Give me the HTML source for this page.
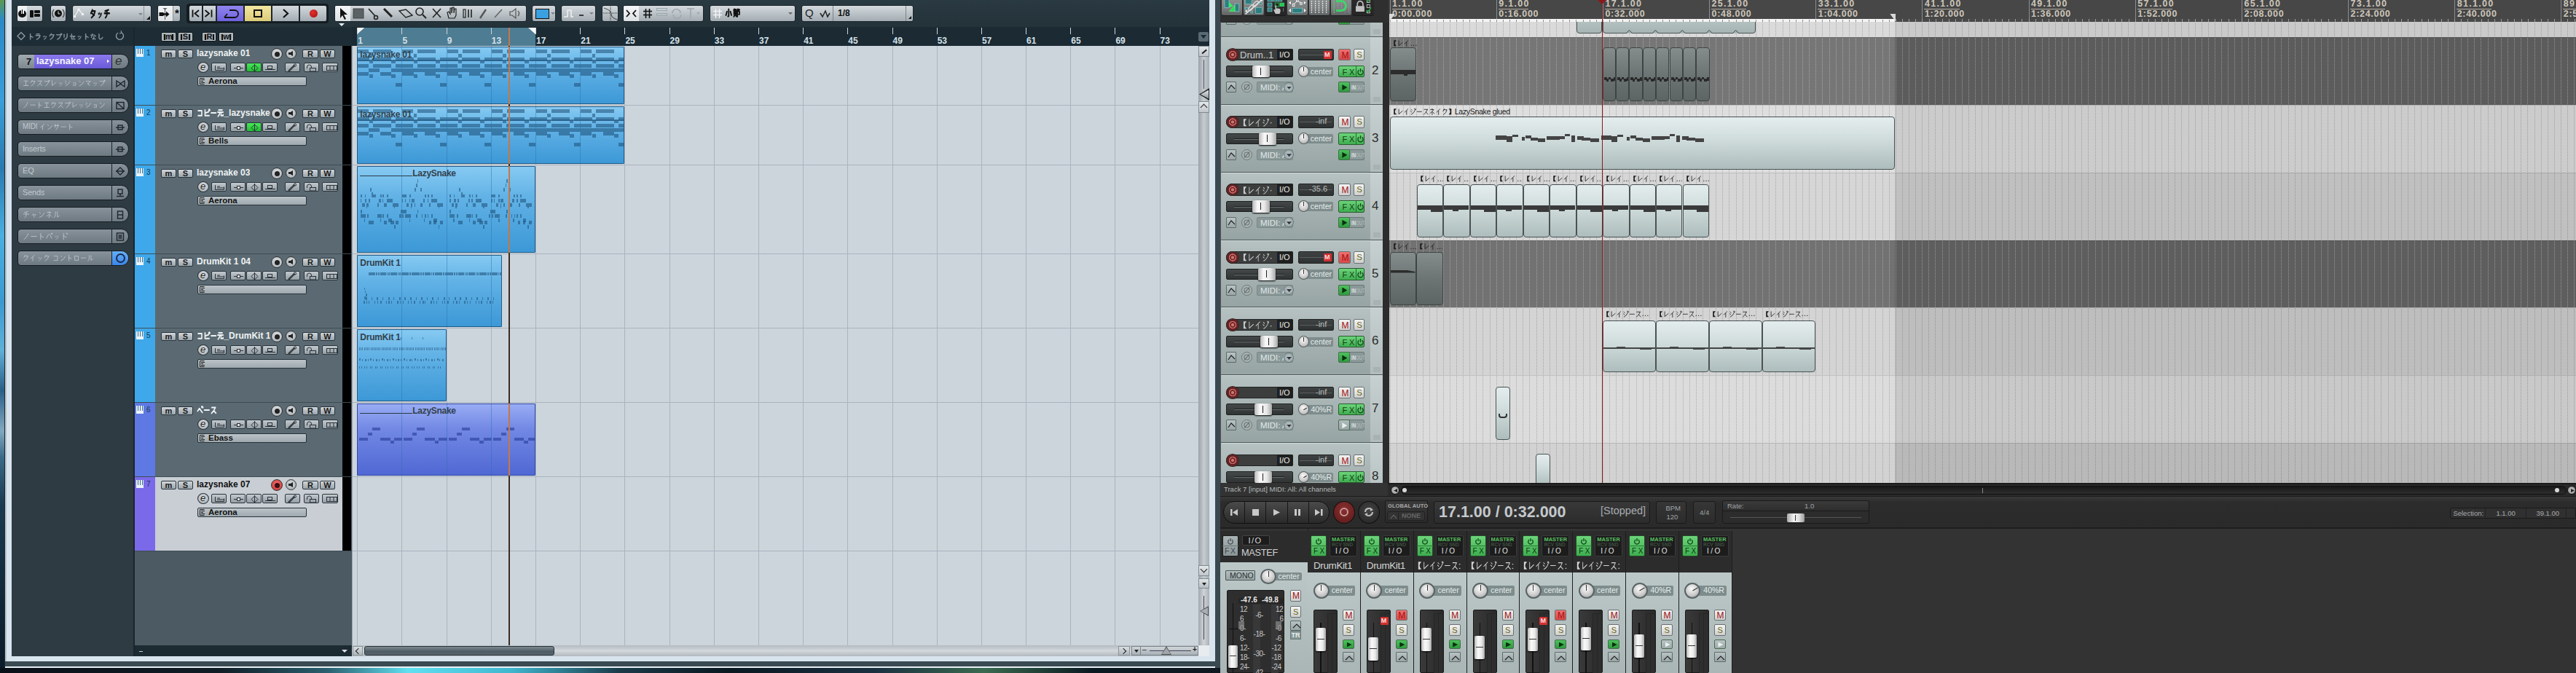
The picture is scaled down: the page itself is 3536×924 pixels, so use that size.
<!DOCTYPE html><html><head><meta charset="utf-8"><style>
html,body{margin:0;padding:0;}
body{width:3536px;height:924px;overflow:hidden;position:relative;background:#333;font-family:"Liberation Sans",sans-serif;}
div{position:absolute;box-sizing:border-box;}
.cb{background:linear-gradient(180deg,#d2d8dc 0%,#b4bcc2 50%,#9ca6ac 100%);border:1px solid #27323a;border-radius:2px;color:#1a1a1a;font-weight:bold;text-align:center;overflow:hidden}
.cbs{background:linear-gradient(180deg,#c8ced2 0%,#aab2b8 60%,#959fa5 100%);border:1px solid #2a353c;border-radius:3px;color:#222;text-align:center;overflow:hidden;font-size:10px;line-height:11px}
.cbg{background:linear-gradient(180deg,#6ef07a 0%,#2ed042 60%,#20b030 100%);border:1px solid #204020;border-radius:3px;color:#104010;text-align:center;font-size:10px;line-height:11px}
.circ{border-radius:50%;background:radial-gradient(circle at 50% 40%,#e0e4e6,#9aa2a8);border:1px solid #2a3238}
.ib{background:linear-gradient(180deg,#c4cbd0 0%,#a9b2b8 100%);border:1px solid #27323a;border-radius:3px}
.insp{background:linear-gradient(180deg,#8e999f 0%,#77838a 100%);border:1px solid #1a242a;border-radius:4px 11px 11px 4px;color:#b8c2c8;font-size:12px;line-height:20px;padding-left:8px;white-space:nowrap;overflow:hidden}
.part{border:1px solid #1e5c8c;border-radius:1px;overflow:hidden;background:linear-gradient(180deg,#86caf2 0%,#62b2e6 35%,#3c98d6 100%)}
.partv{border:1px solid #3048a8;border-radius:1px;overflow:hidden;background:linear-gradient(180deg,#98acf4 0%,#7288e4 35%,#5068d4 100%)}
.n{background:rgba(28,78,118,0.55)}
.nv{background:rgba(40,60,150,0.6)}

.rbtn{background:linear-gradient(180deg,#f0f0f0,#c4c4c4);border:1px solid #5a6060;border-radius:2px;text-align:center;font-size:11px;line-height:14px}
.rdk{background:#3a3d3d;border:1px solid #262828;border-radius:3px}
.item{border:1px solid #4a5252;border-radius:4px;background:linear-gradient(180deg,#e4eded 0%,#cfdbdb 45%,#adbcbc 100%);overflow:hidden}
.itemd{border:1px solid #3e4444;border-radius:4px;background:linear-gradient(180deg,#848c8c 0%,#6c7474 50%,#5c6464 100%);overflow:hidden}
.lbl{font-size:11px;color:#1a1a1a;white-space:nowrap;line-height:12px}
.fxg{background:linear-gradient(180deg,#5ccc6c,#3aa84a);border:1px solid #2a4a2e;border-radius:2px}
</style></head><body>
<div style="left:0px;top:0px;width:6px;height:924px;background:linear-gradient(180deg,#5a9a50 0%,#2a8ac8 3%,#3a9ed8 15%,#2a7ab0 25%,#4aaee0 35%,#3a9ad0 45%,#60b0d8 52%,#2a6088 58%,#80a8c0 64%,#3a6a88 68%,#1a3a50 75%,#0a1a28 100%)"></div>
<div style="left:6px;top:0px;width:1px;height:924px;background:#202830"></div>
<div style="left:7px;top:0px;width:2px;height:917px;background:#b8c4cc"></div>
<div style="left:9px;top:0px;width:7px;height:902px;background:#d8e4ee"></div>
<div style="left:1660px;top:0px;width:8px;height:902px;background:#d8e4ee"></div>
<div style="left:9px;top:901px;width:1659px;height:7px;background:#d8e4ee"></div>
<div style="left:7px;top:908px;width:1668px;height:7px;background:#3a4a52"></div>
<div style="left:7px;top:915px;width:1668px;height:2px;background:#e8f0f4"></div>
<div style="left:0px;top:917px;width:1675px;height:7px;background:linear-gradient(90deg,#0a1018 0px,#101c24 300px,#2a6070 450px,#60e0f0 560px,#40b8d0 700px,#1a3a48 850px,#0a1820 1000px,#1a3040 1200px,#3a6a50 1350px,#0a1820 1500px,#101820 1675px)"></div>
<div style="left:1668px;top:0px;width:7px;height:917px;background:#3a4850"></div>
<div style="left:16px;top:0px;width:1644px;height:37px;background:linear-gradient(180deg,#2a3a42,#243239)"></div>
<div style="left:23px;top:7px;width:36px;height:23px;background:linear-gradient(180deg,#d4d9dd 0%,#b9c1c6 55%,#a3acb2 100%);border-radius:3px;border:1px solid #1b252b;"></div>
<div style="left:24px;top:8px;width:13px;height:21px;background:linear-gradient(180deg,#f2f4f5,#d8dde0);border-radius:2px 0 0 2px"></div>
<div style="left:25px;top:13.5px;width:10.5px;height:10.5px;border-radius:50%;background:#111"></div>
<div style="left:28.5px;top:12px;width:4.0px;height:6.5px;background:#eef0f2"></div>
<div style="left:29.8px;top:12.5px;width:1.4px;height:6.0px;background:#111"></div>
<div style="left:41px;top:14px;width:4.6px;height:9.5px;background:#111;border-radius:1px"></div>
<div style="left:46.8px;top:14px;width:8.2px;height:4.3px;background:#111;border-radius:1px"></div>
<div style="left:46.8px;top:19.3px;width:8.2px;height:4.2px;background:#111;border-radius:1px"></div>
<div style="left:69px;top:7px;width:22px;height:23px;background:linear-gradient(180deg,#d4d9dd 0%,#b9c1c6 55%,#a3acb2 100%);border-radius:3px;border:1px solid #1b252b;"></div>
<svg style="position:absolute;left:69px;top:7px" width="22" height="23"><path d="M5,6 A8,8 0 0 0 5,17" fill="none" stroke="#555" stroke-width="1.6"/><path d="M17,6 A8,8 0 0 1 17,17" fill="none" stroke="#555" stroke-width="1.6"/><circle cx="11" cy="11.5" r="5" fill="#111"/><polyline points="11,8.5 11,12 13.5,12" fill="none" stroke="#ddd" stroke-width="1"/></svg>
<div style="left:99px;top:7px;width:109px;height:23px;background:linear-gradient(180deg,#d4d9dd 0%,#b9c1c6 55%,#a3acb2 100%);border-radius:3px;border:1px solid #1b252b;"></div>
<div style="left:123px;top:11px;white-space:nowrap;--jpx:0.72;font-size:14px;font-weight:bold;color:#111;line-height:14px"><svg width="28.7" height="11.5" style="display:inline-block;vertical-align:-1.1px;overflow:visible;position:static"><path transform="translate(0.50,0) scale(0.827,1.148)" d="M4,0.5 L1.5,4.5 M3,2 L8.5,2 Q7.5,7 2.5,9.8 M3.5,4.8 L7,6.8" fill="none" stroke="#111" stroke-width="2.16" stroke-linecap="round" stroke-linejoin="round"/><path transform="translate(11.32,3.21) scale(0.595,0.827)" d="M1.5,2.5 L2.5,4.5 M4.2,1.8 L5.2,3.8 M8.5,2.5 Q7.5,7.5 3,9.8" fill="none" stroke="#111" stroke-width="2.16" stroke-linecap="round" stroke-linejoin="round"/><path transform="translate(19.66,0) scale(0.827,1.148)" d="M7.5,0.5 L2,2 M1,4.5 L9,4.5 M5,2 L5,6 Q4.5,8.5 2.5,9.8" fill="none" stroke="#111" stroke-width="2.16" stroke-linecap="round" stroke-linejoin="round"/></svg></div>
<svg style="position:absolute;left:100px;top:11px" width="18" height="14"><polyline points="2.5,11.5 8,2 13.5,8.5" fill="none" stroke="#f0f2f4" stroke-width="1.2"/><rect x="1" y="10" width="3" height="3" fill="#f0f2f4"/><rect x="6.5" y="0.5" width="3" height="3" fill="#f0f2f4"/><rect x="12" y="7" width="3" height="3" fill="#f0f2f4"/></svg>
<div style="left:190px;top:18px;width:6px;height:3px;background:#7a848a;clip-path:polygon(0 0,100% 0,50% 100%)"></div>
<div style="left:197px;top:8px;width:1px;height:21px;background:#8a949a"></div>
<div style="left:201px;top:22px;width:5px;height:5px;background:#111;clip-path:polygon(100% 0,100% 100%,0 100%)"></div>
<div style="left:216px;top:7px;width:32px;height:23px;background:linear-gradient(180deg,#d4d9dd 0%,#b9c1c6 55%,#a3acb2 100%);border-radius:3px;border:1px solid #1b252b;"></div>
<div style="left:237px;top:8px;width:1px;height:21px;background:#8a949a"></div>
<div style="left:217px;top:8px;width:20px;height:21px;background:linear-gradient(180deg,#f4f6f7,#dde1e4);border-radius:2px 0 0 2px"></div>
<div style="left:240px;top:9px;white-space:nowrap;font-size:15px;font-weight:bold;color:#111">*</div>
<svg style="position:absolute;left:217px;top:9px" width="20" height="19"><rect x="1.5" y="8" width="6" height="5" fill="#111"/><rect x="7" y="9" width="4" height="3" fill="#111"/><polygon points="11,6.5 15.5,10.5 11,14.5" fill="#111"/><line x1="9.5" y1="3" x2="9.5" y2="18" stroke="#555" stroke-width="1"/><polygon points="6.5,2 12.5,2 9.5,5" fill="#666"/></svg>
<div style="left:256px;top:5px;width:195px;height:27px;background:#141c20;border-radius:4px"></div>
<div style="left:259px;top:7px;width:19px;height:23px;background:linear-gradient(180deg,#d4d9dd 0%,#b9c1c6 55%,#a3acb2 100%);border-radius:3px;border:1px solid #1b252b;border-radius:3px 0 0 3px"><svg width="17" height="21"><polyline points="13,6 7.5,10.5 13,15" fill="none" stroke="#111" stroke-width="1.8"/><line x1="4.5" y1="5.5" x2="4.5" y2="15.5" stroke="#111" stroke-width="1.8"/></svg></div>
<div style="left:278px;top:7px;width:19px;height:23px;background:linear-gradient(180deg,#d4d9dd 0%,#b9c1c6 55%,#a3acb2 100%);border-radius:3px;border:1px solid #1b252b;border-radius:0"><svg width="17" height="21"><polyline points="2.5,6 8,10.5 2.5,15" fill="none" stroke="#111" stroke-width="1.8"/><line x1="11.5" y1="5.5" x2="11.5" y2="15.5" stroke="#111" stroke-width="1.8"/></svg></div>
<div style="left:297px;top:7px;width:38px;height:23px;background:linear-gradient(180deg,#8f84ee,#6f62dc);border:1px solid #1b252b"><svg width="36" height="21"><path d="M10,16 H24 A5,5 0 0 0 24,6 H17" fill="none" stroke="#111" stroke-width="1.8"/><line x1="10" y1="16" x2="14" y2="11" stroke="#111" stroke-width="1.8"/></svg></div>
<div style="left:335px;top:7px;width:38px;height:23px;background:linear-gradient(180deg,#f2e6a0,#dccb78);border:1px solid #1b252b"><div style="left:12px;top:5px;width:12px;height:11px;border:2px solid #111"></div></div>
<div style="left:373px;top:7px;width:38px;height:23px;background:linear-gradient(180deg,#d4d9dd 0%,#b9c1c6 55%,#a3acb2 100%);border-radius:3px;border:1px solid #1b252b;border-radius:0"><svg width="36" height="21"><polyline points="15,5 21,10.5 15,16" fill="none" stroke="#111" stroke-width="2.2"/></svg></div>
<div style="left:411px;top:7px;width:38px;height:23px;background:linear-gradient(180deg,#d4d9dd 0%,#b9c1c6 55%,#a3acb2 100%);border-radius:3px;border:1px solid #1b252b;border-radius:0 3px 3px 0"><div style="left:13px;top:5px;width:11px;height:11px;border-radius:50%;background:radial-gradient(circle at 40% 35%,#e03030,#a81010)"></div></div>
<div style="left:459px;top:7px;width:264px;height:23px;background:linear-gradient(180deg,#d4d9dd 0%,#b9c1c6 55%,#a3acb2 100%);border-radius:3px;border:1px solid #1b252b;"></div>
<div style="left:460px;top:8px;width:21px;height:21px;background:linear-gradient(180deg,#f4f6f7,#dde1e4);border-radius:2px 0 0 2px"></div>
<svg style="position:absolute;left:459px;top:7px" width="264" height="23" stroke="#222" fill="none" stroke-width="1.6">
<polygon points="8,4 8,18 11,14 14,20 16,19 13,13 18,13" fill="#111" stroke="none"/>
<rect x="26" y="5" width="14" height="13" fill="#5a6266" stroke="#444" stroke-width="1"/>
<line x1="47" y1="5" x2="56" y2="15"/><circle cx="57" cy="17" r="2.5"/>
<line x1="68" y1="5" x2="79" y2="16" stroke-width="3"/>
<polygon points="89,8 98,6 107,14 98,17" stroke-width="1.4"/>
<circle cx="117" cy="9" r="5"/><line x1="121" y1="13" x2="126" y2="18" stroke-width="2"/>
<line x1="135" y1="5" x2="146" y2="17"/><line x1="146" y1="5" x2="135" y2="17"/>
<path d="M157,18 L155,10 L157,9 L159,12 L159,4 L161,4 L161,11 L162,3 L164,3 L164,11 L165,5 L167,5 L167,14 L165,18 Z" stroke-width="1.2"/>
<rect x="177" y="6" width="3" height="11" stroke-width="1.2"/><line x1="184" y1="6" x2="184" y2="17"/><line x1="188" y1="6" x2="188" y2="17"/>
<line x1="200" y1="18" x2="208" y2="6" stroke="#555" stroke-width="2.4"/>
<line x1="220" y1="17" x2="230" y2="6" stroke="#666"/>
<polygon points="241,9 244,9 249,5 249,18 244,14 241,14" stroke="#555" stroke-width="1.2"/><path d="M252,8 Q255,11.5 252,15" stroke="#666"/>
</svg>
<div style="left:465px;top:32px;width:8px;height:4px;background:#e8f0f4;clip-path:polygon(0 0,100% 0,50% 100%)"></div>
<div style="left:730px;top:7px;width:33px;height:23px;background:linear-gradient(180deg,#d4d9dd 0%,#b9c1c6 55%,#a3acb2 100%);border-radius:3px;border:1px solid #1b252b;"><div style="left:4px;top:4px;width:19px;height:14px;background:#3aa0e0;border:1.5px solid #111"></div><div style="left:25px;top:9px;width:6px;height:3px;background:#7a848a;clip-path:polygon(0 0,100% 0,50% 100%)"></div></div>
<div style="left:770px;top:7px;width:48px;height:23px;background:linear-gradient(180deg,#d4d9dd 0%,#b9c1c6 55%,#a3acb2 100%);border-radius:3px;border:1px solid #1b252b;"><svg width="48" height="21"><polyline points="3,15 8,15 8,6 13,6 13,15 16,15" fill="none" stroke="#eee" stroke-width="1.6"/><line x1="24" y1="13" x2="30" y2="13" stroke="#111" stroke-width="1.5"/><polygon points="38,9 44,9 41,12" fill="#7a848a"/></svg></div>
<div style="left:826px;top:7px;width:23px;height:23px;background:linear-gradient(180deg,#d4d9dd 0%,#b9c1c6 55%,#a3acb2 100%);border-radius:3px;border:1px solid #1b252b;"><svg width="23" height="21"><path d="M2,3 Q12,6 12,11 Q12,17 21,19" fill="none" stroke="#555" stroke-width="1.2"/><line x1="11" y1="1" x2="11" y2="20" stroke="#222" stroke-dasharray="1,1"/><line x1="1" y1="10" x2="22" y2="10" stroke="#222" stroke-dasharray="1,1"/></svg></div>
<div style="left:855px;top:7px;width:111px;height:23px;background:linear-gradient(180deg,#d4d9dd 0%,#b9c1c6 55%,#a3acb2 100%);border-radius:3px;border:1px solid #1b252b;"></div>
<div style="left:856px;top:8px;width:21px;height:21px;background:linear-gradient(180deg,#f4f6f7,#dde1e4);border-radius:2px 0 0 2px"><svg width="21" height="21"><polyline points="4,6 8,10.5 4,15" fill="none" stroke="#111" stroke-width="1.8"/><polyline points="17,6 13,10.5 17,15" fill="none" stroke="#111" stroke-width="1.8"/></svg></div>
<svg style="position:absolute;left:882px;top:11px" width="14" height="15" stroke="#111" stroke-width="1.6"><line x1="4.5" y1="1" x2="4.5" y2="14"/><line x1="9.5" y1="1" x2="9.5" y2="14"/><line x1="1" y1="4.5" x2="13" y2="4.5"/><line x1="1" y1="9.5" x2="13" y2="9.5"/></svg>
<div style="left:901px;top:11px;width:15px;height:4px;border:1px solid #9aa"></div>
<div style="left:901px;top:18px;width:15px;height:4px;border:1px solid #9aa"></div>
<svg style="position:absolute;left:921px;top:11px" width="16" height="16"><path d="M2,7 A5.5,5.5 0 0 1 13,7" fill="none" stroke="#a0a8ad" stroke-width="1.6"/><path d="M14,9 A5.5,5.5 0 0 1 3,9" fill="none" stroke="#a0a8ad" stroke-width="1.6"/></svg>
<svg style="position:absolute;left:942px;top:11px" width="20" height="16"><line x1="1" y1="1" x2="11" y2="1" stroke="#a0a8ad" stroke-width="1.6"/><line x1="6" y1="1" x2="6" y2="14" stroke="#a0a8ad" stroke-width="1.6"/><polygon points="14,6 19,6 16.5,9" fill="#a0a8ad"/></svg>
<div style="left:974px;top:7px;width:118px;height:23px;background:linear-gradient(180deg,#d4d9dd 0%,#b9c1c6 55%,#a3acb2 100%);border-radius:3px;border:1px solid #1b252b;"><svg style="position:absolute;left:3px;top:3px" width="14" height="15" stroke="#f4f6f8" stroke-width="1.4"><line x1="4.5" y1="1" x2="4.5" y2="14"/><line x1="9.5" y1="1" x2="9.5" y2="14"/><line x1="1" y1="4.5" x2="13" y2="4.5"/><line x1="1" y1="9.5" x2="13" y2="9.5"/></svg></div>
<div style="left:995px;top:11px;white-space:nowrap;--jpx:0.85;font-size:13.5px;font-weight:bold;color:#111;line-height:14px"><svg width="21.8" height="11.1" style="display:inline-block;vertical-align:-1.1px;overflow:visible;position:static"><path transform="translate(0.57,0) scale(0.941,1.107)" d="M5,0.5 L5,9 L4,9.5 M2.5,3.5 L1,8 M7.5,3.5 L9,8" fill="none" stroke="#111" stroke-width="1.98" stroke-linecap="round" stroke-linejoin="round"/><path transform="translate(11.47,0) scale(0.941,1.107)" d="M1.5,0.5 L0.8,2 M1.5,1 L4,1 M6.5,0.5 L5.8,2 M6.5,1 L9,1 M1.2,3 L4.5,3 L4.5,6.5 L1.2,6.5 L1.2,3 M1.2,4.8 L4.5,4.8 M2.5,6.5 L1,9.8 M3,7.5 L4.8,9.5 M6,3 L9,3 L9,7 L8,7 M6,3 L6,9.8" fill="none" stroke="#111" stroke-width="1.98" stroke-linecap="round" stroke-linejoin="round"/></svg></div>
<div style="left:1082px;top:17px;width:6px;height:3px;background:#667;clip-path:polygon(0 0,100% 0,50% 100%)"></div>
<div style="left:1100px;top:7px;width:154px;height:23px;background:linear-gradient(180deg,#d4d9dd 0%,#b9c1c6 55%,#a3acb2 100%);border-radius:3px;border:1px solid #1b252b;"><span style="position:absolute;left:4px;top:1px;font-size:15px;color:#222">Q</span><svg style="position:absolute;left:24px;top:5px" width="16" height="12"><polyline points="1,5 4,10 8,2 11,10 14,5" fill="none" stroke="#222" stroke-width="1.5"/></svg><span style="position:absolute;left:49px;top:3px;font-size:12px;font-weight:bold;color:#111">1/8</span></div>
<div style="left:1143px;top:8px;width:1px;height:21px;background:#7a848a"></div>
<div style="left:1243px;top:8px;width:1px;height:21px;background:#7a848a"></div>
<div style="left:1247px;top:22px;width:4px;height:4px;background:#111;clip-path:polygon(100% 0,100% 100%,0 100%)"></div>
<div style="left:16px;top:37px;width:167px;height:26px;background:#1e2d35"></div>
<svg style="position:absolute;left:22px;top:43px" width="14" height="14"><polygon points="7,1.5 12,6.5 7,11.5 2,6.5" fill="none" stroke="#8d9aa1" stroke-width="1.4"/></svg>
<div style="left:38px;top:44px;white-space:nowrap;font-size:10px;font-weight:bold;color:#7f8d95;letter-spacing:-0.3px"><svg width="104.5" height="8.2" style="display:inline-block;vertical-align:-0.8px;overflow:visible;position:static"><path transform="translate(0.50,0) scale(0.820,0.820)" d="M3.8,0.5 L3.8,9.8 M3.8,4.3 L8,6.3" fill="none" stroke="#7f8d95" stroke-width="1.83" stroke-linecap="round" stroke-linejoin="round"/><path transform="translate(10.00,0) scale(0.820,0.820)" d="M2.5,0.8 L7.5,0.8 M1.5,3.5 L8.5,3.5 M8.5,3.5 Q7.5,8 3,9.8" fill="none" stroke="#7f8d95" stroke-width="1.83" stroke-linecap="round" stroke-linejoin="round"/><path transform="translate(20.73,2.30) scale(0.590,0.590)" d="M1.5,2.5 L2.5,4.5 M4.2,1.8 L5.2,3.8 M8.5,2.5 Q7.5,7.5 3,9.8" fill="none" stroke="#7f8d95" stroke-width="1.83" stroke-linecap="round" stroke-linejoin="round"/><path transform="translate(29.00,0) scale(0.820,0.820)" d="M4,0.5 L1.5,4.2 M3,2 L8.5,2 Q7.5,7 2.5,9.8" fill="none" stroke="#7f8d95" stroke-width="1.83" stroke-linecap="round" stroke-linejoin="round"/><path transform="translate(38.50,0) scale(0.820,0.820)" d="M1.5,2 L8.5,2 M8.5,2 Q7.5,7.5 3,9.8 M9.2,0.2 a0.9,0.9 0 1 0 0.01,0" fill="none" stroke="#7f8d95" stroke-width="1.83" stroke-linecap="round" stroke-linejoin="round"/><path transform="translate(48.00,0) scale(0.820,0.820)" d="M2.5,1.5 L2.5,6 M7.5,0.5 L7.5,5 Q7,8.5 3.5,9.8" fill="none" stroke="#7f8d95" stroke-width="1.83" stroke-linecap="round" stroke-linejoin="round"/><path transform="translate(57.50,0) scale(0.820,0.820)" d="M1,4.5 L9,4.5 L6.5,6.5 M3.5,1 L3.5,9 L9,9" fill="none" stroke="#7f8d95" stroke-width="1.83" stroke-linecap="round" stroke-linejoin="round"/><path transform="translate(68.23,2.30) scale(0.590,0.590)" d="M1.5,2.5 L2.5,4.5 M4.2,1.8 L5.2,3.8 M8.5,2.5 Q7.5,7.5 3,9.8" fill="none" stroke="#7f8d95" stroke-width="1.83" stroke-linecap="round" stroke-linejoin="round"/><path transform="translate(76.50,0) scale(0.820,0.820)" d="M3.8,0.5 L3.8,9.8 M3.8,4.3 L8,6.3" fill="none" stroke="#7f8d95" stroke-width="1.83" stroke-linecap="round" stroke-linejoin="round"/><path transform="translate(86.00,0) scale(0.820,0.820)" d="M1,2.8 L5,2.5 M3.5,0.8 L1.8,6.5 M7,2.8 L8.8,4.5 M5.8,5 L5.8,9 Q4,9.8 3.8,8.8 Q4.5,7.8 8.5,9.5" fill="none" stroke="#7f8d95" stroke-width="1.83" stroke-linecap="round" stroke-linejoin="round"/><path transform="translate(95.50,0) scale(0.820,0.820)" d="M3,1 L3,7.5 Q3.5,9.8 5.5,9.5 Q8,9 9,6.5" fill="none" stroke="#7f8d95" stroke-width="1.83" stroke-linecap="round" stroke-linejoin="round"/></svg></div>
<svg style="position:absolute;left:157px;top:41px" width="16" height="16"><path d="M5,4 A5,5 0 1 0 10,4" fill="none" stroke="#8d9aa1" stroke-width="1.4"/><polyline points="9,1 10,4 7,5" fill="none" stroke="#8d9aa1" stroke-width="1.2"/></svg>
<div style="left:16px;top:63px;width:167px;height:838px;background:#2e3b42"></div>
<div style="left:183px;top:37px;width:2px;height:864px;background:#1b262c"></div>
<div style="left:24px;top:74px;width:153px;height:21px;background:linear-gradient(180deg,#87929a 0%,#6e7a82 100%);border:1px solid #141c21;border-radius:5px 11px 11px 5px"></div>
<div style="left:153px;top:74px;width:1px;height:21px;background:#1a2227"></div>
<div style="left:25px;top:75px;width:22px;height:19px;background:linear-gradient(180deg,#a0aab0,#7c878e);border-radius:4px 0 0 4px"></div>
<div style="left:36px;top:77px;white-space:nowrap;font-size:13px;font-weight:bold;color:#111">7</div>
<div style="left:47px;top:75px;width:106px;height:19px;background:linear-gradient(180deg,#8a78ec,#6a5ad8)"></div>
<div style="left:50px;top:76px;white-space:nowrap;font-size:13px;font-weight:bold;color:#f4f4ff">lazysnake 07</div>
<div style="left:147px;top:81.5px;width:3px;height:5.0px;background:#fff;clip-path:polygon(0 0,100% 50%,0 100%)"></div>
<div style="left:158px;top:74px;white-space:nowrap;font-size:17px;color:#333;font-style:italic">e</div>
<div style="left:24px;top:104px;width:153px;height:21px;background:linear-gradient(180deg,#87929a 0%,#6e7a82 100%);border:1px solid #141c21;border-radius:5px 11px 11px 5px"></div>
<div style="left:153px;top:104px;width:1px;height:21px;background:#1a2227"></div>
<div style="left:31px;top:108px;white-space:nowrap;font-size:10px;color:#c0c8ce;letter-spacing:-0.2px;max-width:121px;overflow:hidden"><svg width="114.0" height="8.2" style="display:inline-block;vertical-align:-0.8px;overflow:visible;position:static"><path transform="translate(0.50,0) scale(0.820,0.820)" d="M2,1.5 L8,1.5 M5,1.5 L5,9 M1,9 L9,9" fill="none" stroke="#c0c8ce" stroke-width="0.98" stroke-linecap="round" stroke-linejoin="round"/><path transform="translate(10.00,0) scale(0.820,0.820)" d="M4,0.5 L1.5,4.2 M3,2 L8.5,2 Q7.5,7 2.5,9.8" fill="none" stroke="#c0c8ce" stroke-width="0.98" stroke-linecap="round" stroke-linejoin="round"/><path transform="translate(19.50,0) scale(0.820,0.820)" d="M2,1.5 L8,1.5 M8,1.5 Q6,6.5 1.5,9.5 M5.2,5.8 L9,9.3" fill="none" stroke="#c0c8ce" stroke-width="0.98" stroke-linecap="round" stroke-linejoin="round"/><path transform="translate(29.00,0) scale(0.820,0.820)" d="M1.5,2 L8.5,2 M8.5,2 Q7.5,7.5 3,9.8 M9.2,0.2 a0.9,0.9 0 1 0 0.01,0" fill="none" stroke="#c0c8ce" stroke-width="0.98" stroke-linecap="round" stroke-linejoin="round"/><path transform="translate(38.50,0) scale(0.820,0.820)" d="M2.5,1 L2.5,9 L9,4" fill="none" stroke="#c0c8ce" stroke-width="0.98" stroke-linecap="round" stroke-linejoin="round"/><path transform="translate(49.23,2.30) scale(0.590,0.590)" d="M1.5,2.5 L2.5,4.5 M4.2,1.8 L5.2,3.8 M8.5,2.5 Q7.5,7.5 3,9.8" fill="none" stroke="#c0c8ce" stroke-width="0.98" stroke-linecap="round" stroke-linejoin="round"/><path transform="translate(57.50,0) scale(0.820,0.820)" d="M1.5,1.5 L3.2,2.8 M1,4.5 L2.7,5.8 M2,9.5 Q7,7.5 9,2" fill="none" stroke="#c0c8ce" stroke-width="0.98" stroke-linecap="round" stroke-linejoin="round"/><path transform="translate(68.23,2.30) scale(0.590,0.590)" d="M2,2 L8,2 L8,9 L2,9 M2,5.5 L8,5.5" fill="none" stroke="#c0c8ce" stroke-width="0.98" stroke-linecap="round" stroke-linejoin="round"/><path transform="translate(76.50,0) scale(0.820,0.820)" d="M1.8,1.8 L3.5,3.3 M2,9.5 Q7,8 9,3" fill="none" stroke="#c0c8ce" stroke-width="0.98" stroke-linecap="round" stroke-linejoin="round"/><path transform="translate(86.00,0) scale(0.820,0.820)" d="M1.5,2 L8.5,2 M8.5,2 Q6.5,5 4,6.5 M4.5,5.2 L7.2,9.3" fill="none" stroke="#c0c8ce" stroke-width="0.98" stroke-linecap="round" stroke-linejoin="round"/><path transform="translate(96.73,2.30) scale(0.590,0.590)" d="M1.5,2.5 L2.5,4.5 M4.2,1.8 L5.2,3.8 M8.5,2.5 Q7.5,7.5 3,9.8" fill="none" stroke="#c0c8ce" stroke-width="0.98" stroke-linecap="round" stroke-linejoin="round"/><path transform="translate(105.00,0) scale(0.820,0.820)" d="M1.5,2 L8.5,2 M8.5,2 Q7.5,7.5 3,9.8 M9.2,0.2 a0.9,0.9 0 1 0 0.01,0" fill="none" stroke="#c0c8ce" stroke-width="0.98" stroke-linecap="round" stroke-linejoin="round"/></svg></div>
<svg style="position:absolute;left:158px;top:107.5px" width="14" height="14" stroke="#1e262b" stroke-width="1.4"><polygon points="2,3 8,7 2,11" fill="none"/><polygon points="13,3 7,7 13,11" fill="none"/></svg>
<div style="left:24px;top:134px;width:153px;height:21px;background:linear-gradient(180deg,#87929a 0%,#6e7a82 100%);border:1px solid #141c21;border-radius:5px 11px 11px 5px"></div>
<div style="left:153px;top:134px;width:1px;height:21px;background:#1a2227"></div>
<div style="left:31px;top:138px;white-space:nowrap;font-size:10px;color:#c0c8ce;letter-spacing:-0.2px;max-width:121px;overflow:hidden"><svg width="114.0" height="8.2" style="display:inline-block;vertical-align:-0.8px;overflow:visible;position:static"><path transform="translate(0.50,0) scale(0.820,0.820)" d="M8,1 Q6,7 1.5,9.8" fill="none" stroke="#c0c8ce" stroke-width="0.98" stroke-linecap="round" stroke-linejoin="round"/><path transform="translate(10.00,0) scale(0.820,0.820)" d="M1,5 L9,5" fill="none" stroke="#c0c8ce" stroke-width="0.98" stroke-linecap="round" stroke-linejoin="round"/><path transform="translate(19.50,0) scale(0.820,0.820)" d="M3.8,0.5 L3.8,9.8 M3.8,4.3 L8,6.3" fill="none" stroke="#c0c8ce" stroke-width="0.98" stroke-linecap="round" stroke-linejoin="round"/><path transform="translate(29.00,0) scale(0.820,0.820)" d="M2,1.5 L8,1.5 M5,1.5 L5,9 M1,9 L9,9" fill="none" stroke="#c0c8ce" stroke-width="0.98" stroke-linecap="round" stroke-linejoin="round"/><path transform="translate(38.50,0) scale(0.820,0.820)" d="M4,0.5 L1.5,4.2 M3,2 L8.5,2 Q7.5,7 2.5,9.8" fill="none" stroke="#c0c8ce" stroke-width="0.98" stroke-linecap="round" stroke-linejoin="round"/><path transform="translate(48.00,0) scale(0.820,0.820)" d="M2,1.5 L8,1.5 M8,1.5 Q6,6.5 1.5,9.5 M5.2,5.8 L9,9.3" fill="none" stroke="#c0c8ce" stroke-width="0.98" stroke-linecap="round" stroke-linejoin="round"/><path transform="translate(57.50,0) scale(0.820,0.820)" d="M1.5,2 L8.5,2 M8.5,2 Q7.5,7.5 3,9.8 M9.2,0.2 a0.9,0.9 0 1 0 0.01,0" fill="none" stroke="#c0c8ce" stroke-width="0.98" stroke-linecap="round" stroke-linejoin="round"/><path transform="translate(67.00,0) scale(0.820,0.820)" d="M2.5,1 L2.5,9 L9,4" fill="none" stroke="#c0c8ce" stroke-width="0.98" stroke-linecap="round" stroke-linejoin="round"/><path transform="translate(77.73,2.30) scale(0.590,0.590)" d="M1.5,2.5 L2.5,4.5 M4.2,1.8 L5.2,3.8 M8.5,2.5 Q7.5,7.5 3,9.8" fill="none" stroke="#c0c8ce" stroke-width="0.98" stroke-linecap="round" stroke-linejoin="round"/><path transform="translate(86.00,0) scale(0.820,0.820)" d="M1.5,1.5 L3.2,2.8 M1,4.5 L2.7,5.8 M2,9.5 Q7,7.5 9,2" fill="none" stroke="#c0c8ce" stroke-width="0.98" stroke-linecap="round" stroke-linejoin="round"/><path transform="translate(96.73,2.30) scale(0.590,0.590)" d="M2,2 L8,2 L8,9 L2,9 M2,5.5 L8,5.5" fill="none" stroke="#c0c8ce" stroke-width="0.98" stroke-linecap="round" stroke-linejoin="round"/><path transform="translate(105.00,0) scale(0.820,0.820)" d="M1.8,1.8 L3.5,3.3 M2,9.5 Q7,8 9,3" fill="none" stroke="#c0c8ce" stroke-width="0.98" stroke-linecap="round" stroke-linejoin="round"/></svg></div>
<svg style="position:absolute;left:158px;top:137.5px" width="14" height="14" stroke="#1e262b" stroke-width="1.4"><rect x="2" y="2.5" width="10" height="9" fill="none"/><line x1="2" y1="2.5" x2="12" y2="11.5"/></svg>
<div style="left:24px;top:164px;width:153px;height:21px;background:linear-gradient(180deg,#87929a 0%,#6e7a82 100%);border:1px solid #141c21;border-radius:5px 11px 11px 5px"></div>
<div style="left:153px;top:164px;width:1px;height:21px;background:#1a2227"></div>
<div style="left:31px;top:168px;white-space:nowrap;font-size:10px;color:#c0c8ce;letter-spacing:-0.2px;max-width:121px;overflow:hidden">MIDI <svg width="47.5" height="8.2" style="display:inline-block;vertical-align:-0.8px;overflow:visible;position:static"><path transform="translate(0.50,0) scale(0.820,0.820)" d="M7.5,0.8 L1.5,6 M5,3.8 L5,9.8" fill="none" stroke="#c0c8ce" stroke-width="0.98" stroke-linecap="round" stroke-linejoin="round"/><path transform="translate(10.00,0) scale(0.820,0.820)" d="M1.8,1.8 L3.5,3.3 M2,9.5 Q7,8 9,3" fill="none" stroke="#c0c8ce" stroke-width="0.98" stroke-linecap="round" stroke-linejoin="round"/><path transform="translate(19.50,0) scale(0.820,0.820)" d="M1,3 L9,3 M3,0.5 L3,6 M7,0.5 L7,5 Q6.5,8.5 4,9.8" fill="none" stroke="#c0c8ce" stroke-width="0.98" stroke-linecap="round" stroke-linejoin="round"/><path transform="translate(29.00,0) scale(0.820,0.820)" d="M1,5 L9,5" fill="none" stroke="#c0c8ce" stroke-width="0.98" stroke-linecap="round" stroke-linejoin="round"/><path transform="translate(38.50,0) scale(0.820,0.820)" d="M3.8,0.5 L3.8,9.8 M3.8,4.3 L8,6.3" fill="none" stroke="#c0c8ce" stroke-width="0.98" stroke-linecap="round" stroke-linejoin="round"/></svg></div>
<svg style="position:absolute;left:158px;top:167.5px" width="14" height="14" stroke="#1e262b" stroke-width="1.4"><line x1="1" y1="7" x2="13" y2="7"/><rect x="4" y="4" width="6" height="6" fill="none"/></svg>
<div style="left:24px;top:194px;width:153px;height:21px;background:linear-gradient(180deg,#87929a 0%,#6e7a82 100%);border:1px solid #141c21;border-radius:5px 11px 11px 5px"></div>
<div style="left:153px;top:194px;width:1px;height:21px;background:#1a2227"></div>
<div style="left:31px;top:198px;white-space:nowrap;font-size:11px;color:#c0c8ce;letter-spacing:-0.2px;max-width:121px;overflow:hidden">Inserts</div>
<svg style="position:absolute;left:158px;top:197.5px" width="14" height="14" stroke="#1e262b" stroke-width="1.4"><line x1="1" y1="7" x2="13" y2="7"/><rect x="4" y="4" width="6" height="6" fill="none"/></svg>
<div style="left:24px;top:224px;width:153px;height:21px;background:linear-gradient(180deg,#87929a 0%,#6e7a82 100%);border:1px solid #141c21;border-radius:5px 11px 11px 5px"></div>
<div style="left:153px;top:224px;width:1px;height:21px;background:#1a2227"></div>
<div style="left:31px;top:228px;white-space:nowrap;font-size:11px;color:#c0c8ce;letter-spacing:-0.2px;max-width:121px;overflow:hidden">EQ</div>
<svg style="position:absolute;left:158px;top:227.5px" width="14" height="14" stroke="#1e262b" stroke-width="1.4"><polygon points="7,2 12,7 7,12 2,7" fill="none"/><line x1="1" y1="7" x2="13" y2="7"/></svg>
<div style="left:24px;top:254px;width:153px;height:21px;background:linear-gradient(180deg,#87929a 0%,#6e7a82 100%);border:1px solid #141c21;border-radius:5px 11px 11px 5px"></div>
<div style="left:153px;top:254px;width:1px;height:21px;background:#1a2227"></div>
<div style="left:31px;top:258px;white-space:nowrap;font-size:11px;color:#c0c8ce;letter-spacing:-0.2px;max-width:121px;overflow:hidden">Sends</div>
<svg style="position:absolute;left:158px;top:257.5px" width="14" height="14" stroke="#1e262b" stroke-width="1.4"><rect x="4" y="2" width="6" height="6" fill="none"/><line x1="7" y1="8" x2="7" y2="11"/><line x1="2" y1="11.5" x2="12" y2="11.5"/></svg>
<div style="left:24px;top:284px;width:153px;height:21px;background:linear-gradient(180deg,#87929a 0%,#6e7a82 100%);border:1px solid #141c21;border-radius:5px 11px 11px 5px"></div>
<div style="left:153px;top:284px;width:1px;height:21px;background:#1a2227"></div>
<div style="left:31px;top:288px;white-space:nowrap;font-size:11px;color:#c0c8ce;letter-spacing:-0.2px;max-width:121px;overflow:hidden"><svg width="52.2" height="9.0" style="display:inline-block;vertical-align:-0.9px;overflow:visible;position:static"><path transform="translate(0.55,0) scale(0.902,0.902)" d="M7.5,0.5 L2,2 M1,4.5 L9,4.5 M5,2 L5,6 Q4.5,8.5 2.5,9.8" fill="none" stroke="#c0c8ce" stroke-width="0.91" stroke-linecap="round" stroke-linejoin="round"/><path transform="translate(12.35,2.53) scale(0.649,0.649)" d="M1,4 L9,3 L7.5,6 M3.5,1 L6,9.8" fill="none" stroke="#c0c8ce" stroke-width="0.91" stroke-linecap="round" stroke-linejoin="round"/><path transform="translate(21.45,0) scale(0.902,0.902)" d="M1.8,1.8 L3.5,3.3 M2,9.5 Q7,8 9,3" fill="none" stroke="#c0c8ce" stroke-width="0.91" stroke-linecap="round" stroke-linejoin="round"/><path transform="translate(31.90,0) scale(0.902,0.902)" d="M5,0.3 L5,1.8 M2,1.8 L8,1.8 L1.5,7.5 M5,5.2 L5,9.8 M6.2,5.8 L9,8" fill="none" stroke="#c0c8ce" stroke-width="0.91" stroke-linecap="round" stroke-linejoin="round"/><path transform="translate(42.35,0) scale(0.902,0.902)" d="M3,1 L3,5 Q2.8,8 1,9.8 M6,1 L6,9 L9,6.8" fill="none" stroke="#c0c8ce" stroke-width="0.91" stroke-linecap="round" stroke-linejoin="round"/></svg></div>
<svg style="position:absolute;left:158px;top:287.5px" width="14" height="14" stroke="#1e262b" stroke-width="1.4"><rect x="3.5" y="2" width="7" height="10" fill="none"/><line x1="3.5" y1="7" x2="10.5" y2="7"/></svg>
<div style="left:24px;top:314px;width:153px;height:21px;background:linear-gradient(180deg,#87929a 0%,#6e7a82 100%);border:1px solid #141c21;border-radius:5px 11px 11px 5px"></div>
<div style="left:153px;top:314px;width:1px;height:21px;background:#1a2227"></div>
<div style="left:31px;top:318px;white-space:nowrap;font-size:11px;color:#c0c8ce;letter-spacing:-0.2px;max-width:121px;overflow:hidden"><svg width="62.7" height="9.0" style="display:inline-block;vertical-align:-0.9px;overflow:visible;position:static"><path transform="translate(0.55,0) scale(0.902,0.902)" d="M8,1 Q6,7 1.5,9.8" fill="none" stroke="#c0c8ce" stroke-width="0.91" stroke-linecap="round" stroke-linejoin="round"/><path transform="translate(11.00,0) scale(0.902,0.902)" d="M1,5 L9,5" fill="none" stroke="#c0c8ce" stroke-width="0.91" stroke-linecap="round" stroke-linejoin="round"/><path transform="translate(21.45,0) scale(0.902,0.902)" d="M3.8,0.5 L3.8,9.8 M3.8,4.3 L8,6.3" fill="none" stroke="#c0c8ce" stroke-width="0.91" stroke-linecap="round" stroke-linejoin="round"/><path transform="translate(31.90,0) scale(0.902,0.902)" d="M4,2 L1,8 M6,2 L9,8 M9.2,0.2 a0.9,0.9 0 1 0 0.01,0" fill="none" stroke="#c0c8ce" stroke-width="0.91" stroke-linecap="round" stroke-linejoin="round"/><path transform="translate(43.70,2.53) scale(0.649,0.649)" d="M1.5,2.5 L2.5,4.5 M4.2,1.8 L5.2,3.8 M8.5,2.5 Q7.5,7.5 3,9.8" fill="none" stroke="#c0c8ce" stroke-width="0.91" stroke-linecap="round" stroke-linejoin="round"/><path transform="translate(52.80,0) scale(0.902,0.902)" d="M3.8,0.5 L3.8,9.8 M3.8,4.3 L8,6.3 M7.8,0.2 L8.5,1.6 M9.3,0.2 L10,1.6" fill="none" stroke="#c0c8ce" stroke-width="0.91" stroke-linecap="round" stroke-linejoin="round"/></svg></div>
<svg style="position:absolute;left:158px;top:317.5px" width="14" height="14" stroke="#1e262b" stroke-width="1.4"><rect x="2.5" y="2" width="9" height="10" fill="none"/><line x1="4.5" y1="5" x2="9.5" y2="5"/><line x1="4.5" y1="7" x2="9.5" y2="7"/><line x1="4.5" y1="9" x2="9.5" y2="9"/></svg>
<div style="left:24px;top:344px;width:153px;height:21px;background:linear-gradient(180deg,#87929a 0%,#6e7a82 100%);border:1px solid #141c21;border-radius:5px 11px 11px 5px"></div>
<div style="left:153px;top:344px;width:1px;height:21px;background:#1a2227"></div>
<div style="left:31px;top:348px;white-space:nowrap;font-size:10px;color:#c0c8ce;letter-spacing:-0.2px;max-width:121px;overflow:hidden"><svg width="38.0" height="8.2" style="display:inline-block;vertical-align:-0.8px;overflow:visible;position:static"><path transform="translate(0.50,0) scale(0.820,0.820)" d="M4,0.5 L1.5,4.2 M3,2 L8.5,2 Q7.5,7 2.5,9.8" fill="none" stroke="#c0c8ce" stroke-width="0.98" stroke-linecap="round" stroke-linejoin="round"/><path transform="translate(10.00,0) scale(0.820,0.820)" d="M7.5,0.8 L1.5,6 M5,3.8 L5,9.8" fill="none" stroke="#c0c8ce" stroke-width="0.98" stroke-linecap="round" stroke-linejoin="round"/><path transform="translate(20.73,2.30) scale(0.590,0.590)" d="M1.5,2.5 L2.5,4.5 M4.2,1.8 L5.2,3.8 M8.5,2.5 Q7.5,7.5 3,9.8" fill="none" stroke="#c0c8ce" stroke-width="0.98" stroke-linecap="round" stroke-linejoin="round"/><path transform="translate(29.00,0) scale(0.820,0.820)" d="M4,0.5 L1.5,4.2 M3,2 L8.5,2 Q7.5,7 2.5,9.8" fill="none" stroke="#c0c8ce" stroke-width="0.98" stroke-linecap="round" stroke-linejoin="round"/></svg> <svg width="57.0" height="8.2" style="display:inline-block;vertical-align:-0.8px;overflow:visible;position:static"><path transform="translate(0.50,0) scale(0.820,0.820)" d="M2,2 L8,2 L8,9 L2,9" fill="none" stroke="#c0c8ce" stroke-width="0.98" stroke-linecap="round" stroke-linejoin="round"/><path transform="translate(10.00,0) scale(0.820,0.820)" d="M1.8,1.8 L3.5,3.3 M2,9.5 Q7,8 9,3" fill="none" stroke="#c0c8ce" stroke-width="0.98" stroke-linecap="round" stroke-linejoin="round"/><path transform="translate(19.50,0) scale(0.820,0.820)" d="M3.8,0.5 L3.8,9.8 M3.8,4.3 L8,6.3" fill="none" stroke="#c0c8ce" stroke-width="0.98" stroke-linecap="round" stroke-linejoin="round"/><path transform="translate(29.00,0) scale(0.820,0.820)" d="M2,2 L8,2 L8,9 L2,9 L2,2" fill="none" stroke="#c0c8ce" stroke-width="0.98" stroke-linecap="round" stroke-linejoin="round"/><path transform="translate(38.50,0) scale(0.820,0.820)" d="M1,5 L9,5" fill="none" stroke="#c0c8ce" stroke-width="0.98" stroke-linecap="round" stroke-linejoin="round"/><path transform="translate(48.00,0) scale(0.820,0.820)" d="M3,1 L3,5 Q2.8,8 1,9.8 M6,1 L6,9 L9,6.8" fill="none" stroke="#c0c8ce" stroke-width="0.98" stroke-linecap="round" stroke-linejoin="round"/></svg></div>
<div style="left:154px;top:345px;width:22px;height:19px;background:linear-gradient(180deg,#66aef8,#3a86e8);border-radius:0 10px 10px 0"></div>
<div style="left:159px;top:348px;width:13px;height:13px;border-radius:50%;border:2px solid #1a2a50"></div>
<div style="left:185px;top:37px;width:298px;height:26px;background:#1e2d35"></div>
<div style="left:221px;top:44px;width:21px;height:13px;background:#98a2a8;border:1px solid #0e1418;border-radius:2px;box-shadow:inset 0 0 0 1px #c4ccd0"><div style="left:3px;top:2px;width:2px;height:8px;background:#111"></div><div style="left:14px;top:2px;width:2px;height:8px;background:#111"></div><span style="position:absolute;left:5px;top:-1px;width:9px;text-align:center;font-size:11px;font-weight:bold;color:#111;line-height:13px">m</span></div>
<div style="left:244px;top:44px;width:21px;height:13px;background:#98a2a8;border:1px solid #0e1418;border-radius:2px;box-shadow:inset 0 0 0 1px #c4ccd0"><div style="left:3px;top:2px;width:2px;height:8px;background:#111"></div><div style="left:14px;top:2px;width:2px;height:8px;background:#111"></div><span style="position:absolute;left:5px;top:-1px;width:9px;text-align:center;font-size:11px;font-weight:bold;color:#111;line-height:13px">S</span></div>
<div style="left:277px;top:44px;width:20px;height:13px;background:#98a2a8;border:1px solid #0e1418;border-radius:2px;box-shadow:inset 0 0 0 1px #c4ccd0"><div style="left:3px;top:2px;width:2px;height:8px;background:#111"></div><div style="left:14px;top:2px;width:2px;height:8px;background:#111"></div><span style="position:absolute;left:5px;top:-1px;width:9px;text-align:center;font-size:11px;font-weight:bold;color:#111;line-height:13px">R</span></div>
<div style="left:300px;top:44px;width:21px;height:13px;background:#98a2a8;border:1px solid #0e1418;border-radius:2px;box-shadow:inset 0 0 0 1px #c4ccd0"><div style="left:3px;top:2px;width:2px;height:8px;background:#111"></div><div style="left:14px;top:2px;width:2px;height:8px;background:#111"></div><span style="position:absolute;left:5px;top:-1px;width:9px;text-align:center;font-size:11px;font-weight:bold;color:#111;line-height:13px">w</span></div>
<div style="left:185px;top:63px;width:298px;height:823px;background:#4c5b63"></div>
<div style="left:185px;top:63px;width:28px;height:82px;background:#3ea8ea"></div>
<div style="left:187px;top:67px;width:10px;height:11px;background:#eaf4fa"></div>
<div style="left:189.0px;top:67px;width:1.2px;height:7px;background:#3a6a8a"></div>
<div style="left:191.8px;top:67px;width:1.2px;height:7px;background:#3a6a8a"></div>
<div style="left:194.6px;top:67px;width:1.2px;height:7px;background:#3a6a8a"></div>
<div style="left:201px;top:67px;white-space:nowrap;font-size:10px;color:#1b3a50">1</div>
<div style="left:213px;top:63px;width:257px;height:82px;background:#5b6a72"></div>
<div style="left:185px;top:144px;width:298px;height:1px;background:#3e4c54"></div>
<div style="left:470px;top:63px;width:12px;height:81px;background:#000"></div>
<div style="left:221px;top:67.5px;width:21px;height:12.5px;"><div class="cb" style="left:0;top:0;width:21px;height:12.5px;font-size:11px;line-height:11px">m</div></div>
<div style="left:244px;top:67.5px;width:21px;height:12.5px;"><div class="cb" style="left:0;top:0;width:21px;height:12.5px;font-size:11px;line-height:11px">S</div></div>
<div style="left:270px;top:66px;white-space:nowrap;--jpx:0.82;font-size:12px;font-weight:bold;color:#eef2f4;max-width:104px;overflow:hidden">lazysnake 01</div>
<div style="left:372px;top:66px;width:16px;height:16px;border-radius:50%;background:radial-gradient(circle at 50% 40%,#e4e8ea,#9ca4aa);border:1px solid #333"></div>
<div style="left:376.5px;top:70.5px;width:7.0px;height:7.0px;border-radius:50%;background:#222"></div>
<div style="left:392px;top:66px;width:15px;height:15px;border-radius:50%;background:radial-gradient(circle at 50% 40%,#dde2e5,#9aa3a9);border:1px solid #333"></div>
<div style="left:396px;top:70px;width:6px;height:7px;background:#222;clip-path:polygon(0 30%,40% 30%,100% 0,100% 100%,40% 70%,0 70%)"></div>
<div style="left:415px;top:67.5px;width:22px;height:12.5px;"><div class="cb" style="left:0;top:0;width:22px;height:12.5px;font-size:11px;line-height:11px">R</div></div>
<div style="left:439px;top:67.5px;width:21px;height:12.5px;"><div class="cb" style="left:0;top:0;width:21px;height:12.5px;font-size:11px;line-height:11px">W</div></div>
<div style="left:271px;top:85px;width:16px;height:15px;border-radius:50%;background:radial-gradient(circle at 50% 40%,#e0e4e6,#9ea6ac);border:1px solid #2a3238"><span style="position:absolute;left:3px;top:-2px;font-size:13px;font-style:italic;color:#222">e</span></div>
<div style="left:290px;top:86px;width:21px;height:13px;background:linear-gradient(180deg,#c2c9ce,#959fa5);border:1px solid #2a353b;border-radius:2px;"></div>
<div style="left:316px;top:86px;width:21px;height:13px;background:linear-gradient(180deg,#c2c9ce,#959fa5);border:1px solid #2a353b;border-radius:2px;"></div>
<div style="left:338px;top:86px;width:21px;height:13px;background:linear-gradient(180deg,#c2c9ce,#959fa5);border:1px solid #2a353b;border-radius:2px;background:linear-gradient(180deg,#48e858,#22c032);"></div>
<div style="left:360px;top:86px;width:21px;height:13px;background:linear-gradient(180deg,#c2c9ce,#959fa5);border:1px solid #2a353b;border-radius:2px;"></div>
<div style="left:391px;top:86px;width:21px;height:13px;background:linear-gradient(180deg,#c2c9ce,#959fa5);border:1px solid #2a353b;border-radius:2px;"></div>
<div style="left:417px;top:86px;width:21px;height:13px;background:linear-gradient(180deg,#c2c9ce,#959fa5);border:1px solid #2a353b;border-radius:2px;"></div>
<div style="left:442px;top:86px;width:22px;height:13px;background:linear-gradient(180deg,#c2c9ce,#959fa5);border:1px solid #2a353b;border-radius:2px;"></div>
<svg style="position:absolute;left:290.5px;top:86.5px" width="175" height="13" fill="none" stroke="#2a3238" stroke-width="1">
<polyline points="4.5,3 4.5,9.5 16.5,9.5 16.5,5.5"/><line x1="7" y1="5" x2="11" y2="5"/><line x1="7" y1="7" x2="16" y2="7"/>
<line x1="30" y1="6.5" x2="43" y2="6.5"/><rect x="34.5" y="4.5" width="4" height="4" fill="#ddd"/>
<polygon points="58.5,2 63,6.5 58.5,11 54,6.5"/><line x1="58.5" y1="1" x2="58.5" y2="12"/>
<rect x="76.5" y="3.5" width="6" height="4"/><line x1="73" y1="8.5" x2="87" y2="8.5"/>
<polygon points="106,11 105,10 112.5,2.5 113.5,3.5" fill="none" stroke-width="1.1"/><circle cx="114" cy="2.5" r="1.6" fill="none" stroke-width="1"/>
<path d="M130.5,7 V5 A3,3 0 0 1 136.5,5 V6"/><rect x="134.5" y="6.5" width="8" height="4.5"/>
<rect x="157.5" y="3.5" width="14" height="6"/><line x1="162" y1="3.5" x2="162" y2="9.5"/><line x1="167" y1="3.5" x2="167" y2="9.5"/>
</svg>
<div style="left:271px;top:105px;width:150px;height:13px;background:linear-gradient(180deg,#bcc4c9,#9ea8ae);border:1px solid #27323a;border-radius:2px"></div>
<svg style="position:absolute;left:273px;top:107px" width="10" height="10" stroke="#222" stroke-width="1" fill="none"><polyline points="7.5,0.5 1.5,0.5 1.5,8.5 7.5,8.5"/><line x1="3" y1="2.5" x2="8" y2="2.5"/><line x1="3" y1="4.5" x2="6" y2="4.5"/><line x1="3" y1="6.5" x2="8" y2="6.5"/></svg>
<div style="left:286px;top:105px;white-space:nowrap;font-size:11.5px;font-weight:bold;color:#111;line-height:13px">Aerona</div>
<div style="left:185px;top:145px;width:28px;height:82px;background:#3ea8ea"></div>
<div style="left:187px;top:149px;width:10px;height:11px;background:#eaf4fa"></div>
<div style="left:189.0px;top:149px;width:1.2px;height:7px;background:#3a6a8a"></div>
<div style="left:191.8px;top:149px;width:1.2px;height:7px;background:#3a6a8a"></div>
<div style="left:194.6px;top:149px;width:1.2px;height:7px;background:#3a6a8a"></div>
<div style="left:201px;top:149px;white-space:nowrap;font-size:10px;color:#1b3a50">2</div>
<div style="left:213px;top:145px;width:257px;height:82px;background:#5b6a72"></div>
<div style="left:185px;top:226px;width:298px;height:1px;background:#3e4c54"></div>
<div style="left:470px;top:145px;width:12px;height:81px;background:#000"></div>
<div style="left:221px;top:149.5px;width:21px;height:12.5px;"><div class="cb" style="left:0;top:0;width:21px;height:12.5px;font-size:11px;line-height:11px">m</div></div>
<div style="left:244px;top:149.5px;width:21px;height:12.5px;"><div class="cb" style="left:0;top:0;width:21px;height:12.5px;font-size:11px;line-height:11px">S</div></div>
<div style="left:270px;top:148px;white-space:nowrap;--jpx:0.82;font-size:12px;font-weight:bold;color:#eef2f4;max-width:104px;overflow:hidden"><svg width="37.4" height="9.8" style="display:inline-block;vertical-align:-1.0px;overflow:visible;position:static"><path transform="translate(0.49,0) scale(0.807,0.984)" d="M2,2 L8,2 L8,9 L2,9" fill="none" stroke="#eef2f4" stroke-width="2.02" stroke-linecap="round" stroke-linejoin="round"/><path transform="translate(9.84,0) scale(0.807,0.984)" d="M2,1 L2,9 L9,9 M2,5.5 L8,3.5 M9.2,0.2 a0.9,0.9 0 1 0 0.01,0" fill="none" stroke="#eef2f4" stroke-width="2.02" stroke-linecap="round" stroke-linejoin="round"/><path transform="translate(19.19,0) scale(0.807,0.984)" d="M1,5 L9,5" fill="none" stroke="#eef2f4" stroke-width="2.02" stroke-linecap="round" stroke-linejoin="round"/><path transform="translate(28.54,0) scale(0.807,0.984)" d="M2,1 L8,1 M0.5,4 L9.5,4 M4,4 Q3.8,7.5 1,9.8 M6,4 L6,9 L9.5,9 L9.5,7.5" fill="none" stroke="#eef2f4" stroke-width="2.02" stroke-linecap="round" stroke-linejoin="round"/></svg>_lazysnake</div>
<div style="left:372px;top:148px;width:16px;height:16px;border-radius:50%;background:radial-gradient(circle at 50% 40%,#e4e8ea,#9ca4aa);border:1px solid #333"></div>
<div style="left:376.5px;top:152.5px;width:7.0px;height:7.0px;border-radius:50%;background:#222"></div>
<div style="left:392px;top:148px;width:15px;height:15px;border-radius:50%;background:radial-gradient(circle at 50% 40%,#dde2e5,#9aa3a9);border:1px solid #333"></div>
<div style="left:396px;top:152px;width:6px;height:7px;background:#222;clip-path:polygon(0 30%,40% 30%,100% 0,100% 100%,40% 70%,0 70%)"></div>
<div style="left:415px;top:149.5px;width:22px;height:12.5px;"><div class="cb" style="left:0;top:0;width:22px;height:12.5px;font-size:11px;line-height:11px">R</div></div>
<div style="left:439px;top:149.5px;width:21px;height:12.5px;"><div class="cb" style="left:0;top:0;width:21px;height:12.5px;font-size:11px;line-height:11px">W</div></div>
<div style="left:271px;top:167px;width:16px;height:15px;border-radius:50%;background:radial-gradient(circle at 50% 40%,#e0e4e6,#9ea6ac);border:1px solid #2a3238"><span style="position:absolute;left:3px;top:-2px;font-size:13px;font-style:italic;color:#222">e</span></div>
<div style="left:290px;top:168px;width:21px;height:13px;background:linear-gradient(180deg,#c2c9ce,#959fa5);border:1px solid #2a353b;border-radius:2px;"></div>
<div style="left:316px;top:168px;width:21px;height:13px;background:linear-gradient(180deg,#c2c9ce,#959fa5);border:1px solid #2a353b;border-radius:2px;"></div>
<div style="left:338px;top:168px;width:21px;height:13px;background:linear-gradient(180deg,#c2c9ce,#959fa5);border:1px solid #2a353b;border-radius:2px;background:linear-gradient(180deg,#48e858,#22c032);"></div>
<div style="left:360px;top:168px;width:21px;height:13px;background:linear-gradient(180deg,#c2c9ce,#959fa5);border:1px solid #2a353b;border-radius:2px;"></div>
<div style="left:391px;top:168px;width:21px;height:13px;background:linear-gradient(180deg,#c2c9ce,#959fa5);border:1px solid #2a353b;border-radius:2px;"></div>
<div style="left:417px;top:168px;width:21px;height:13px;background:linear-gradient(180deg,#c2c9ce,#959fa5);border:1px solid #2a353b;border-radius:2px;"></div>
<div style="left:442px;top:168px;width:22px;height:13px;background:linear-gradient(180deg,#c2c9ce,#959fa5);border:1px solid #2a353b;border-radius:2px;"></div>
<svg style="position:absolute;left:290.5px;top:168.5px" width="175" height="13" fill="none" stroke="#2a3238" stroke-width="1">
<polyline points="4.5,3 4.5,9.5 16.5,9.5 16.5,5.5"/><line x1="7" y1="5" x2="11" y2="5"/><line x1="7" y1="7" x2="16" y2="7"/>
<line x1="30" y1="6.5" x2="43" y2="6.5"/><rect x="34.5" y="4.5" width="4" height="4" fill="#ddd"/>
<polygon points="58.5,2 63,6.5 58.5,11 54,6.5"/><line x1="58.5" y1="1" x2="58.5" y2="12"/>
<rect x="76.5" y="3.5" width="6" height="4"/><line x1="73" y1="8.5" x2="87" y2="8.5"/>
<polygon points="106,11 105,10 112.5,2.5 113.5,3.5" fill="none" stroke-width="1.1"/><circle cx="114" cy="2.5" r="1.6" fill="none" stroke-width="1"/>
<path d="M130.5,7 V5 A3,3 0 0 1 136.5,5 V6"/><rect x="134.5" y="6.5" width="8" height="4.5"/>
<rect x="157.5" y="3.5" width="14" height="6"/><line x1="162" y1="3.5" x2="162" y2="9.5"/><line x1="167" y1="3.5" x2="167" y2="9.5"/>
</svg>
<div style="left:271px;top:187px;width:150px;height:13px;background:linear-gradient(180deg,#bcc4c9,#9ea8ae);border:1px solid #27323a;border-radius:2px"></div>
<svg style="position:absolute;left:273px;top:189px" width="10" height="10" stroke="#222" stroke-width="1" fill="none"><polyline points="7.5,0.5 1.5,0.5 1.5,8.5 7.5,8.5"/><line x1="3" y1="2.5" x2="8" y2="2.5"/><line x1="3" y1="4.5" x2="6" y2="4.5"/><line x1="3" y1="6.5" x2="8" y2="6.5"/></svg>
<div style="left:286px;top:187px;white-space:nowrap;font-size:11.5px;font-weight:bold;color:#111;line-height:13px">Bells</div>
<div style="left:185px;top:227px;width:28px;height:122px;background:#3ea8ea"></div>
<div style="left:187px;top:231px;width:10px;height:11px;background:#eaf4fa"></div>
<div style="left:189.0px;top:231px;width:1.2px;height:7px;background:#3a6a8a"></div>
<div style="left:191.8px;top:231px;width:1.2px;height:7px;background:#3a6a8a"></div>
<div style="left:194.6px;top:231px;width:1.2px;height:7px;background:#3a6a8a"></div>
<div style="left:201px;top:231px;white-space:nowrap;font-size:10px;color:#1b3a50">3</div>
<div style="left:213px;top:227px;width:257px;height:122px;background:#5b6a72"></div>
<div style="left:185px;top:348px;width:298px;height:1px;background:#3e4c54"></div>
<div style="left:470px;top:227px;width:12px;height:121px;background:#000"></div>
<div style="left:221px;top:231.5px;width:21px;height:12.5px;"><div class="cb" style="left:0;top:0;width:21px;height:12.5px;font-size:11px;line-height:11px">m</div></div>
<div style="left:244px;top:231.5px;width:21px;height:12.5px;"><div class="cb" style="left:0;top:0;width:21px;height:12.5px;font-size:11px;line-height:11px">S</div></div>
<div style="left:270px;top:230px;white-space:nowrap;--jpx:0.82;font-size:12px;font-weight:bold;color:#eef2f4;max-width:104px;overflow:hidden">lazysnake 03</div>
<div style="left:372px;top:230px;width:16px;height:16px;border-radius:50%;background:radial-gradient(circle at 50% 40%,#e4e8ea,#9ca4aa);border:1px solid #333"></div>
<div style="left:376.5px;top:234.5px;width:7.0px;height:7.0px;border-radius:50%;background:#222"></div>
<div style="left:392px;top:230px;width:15px;height:15px;border-radius:50%;background:radial-gradient(circle at 50% 40%,#dde2e5,#9aa3a9);border:1px solid #333"></div>
<div style="left:396px;top:234px;width:6px;height:7px;background:#222;clip-path:polygon(0 30%,40% 30%,100% 0,100% 100%,40% 70%,0 70%)"></div>
<div style="left:415px;top:231.5px;width:22px;height:12.5px;"><div class="cb" style="left:0;top:0;width:22px;height:12.5px;font-size:11px;line-height:11px">R</div></div>
<div style="left:439px;top:231.5px;width:21px;height:12.5px;"><div class="cb" style="left:0;top:0;width:21px;height:12.5px;font-size:11px;line-height:11px">W</div></div>
<div style="left:271px;top:249px;width:16px;height:15px;border-radius:50%;background:radial-gradient(circle at 50% 40%,#e0e4e6,#9ea6ac);border:1px solid #2a3238"><span style="position:absolute;left:3px;top:-2px;font-size:13px;font-style:italic;color:#222">e</span></div>
<div style="left:290px;top:250px;width:21px;height:13px;background:linear-gradient(180deg,#c2c9ce,#959fa5);border:1px solid #2a353b;border-radius:2px;"></div>
<div style="left:316px;top:250px;width:21px;height:13px;background:linear-gradient(180deg,#c2c9ce,#959fa5);border:1px solid #2a353b;border-radius:2px;"></div>
<div style="left:338px;top:250px;width:21px;height:13px;background:linear-gradient(180deg,#c2c9ce,#959fa5);border:1px solid #2a353b;border-radius:2px;"></div>
<div style="left:360px;top:250px;width:21px;height:13px;background:linear-gradient(180deg,#c2c9ce,#959fa5);border:1px solid #2a353b;border-radius:2px;"></div>
<div style="left:391px;top:250px;width:21px;height:13px;background:linear-gradient(180deg,#c2c9ce,#959fa5);border:1px solid #2a353b;border-radius:2px;"></div>
<div style="left:417px;top:250px;width:21px;height:13px;background:linear-gradient(180deg,#c2c9ce,#959fa5);border:1px solid #2a353b;border-radius:2px;"></div>
<div style="left:442px;top:250px;width:22px;height:13px;background:linear-gradient(180deg,#c2c9ce,#959fa5);border:1px solid #2a353b;border-radius:2px;"></div>
<svg style="position:absolute;left:290.5px;top:250.5px" width="175" height="13" fill="none" stroke="#2a3238" stroke-width="1">
<polyline points="4.5,3 4.5,9.5 16.5,9.5 16.5,5.5"/><line x1="7" y1="5" x2="11" y2="5"/><line x1="7" y1="7" x2="16" y2="7"/>
<line x1="30" y1="6.5" x2="43" y2="6.5"/><rect x="34.5" y="4.5" width="4" height="4" fill="#ddd"/>
<polygon points="58.5,2 63,6.5 58.5,11 54,6.5"/><line x1="58.5" y1="1" x2="58.5" y2="12"/>
<rect x="76.5" y="3.5" width="6" height="4"/><line x1="73" y1="8.5" x2="87" y2="8.5"/>
<polygon points="106,11 105,10 112.5,2.5 113.5,3.5" fill="none" stroke-width="1.1"/><circle cx="114" cy="2.5" r="1.6" fill="none" stroke-width="1"/>
<path d="M130.5,7 V5 A3,3 0 0 1 136.5,5 V6"/><rect x="134.5" y="6.5" width="8" height="4.5"/>
<rect x="157.5" y="3.5" width="14" height="6"/><line x1="162" y1="3.5" x2="162" y2="9.5"/><line x1="167" y1="3.5" x2="167" y2="9.5"/>
</svg>
<div style="left:271px;top:269px;width:150px;height:13px;background:linear-gradient(180deg,#bcc4c9,#9ea8ae);border:1px solid #27323a;border-radius:2px"></div>
<svg style="position:absolute;left:273px;top:271px" width="10" height="10" stroke="#222" stroke-width="1" fill="none"><polyline points="7.5,0.5 1.5,0.5 1.5,8.5 7.5,8.5"/><line x1="3" y1="2.5" x2="8" y2="2.5"/><line x1="3" y1="4.5" x2="6" y2="4.5"/><line x1="3" y1="6.5" x2="8" y2="6.5"/></svg>
<div style="left:286px;top:269px;white-space:nowrap;font-size:11.5px;font-weight:bold;color:#111;line-height:13px">Aerona</div>
<div style="left:185px;top:349px;width:28px;height:102px;background:#3ea8ea"></div>
<div style="left:187px;top:353px;width:10px;height:11px;background:#eaf4fa"></div>
<div style="left:189.0px;top:353px;width:1.2px;height:7px;background:#3a6a8a"></div>
<div style="left:191.8px;top:353px;width:1.2px;height:7px;background:#3a6a8a"></div>
<div style="left:194.6px;top:353px;width:1.2px;height:7px;background:#3a6a8a"></div>
<div style="left:201px;top:353px;white-space:nowrap;font-size:10px;color:#1b3a50">4</div>
<div style="left:213px;top:349px;width:257px;height:102px;background:#5b6a72"></div>
<div style="left:185px;top:450px;width:298px;height:1px;background:#3e4c54"></div>
<div style="left:470px;top:349px;width:12px;height:101px;background:#000"></div>
<div style="left:221px;top:353.5px;width:21px;height:12.5px;"><div class="cb" style="left:0;top:0;width:21px;height:12.5px;font-size:11px;line-height:11px">m</div></div>
<div style="left:244px;top:353.5px;width:21px;height:12.5px;"><div class="cb" style="left:0;top:0;width:21px;height:12.5px;font-size:11px;line-height:11px">S</div></div>
<div style="left:270px;top:352px;white-space:nowrap;--jpx:0.82;font-size:12px;font-weight:bold;color:#eef2f4;max-width:104px;overflow:hidden">DrumKit 1 04</div>
<div style="left:372px;top:352px;width:16px;height:16px;border-radius:50%;background:radial-gradient(circle at 50% 40%,#e4e8ea,#9ca4aa);border:1px solid #333"></div>
<div style="left:376.5px;top:356.5px;width:7.0px;height:7.0px;border-radius:50%;background:#222"></div>
<div style="left:392px;top:352px;width:15px;height:15px;border-radius:50%;background:radial-gradient(circle at 50% 40%,#dde2e5,#9aa3a9);border:1px solid #333"></div>
<div style="left:396px;top:356px;width:6px;height:7px;background:#222;clip-path:polygon(0 30%,40% 30%,100% 0,100% 100%,40% 70%,0 70%)"></div>
<div style="left:415px;top:353.5px;width:22px;height:12.5px;"><div class="cb" style="left:0;top:0;width:22px;height:12.5px;font-size:11px;line-height:11px">R</div></div>
<div style="left:439px;top:353.5px;width:21px;height:12.5px;"><div class="cb" style="left:0;top:0;width:21px;height:12.5px;font-size:11px;line-height:11px">W</div></div>
<div style="left:271px;top:371px;width:16px;height:15px;border-radius:50%;background:radial-gradient(circle at 50% 40%,#e0e4e6,#9ea6ac);border:1px solid #2a3238"><span style="position:absolute;left:3px;top:-2px;font-size:13px;font-style:italic;color:#222">e</span></div>
<div style="left:290px;top:372px;width:21px;height:13px;background:linear-gradient(180deg,#c2c9ce,#959fa5);border:1px solid #2a353b;border-radius:2px;"></div>
<div style="left:316px;top:372px;width:21px;height:13px;background:linear-gradient(180deg,#c2c9ce,#959fa5);border:1px solid #2a353b;border-radius:2px;"></div>
<div style="left:338px;top:372px;width:21px;height:13px;background:linear-gradient(180deg,#c2c9ce,#959fa5);border:1px solid #2a353b;border-radius:2px;"></div>
<div style="left:360px;top:372px;width:21px;height:13px;background:linear-gradient(180deg,#c2c9ce,#959fa5);border:1px solid #2a353b;border-radius:2px;"></div>
<div style="left:391px;top:372px;width:21px;height:13px;background:linear-gradient(180deg,#c2c9ce,#959fa5);border:1px solid #2a353b;border-radius:2px;"></div>
<div style="left:417px;top:372px;width:21px;height:13px;background:linear-gradient(180deg,#c2c9ce,#959fa5);border:1px solid #2a353b;border-radius:2px;"></div>
<div style="left:442px;top:372px;width:22px;height:13px;background:linear-gradient(180deg,#c2c9ce,#959fa5);border:1px solid #2a353b;border-radius:2px;"></div>
<svg style="position:absolute;left:290.5px;top:372.5px" width="175" height="13" fill="none" stroke="#2a3238" stroke-width="1">
<polyline points="4.5,3 4.5,9.5 16.5,9.5 16.5,5.5"/><line x1="7" y1="5" x2="11" y2="5"/><line x1="7" y1="7" x2="16" y2="7"/>
<line x1="30" y1="6.5" x2="43" y2="6.5"/><rect x="34.5" y="4.5" width="4" height="4" fill="#ddd"/>
<polygon points="58.5,2 63,6.5 58.5,11 54,6.5"/><line x1="58.5" y1="1" x2="58.5" y2="12"/>
<rect x="76.5" y="3.5" width="6" height="4"/><line x1="73" y1="8.5" x2="87" y2="8.5"/>
<polygon points="106,11 105,10 112.5,2.5 113.5,3.5" fill="none" stroke-width="1.1"/><circle cx="114" cy="2.5" r="1.6" fill="none" stroke-width="1"/>
<path d="M130.5,7 V5 A3,3 0 0 1 136.5,5 V6"/><rect x="134.5" y="6.5" width="8" height="4.5"/>
<rect x="157.5" y="3.5" width="14" height="6"/><line x1="162" y1="3.5" x2="162" y2="9.5"/><line x1="167" y1="3.5" x2="167" y2="9.5"/>
</svg>
<div style="left:271px;top:391px;width:150px;height:13px;background:linear-gradient(180deg,#bcc4c9,#9ea8ae);border:1px solid #27323a;border-radius:2px"></div>
<svg style="position:absolute;left:273px;top:393px" width="10" height="10" stroke="#222" stroke-width="1" fill="none"><polyline points="7.5,0.5 1.5,0.5 1.5,8.5 7.5,8.5"/><line x1="3" y1="2.5" x2="8" y2="2.5"/><line x1="3" y1="4.5" x2="6" y2="4.5"/><line x1="3" y1="6.5" x2="8" y2="6.5"/></svg>
<div style="left:185px;top:451px;width:28px;height:102px;background:#3ea8ea"></div>
<div style="left:187px;top:455px;width:10px;height:11px;background:#eaf4fa"></div>
<div style="left:189.0px;top:455px;width:1.2px;height:7px;background:#3a6a8a"></div>
<div style="left:191.8px;top:455px;width:1.2px;height:7px;background:#3a6a8a"></div>
<div style="left:194.6px;top:455px;width:1.2px;height:7px;background:#3a6a8a"></div>
<div style="left:201px;top:455px;white-space:nowrap;font-size:10px;color:#1b3a50">5</div>
<div style="left:213px;top:451px;width:257px;height:102px;background:#5b6a72"></div>
<div style="left:185px;top:552px;width:298px;height:1px;background:#3e4c54"></div>
<div style="left:470px;top:451px;width:12px;height:101px;background:#000"></div>
<div style="left:221px;top:455.5px;width:21px;height:12.5px;"><div class="cb" style="left:0;top:0;width:21px;height:12.5px;font-size:11px;line-height:11px">m</div></div>
<div style="left:244px;top:455.5px;width:21px;height:12.5px;"><div class="cb" style="left:0;top:0;width:21px;height:12.5px;font-size:11px;line-height:11px">S</div></div>
<div style="left:270px;top:454px;white-space:nowrap;--jpx:0.82;font-size:12px;font-weight:bold;color:#eef2f4;max-width:104px;overflow:hidden"><svg width="37.4" height="9.8" style="display:inline-block;vertical-align:-1.0px;overflow:visible;position:static"><path transform="translate(0.49,0) scale(0.807,0.984)" d="M2,2 L8,2 L8,9 L2,9" fill="none" stroke="#eef2f4" stroke-width="2.02" stroke-linecap="round" stroke-linejoin="round"/><path transform="translate(9.84,0) scale(0.807,0.984)" d="M2,1 L2,9 L9,9 M2,5.5 L8,3.5 M9.2,0.2 a0.9,0.9 0 1 0 0.01,0" fill="none" stroke="#eef2f4" stroke-width="2.02" stroke-linecap="round" stroke-linejoin="round"/><path transform="translate(19.19,0) scale(0.807,0.984)" d="M1,5 L9,5" fill="none" stroke="#eef2f4" stroke-width="2.02" stroke-linecap="round" stroke-linejoin="round"/><path transform="translate(28.54,0) scale(0.807,0.984)" d="M2,1 L8,1 M0.5,4 L9.5,4 M4,4 Q3.8,7.5 1,9.8 M6,4 L6,9 L9.5,9 L9.5,7.5" fill="none" stroke="#eef2f4" stroke-width="2.02" stroke-linecap="round" stroke-linejoin="round"/></svg>_DrumKit 1</div>
<div style="left:372px;top:454px;width:16px;height:16px;border-radius:50%;background:radial-gradient(circle at 50% 40%,#e4e8ea,#9ca4aa);border:1px solid #333"></div>
<div style="left:376.5px;top:458.5px;width:7.0px;height:7.0px;border-radius:50%;background:#222"></div>
<div style="left:392px;top:454px;width:15px;height:15px;border-radius:50%;background:radial-gradient(circle at 50% 40%,#dde2e5,#9aa3a9);border:1px solid #333"></div>
<div style="left:396px;top:458px;width:6px;height:7px;background:#222;clip-path:polygon(0 30%,40% 30%,100% 0,100% 100%,40% 70%,0 70%)"></div>
<div style="left:415px;top:455.5px;width:22px;height:12.5px;"><div class="cb" style="left:0;top:0;width:22px;height:12.5px;font-size:11px;line-height:11px">R</div></div>
<div style="left:439px;top:455.5px;width:21px;height:12.5px;"><div class="cb" style="left:0;top:0;width:21px;height:12.5px;font-size:11px;line-height:11px">W</div></div>
<div style="left:271px;top:473px;width:16px;height:15px;border-radius:50%;background:radial-gradient(circle at 50% 40%,#e0e4e6,#9ea6ac);border:1px solid #2a3238"><span style="position:absolute;left:3px;top:-2px;font-size:13px;font-style:italic;color:#222">e</span></div>
<div style="left:290px;top:474px;width:21px;height:13px;background:linear-gradient(180deg,#c2c9ce,#959fa5);border:1px solid #2a353b;border-radius:2px;"></div>
<div style="left:316px;top:474px;width:21px;height:13px;background:linear-gradient(180deg,#c2c9ce,#959fa5);border:1px solid #2a353b;border-radius:2px;"></div>
<div style="left:338px;top:474px;width:21px;height:13px;background:linear-gradient(180deg,#c2c9ce,#959fa5);border:1px solid #2a353b;border-radius:2px;"></div>
<div style="left:360px;top:474px;width:21px;height:13px;background:linear-gradient(180deg,#c2c9ce,#959fa5);border:1px solid #2a353b;border-radius:2px;"></div>
<div style="left:391px;top:474px;width:21px;height:13px;background:linear-gradient(180deg,#c2c9ce,#959fa5);border:1px solid #2a353b;border-radius:2px;"></div>
<div style="left:417px;top:474px;width:21px;height:13px;background:linear-gradient(180deg,#c2c9ce,#959fa5);border:1px solid #2a353b;border-radius:2px;"></div>
<div style="left:442px;top:474px;width:22px;height:13px;background:linear-gradient(180deg,#c2c9ce,#959fa5);border:1px solid #2a353b;border-radius:2px;"></div>
<svg style="position:absolute;left:290.5px;top:474.5px" width="175" height="13" fill="none" stroke="#2a3238" stroke-width="1">
<polyline points="4.5,3 4.5,9.5 16.5,9.5 16.5,5.5"/><line x1="7" y1="5" x2="11" y2="5"/><line x1="7" y1="7" x2="16" y2="7"/>
<line x1="30" y1="6.5" x2="43" y2="6.5"/><rect x="34.5" y="4.5" width="4" height="4" fill="#ddd"/>
<polygon points="58.5,2 63,6.5 58.5,11 54,6.5"/><line x1="58.5" y1="1" x2="58.5" y2="12"/>
<rect x="76.5" y="3.5" width="6" height="4"/><line x1="73" y1="8.5" x2="87" y2="8.5"/>
<polygon points="106,11 105,10 112.5,2.5 113.5,3.5" fill="none" stroke-width="1.1"/><circle cx="114" cy="2.5" r="1.6" fill="none" stroke-width="1"/>
<path d="M130.5,7 V5 A3,3 0 0 1 136.5,5 V6"/><rect x="134.5" y="6.5" width="8" height="4.5"/>
<rect x="157.5" y="3.5" width="14" height="6"/><line x1="162" y1="3.5" x2="162" y2="9.5"/><line x1="167" y1="3.5" x2="167" y2="9.5"/>
</svg>
<div style="left:271px;top:493px;width:150px;height:13px;background:linear-gradient(180deg,#bcc4c9,#9ea8ae);border:1px solid #27323a;border-radius:2px"></div>
<svg style="position:absolute;left:273px;top:495px" width="10" height="10" stroke="#222" stroke-width="1" fill="none"><polyline points="7.5,0.5 1.5,0.5 1.5,8.5 7.5,8.5"/><line x1="3" y1="2.5" x2="8" y2="2.5"/><line x1="3" y1="4.5" x2="6" y2="4.5"/><line x1="3" y1="6.5" x2="8" y2="6.5"/></svg>
<div style="left:185px;top:553px;width:28px;height:102px;background:#5e78e4"></div>
<div style="left:187px;top:557px;width:10px;height:11px;background:#eaf4fa"></div>
<div style="left:189.0px;top:557px;width:1.2px;height:7px;background:#3a6a8a"></div>
<div style="left:191.8px;top:557px;width:1.2px;height:7px;background:#3a6a8a"></div>
<div style="left:194.6px;top:557px;width:1.2px;height:7px;background:#3a6a8a"></div>
<div style="left:201px;top:557px;white-space:nowrap;font-size:10px;color:#1b3a50">6</div>
<div style="left:213px;top:553px;width:257px;height:102px;background:#5b6a72"></div>
<div style="left:185px;top:654px;width:298px;height:1px;background:#3e4c54"></div>
<div style="left:470px;top:553px;width:12px;height:101px;background:#000"></div>
<div style="left:221px;top:557.5px;width:21px;height:12.5px;"><div class="cb" style="left:0;top:0;width:21px;height:12.5px;font-size:11px;line-height:11px">m</div></div>
<div style="left:244px;top:557.5px;width:21px;height:12.5px;"><div class="cb" style="left:0;top:0;width:21px;height:12.5px;font-size:11px;line-height:11px">S</div></div>
<div style="left:270px;top:556px;white-space:nowrap;--jpx:0.82;font-size:12px;font-weight:bold;color:#eef2f4;max-width:104px;overflow:hidden"><svg width="28.0" height="9.8" style="display:inline-block;vertical-align:-1.0px;overflow:visible;position:static"><path transform="translate(0.49,0) scale(0.807,0.984)" d="M1,6.5 L4,2.8 L9,8.5 M7.8,0.2 L8.5,1.6 M9.3,0.2 L10,1.6" fill="none" stroke="#eef2f4" stroke-width="2.02" stroke-linecap="round" stroke-linejoin="round"/><path transform="translate(9.84,0) scale(0.807,0.984)" d="M1,5 L9,5" fill="none" stroke="#eef2f4" stroke-width="2.02" stroke-linecap="round" stroke-linejoin="round"/><path transform="translate(19.19,0) scale(0.807,0.984)" d="M2,1.5 L8,1.5 M8,1.5 Q6,6.5 1.5,9.5 M5.2,5.8 L9,9.3" fill="none" stroke="#eef2f4" stroke-width="2.02" stroke-linecap="round" stroke-linejoin="round"/></svg></div>
<div style="left:372px;top:556px;width:16px;height:16px;border-radius:50%;background:radial-gradient(circle at 50% 40%,#e4e8ea,#9ca4aa);border:1px solid #333"></div>
<div style="left:376.5px;top:560.5px;width:7.0px;height:7.0px;border-radius:50%;background:#222"></div>
<div style="left:392px;top:556px;width:15px;height:15px;border-radius:50%;background:radial-gradient(circle at 50% 40%,#dde2e5,#9aa3a9);border:1px solid #333"></div>
<div style="left:396px;top:560px;width:6px;height:7px;background:#222;clip-path:polygon(0 30%,40% 30%,100% 0,100% 100%,40% 70%,0 70%)"></div>
<div style="left:415px;top:557.5px;width:22px;height:12.5px;"><div class="cb" style="left:0;top:0;width:22px;height:12.5px;font-size:11px;line-height:11px">R</div></div>
<div style="left:439px;top:557.5px;width:21px;height:12.5px;"><div class="cb" style="left:0;top:0;width:21px;height:12.5px;font-size:11px;line-height:11px">W</div></div>
<div style="left:271px;top:575px;width:16px;height:15px;border-radius:50%;background:radial-gradient(circle at 50% 40%,#e0e4e6,#9ea6ac);border:1px solid #2a3238"><span style="position:absolute;left:3px;top:-2px;font-size:13px;font-style:italic;color:#222">e</span></div>
<div style="left:290px;top:576px;width:21px;height:13px;background:linear-gradient(180deg,#c2c9ce,#959fa5);border:1px solid #2a353b;border-radius:2px;"></div>
<div style="left:316px;top:576px;width:21px;height:13px;background:linear-gradient(180deg,#c2c9ce,#959fa5);border:1px solid #2a353b;border-radius:2px;"></div>
<div style="left:338px;top:576px;width:21px;height:13px;background:linear-gradient(180deg,#c2c9ce,#959fa5);border:1px solid #2a353b;border-radius:2px;"></div>
<div style="left:360px;top:576px;width:21px;height:13px;background:linear-gradient(180deg,#c2c9ce,#959fa5);border:1px solid #2a353b;border-radius:2px;"></div>
<div style="left:391px;top:576px;width:21px;height:13px;background:linear-gradient(180deg,#c2c9ce,#959fa5);border:1px solid #2a353b;border-radius:2px;"></div>
<div style="left:417px;top:576px;width:21px;height:13px;background:linear-gradient(180deg,#c2c9ce,#959fa5);border:1px solid #2a353b;border-radius:2px;"></div>
<div style="left:442px;top:576px;width:22px;height:13px;background:linear-gradient(180deg,#c2c9ce,#959fa5);border:1px solid #2a353b;border-radius:2px;"></div>
<svg style="position:absolute;left:290.5px;top:576.5px" width="175" height="13" fill="none" stroke="#2a3238" stroke-width="1">
<polyline points="4.5,3 4.5,9.5 16.5,9.5 16.5,5.5"/><line x1="7" y1="5" x2="11" y2="5"/><line x1="7" y1="7" x2="16" y2="7"/>
<line x1="30" y1="6.5" x2="43" y2="6.5"/><rect x="34.5" y="4.5" width="4" height="4" fill="#ddd"/>
<polygon points="58.5,2 63,6.5 58.5,11 54,6.5"/><line x1="58.5" y1="1" x2="58.5" y2="12"/>
<rect x="76.5" y="3.5" width="6" height="4"/><line x1="73" y1="8.5" x2="87" y2="8.5"/>
<polygon points="106,11 105,10 112.5,2.5 113.5,3.5" fill="none" stroke-width="1.1"/><circle cx="114" cy="2.5" r="1.6" fill="none" stroke-width="1"/>
<path d="M130.5,7 V5 A3,3 0 0 1 136.5,5 V6"/><rect x="134.5" y="6.5" width="8" height="4.5"/>
<rect x="157.5" y="3.5" width="14" height="6"/><line x1="162" y1="3.5" x2="162" y2="9.5"/><line x1="167" y1="3.5" x2="167" y2="9.5"/>
</svg>
<div style="left:271px;top:595px;width:150px;height:13px;background:linear-gradient(180deg,#bcc4c9,#9ea8ae);border:1px solid #27323a;border-radius:2px"></div>
<svg style="position:absolute;left:273px;top:597px" width="10" height="10" stroke="#222" stroke-width="1" fill="none"><polyline points="7.5,0.5 1.5,0.5 1.5,8.5 7.5,8.5"/><line x1="3" y1="2.5" x2="8" y2="2.5"/><line x1="3" y1="4.5" x2="6" y2="4.5"/><line x1="3" y1="6.5" x2="8" y2="6.5"/></svg>
<div style="left:286px;top:595px;white-space:nowrap;font-size:11.5px;font-weight:bold;color:#111;line-height:13px">Ebass</div>
<div style="left:185px;top:655px;width:28px;height:102px;background:#7a6aea"></div>
<div style="left:187px;top:659px;width:10px;height:11px;background:#eaf4fa"></div>
<div style="left:189.0px;top:659px;width:1.2px;height:7px;background:#3a6a8a"></div>
<div style="left:191.8px;top:659px;width:1.2px;height:7px;background:#3a6a8a"></div>
<div style="left:194.6px;top:659px;width:1.2px;height:7px;background:#3a6a8a"></div>
<div style="left:201px;top:659px;white-space:nowrap;font-size:10px;color:#1b3a50">7</div>
<div style="left:213px;top:655px;width:257px;height:102px;background:#c8ced3"></div>
<div style="left:185px;top:756px;width:298px;height:1px;background:#3e4c54"></div>
<div style="left:470px;top:655px;width:12px;height:101px;background:#000"></div>
<div style="left:221px;top:659.5px;width:21px;height:12.5px;"><div class="cb" style="left:0;top:0;width:21px;height:12.5px;font-size:11px;line-height:11px">m</div></div>
<div style="left:244px;top:659.5px;width:21px;height:12.5px;"><div class="cb" style="left:0;top:0;width:21px;height:12.5px;font-size:11px;line-height:11px">S</div></div>
<div style="left:270px;top:658px;white-space:nowrap;--jpx:0.82;font-size:12px;font-weight:bold;color:#111;max-width:104px;overflow:hidden">lazysnake 07</div>
<div style="left:372px;top:658px;width:16px;height:16px;border-radius:50%;background:radial-gradient(circle at 50% 40%,#f07070,#c83030);border:1px solid #333"></div>
<div style="left:376.5px;top:662.5px;width:7.0px;height:7.0px;border-radius:50%;background:#3a1010"></div>
<div style="left:392px;top:658px;width:15px;height:15px;border-radius:50%;background:radial-gradient(circle at 50% 40%,#dde2e5,#9aa3a9);border:1px solid #333"></div>
<div style="left:396px;top:662px;width:6px;height:7px;background:#222;clip-path:polygon(0 30%,40% 30%,100% 0,100% 100%,40% 70%,0 70%)"></div>
<div style="left:415px;top:659.5px;width:22px;height:12.5px;"><div class="cb" style="left:0;top:0;width:22px;height:12.5px;font-size:11px;line-height:11px">R</div></div>
<div style="left:439px;top:659.5px;width:21px;height:12.5px;"><div class="cb" style="left:0;top:0;width:21px;height:12.5px;font-size:11px;line-height:11px">W</div></div>
<div style="left:271px;top:677px;width:16px;height:15px;border-radius:50%;background:radial-gradient(circle at 50% 40%,#e0e4e6,#9ea6ac);border:1px solid #2a3238"><span style="position:absolute;left:3px;top:-2px;font-size:13px;font-style:italic;color:#222">e</span></div>
<div style="left:290px;top:678px;width:21px;height:13px;background:linear-gradient(180deg,#c2c9ce,#959fa5);border:1px solid #2a353b;border-radius:2px;"></div>
<div style="left:316px;top:678px;width:21px;height:13px;background:linear-gradient(180deg,#c2c9ce,#959fa5);border:1px solid #2a353b;border-radius:2px;"></div>
<div style="left:338px;top:678px;width:21px;height:13px;background:linear-gradient(180deg,#c2c9ce,#959fa5);border:1px solid #2a353b;border-radius:2px;"></div>
<div style="left:360px;top:678px;width:21px;height:13px;background:linear-gradient(180deg,#c2c9ce,#959fa5);border:1px solid #2a353b;border-radius:2px;"></div>
<div style="left:391px;top:678px;width:21px;height:13px;background:linear-gradient(180deg,#c2c9ce,#959fa5);border:1px solid #2a353b;border-radius:2px;"></div>
<div style="left:417px;top:678px;width:21px;height:13px;background:linear-gradient(180deg,#c2c9ce,#959fa5);border:1px solid #2a353b;border-radius:2px;"></div>
<div style="left:442px;top:678px;width:22px;height:13px;background:linear-gradient(180deg,#c2c9ce,#959fa5);border:1px solid #2a353b;border-radius:2px;"></div>
<svg style="position:absolute;left:290.5px;top:678.5px" width="175" height="13" fill="none" stroke="#2a3238" stroke-width="1">
<polyline points="4.5,3 4.5,9.5 16.5,9.5 16.5,5.5"/><line x1="7" y1="5" x2="11" y2="5"/><line x1="7" y1="7" x2="16" y2="7"/>
<line x1="30" y1="6.5" x2="43" y2="6.5"/><rect x="34.5" y="4.5" width="4" height="4" fill="#ddd"/>
<polygon points="58.5,2 63,6.5 58.5,11 54,6.5"/><line x1="58.5" y1="1" x2="58.5" y2="12"/>
<rect x="76.5" y="3.5" width="6" height="4"/><line x1="73" y1="8.5" x2="87" y2="8.5"/>
<polygon points="106,11 105,10 112.5,2.5 113.5,3.5" fill="none" stroke-width="1.1"/><circle cx="114" cy="2.5" r="1.6" fill="none" stroke-width="1"/>
<path d="M130.5,7 V5 A3,3 0 0 1 136.5,5 V6"/><rect x="134.5" y="6.5" width="8" height="4.5"/>
<rect x="157.5" y="3.5" width="14" height="6"/><line x1="162" y1="3.5" x2="162" y2="9.5"/><line x1="167" y1="3.5" x2="167" y2="9.5"/>
</svg>
<div style="left:271px;top:697px;width:150px;height:13px;background:linear-gradient(180deg,#bcc4c9,#9ea8ae);border:1px solid #27323a;border-radius:2px"></div>
<svg style="position:absolute;left:273px;top:699px" width="10" height="10" stroke="#222" stroke-width="1" fill="none"><polyline points="7.5,0.5 1.5,0.5 1.5,8.5 7.5,8.5"/><line x1="3" y1="2.5" x2="8" y2="2.5"/><line x1="3" y1="4.5" x2="6" y2="4.5"/><line x1="3" y1="6.5" x2="8" y2="6.5"/></svg>
<div style="left:286px;top:697px;white-space:nowrap;font-size:11.5px;font-weight:bold;color:#111;line-height:13px">Aerona</div>
<div style="left:185px;top:886px;width:298px;height:15px;background:#1c2a32"></div>
<div style="left:191px;top:894px;width:5px;height:1px;background:#ccd"></div>
<div style="left:469px;top:892px;width:8px;height:4px;background:#dde;clip-path:polygon(0 0,100% 0,50% 100%)"></div>
<div style="left:483px;top:37px;width:1177px;height:26px;background:#1b2a33"></div>
<div style="left:490.3px;top:38px;width:244.74px;height:25px;background:#4e7c92"></div>
<div style="left:490.3px;top:38px;width:10.0px;height:9px;background:#f4f8fa;clip-path:polygon(0 0,100% 0,0 100%)"></div>
<div style="left:725.04px;top:38px;width:10.0px;height:9px;background:#f4f8fa;clip-path:polygon(0 0,100% 0,100% 100%)"></div>
<div style="left:490.3px;top:38px;width:1.0px;height:9px;background:#c8d6de"></div>
<div style="left:491.3px;top:50px;white-space:nowrap;font-size:12px;font-weight:bold;color:#d4e2ea;line-height:12px">1</div>
<div style="left:551.48px;top:38px;width:1.0px;height:9px;background:#c8d6de"></div>
<div style="left:552.484px;top:50px;white-space:nowrap;font-size:12px;font-weight:bold;color:#d4e2ea;line-height:12px">5</div>
<div style="left:612.67px;top:38px;width:1.0px;height:9px;background:#c8d6de"></div>
<div style="left:613.668px;top:50px;white-space:nowrap;font-size:12px;font-weight:bold;color:#d4e2ea;line-height:12px">9</div>
<div style="left:673.85px;top:38px;width:1.0px;height:9px;background:#c8d6de"></div>
<div style="left:674.852px;top:50px;white-space:nowrap;font-size:12px;font-weight:bold;color:#d4e2ea;line-height:12px">13</div>
<div style="left:735.04px;top:38px;width:1.0px;height:9px;background:#c8d6de"></div>
<div style="left:736.0360000000001px;top:50px;white-space:nowrap;font-size:12px;font-weight:bold;color:#d4e2ea;line-height:12px">17</div>
<div style="left:796.22px;top:38px;width:1.0px;height:9px;background:#c8d6de"></div>
<div style="left:797.22px;top:50px;white-space:nowrap;font-size:12px;font-weight:bold;color:#d4e2ea;line-height:12px">21</div>
<div style="left:857.4px;top:38px;width:1.0px;height:9px;background:#c8d6de"></div>
<div style="left:858.404px;top:50px;white-space:nowrap;font-size:12px;font-weight:bold;color:#d4e2ea;line-height:12px">25</div>
<div style="left:918.59px;top:38px;width:1.0px;height:9px;background:#c8d6de"></div>
<div style="left:919.588px;top:50px;white-space:nowrap;font-size:12px;font-weight:bold;color:#d4e2ea;line-height:12px">29</div>
<div style="left:979.77px;top:38px;width:1.0px;height:9px;background:#c8d6de"></div>
<div style="left:980.7719999999999px;top:50px;white-space:nowrap;font-size:12px;font-weight:bold;color:#d4e2ea;line-height:12px">33</div>
<div style="left:1040.96px;top:38px;width:1.0px;height:9px;background:#c8d6de"></div>
<div style="left:1041.956px;top:50px;white-space:nowrap;font-size:12px;font-weight:bold;color:#d4e2ea;line-height:12px">37</div>
<div style="left:1102.14px;top:38px;width:1.0px;height:9px;background:#c8d6de"></div>
<div style="left:1103.1399999999999px;top:50px;white-space:nowrap;font-size:12px;font-weight:bold;color:#d4e2ea;line-height:12px">41</div>
<div style="left:1163.32px;top:38px;width:1.0px;height:9px;background:#c8d6de"></div>
<div style="left:1164.324px;top:50px;white-space:nowrap;font-size:12px;font-weight:bold;color:#d4e2ea;line-height:12px">45</div>
<div style="left:1224.51px;top:38px;width:1.0px;height:9px;background:#c8d6de"></div>
<div style="left:1225.508px;top:50px;white-space:nowrap;font-size:12px;font-weight:bold;color:#d4e2ea;line-height:12px">49</div>
<div style="left:1285.69px;top:38px;width:1.0px;height:9px;background:#c8d6de"></div>
<div style="left:1286.692px;top:50px;white-space:nowrap;font-size:12px;font-weight:bold;color:#d4e2ea;line-height:12px">53</div>
<div style="left:1346.88px;top:38px;width:1.0px;height:9px;background:#c8d6de"></div>
<div style="left:1347.876px;top:50px;white-space:nowrap;font-size:12px;font-weight:bold;color:#d4e2ea;line-height:12px">57</div>
<div style="left:1408.06px;top:38px;width:1.0px;height:9px;background:#c8d6de"></div>
<div style="left:1409.06px;top:50px;white-space:nowrap;font-size:12px;font-weight:bold;color:#d4e2ea;line-height:12px">61</div>
<div style="left:1469.24px;top:38px;width:1.0px;height:9px;background:#c8d6de"></div>
<div style="left:1470.244px;top:50px;white-space:nowrap;font-size:12px;font-weight:bold;color:#d4e2ea;line-height:12px">65</div>
<div style="left:1530.43px;top:38px;width:1.0px;height:9px;background:#c8d6de"></div>
<div style="left:1531.4279999999999px;top:50px;white-space:nowrap;font-size:12px;font-weight:bold;color:#d4e2ea;line-height:12px">69</div>
<div style="left:1591.61px;top:38px;width:1.0px;height:9px;background:#c8d6de"></div>
<div style="left:1592.6119999999999px;top:50px;white-space:nowrap;font-size:12px;font-weight:bold;color:#d4e2ea;line-height:12px">73</div>
<div style="left:1645px;top:44px;width:14px;height:13px;background:#5a6a74;border-radius:2px"><div style="left:3px;top:4px;width:8px;height:5px;background:#1a2830;clip-path:polygon(0 0,100% 0,50% 100%)"></div></div>
<div style="left:483px;top:63px;width:1162px;height:823px;background:#cdd5dc"></div>
<div style="left:490.3px;top:63px;width:1.0px;height:823px;background:#a9b4be"></div>
<div style="left:551.48px;top:63px;width:1.0px;height:823px;background:#a9b4be"></div>
<div style="left:612.67px;top:63px;width:1.0px;height:823px;background:#a9b4be"></div>
<div style="left:673.85px;top:63px;width:1.0px;height:823px;background:#a9b4be"></div>
<div style="left:735.04px;top:63px;width:1.0px;height:823px;background:#a9b4be"></div>
<div style="left:796.22px;top:63px;width:1.0px;height:823px;background:#a9b4be"></div>
<div style="left:857.4px;top:63px;width:1.0px;height:823px;background:#a9b4be"></div>
<div style="left:918.59px;top:63px;width:1.0px;height:823px;background:#a9b4be"></div>
<div style="left:979.77px;top:63px;width:1.0px;height:823px;background:#a9b4be"></div>
<div style="left:1040.96px;top:63px;width:1.0px;height:823px;background:#a9b4be"></div>
<div style="left:1102.14px;top:63px;width:1.0px;height:823px;background:#a9b4be"></div>
<div style="left:1163.32px;top:63px;width:1.0px;height:823px;background:#a9b4be"></div>
<div style="left:1224.51px;top:63px;width:1.0px;height:823px;background:#a9b4be"></div>
<div style="left:1285.69px;top:63px;width:1.0px;height:823px;background:#a9b4be"></div>
<div style="left:1346.88px;top:63px;width:1.0px;height:823px;background:#a9b4be"></div>
<div style="left:1408.06px;top:63px;width:1.0px;height:823px;background:#a9b4be"></div>
<div style="left:1469.24px;top:63px;width:1.0px;height:823px;background:#a9b4be"></div>
<div style="left:1530.43px;top:63px;width:1.0px;height:823px;background:#a9b4be"></div>
<div style="left:1591.61px;top:63px;width:1.0px;height:823px;background:#a9b4be"></div>
<div style="left:483px;top:144px;width:1162px;height:1px;background:#a9b4be"></div>
<div style="left:483px;top:226px;width:1162px;height:1px;background:#a9b4be"></div>
<div style="left:483px;top:348px;width:1162px;height:1px;background:#a9b4be"></div>
<div style="left:483px;top:450px;width:1162px;height:1px;background:#a9b4be"></div>
<div style="left:483px;top:552px;width:1162px;height:1px;background:#a9b4be"></div>
<div style="left:483px;top:654px;width:1162px;height:1px;background:#a9b4be"></div>
<div style="left:483px;top:756px;width:1162px;height:1px;background:#a9b4be"></div>
<div style="left:483px;top:63px;width:1px;height:823px;background:#9aa6b0"></div>
<div class="part" style="left:490.3px;top:64px;width:367.1px;height:79px;"><div class="n" style="left:0.0px;top:3.0px;width:15.0px;height:4.5px"></div><div class="n" style="left:21.0px;top:3.0px;width:24.5px;height:4.5px"></div><div class="n" style="left:15.3px;top:9.0px;width:4.7px;height:4.5px"></div><div class="n" style="left:0.0px;top:14.0px;width:15.3px;height:4.5px"></div><div class="n" style="left:20.8px;top:14.0px;width:24.7px;height:4.5px"></div><div class="n" style="left:51.8px;top:14.0px;width:9.4px;height:4.5px"></div><div class="n" style="left:15.3px;top:17.5px;width:5.0px;height:4.5px"></div><div class="n" style="left:45.5px;top:17.5px;width:5.9px;height:4.5px"></div><div class="n" style="left:0.0px;top:23.0px;width:14.3px;height:4.5px"></div><div class="n" style="left:20.6px;top:23.0px;width:24.9px;height:4.5px"></div><div class="n" style="left:51.5px;top:23.0px;width:9.7px;height:4.5px"></div><div class="n" style="left:14.7px;top:29.0px;width:15.0px;height:4.5px"></div><div class="n" style="left:46.0px;top:29.0px;width:15.2px;height:4.5px"></div><div class="n" style="left:0.0px;top:34.0px;width:15.2px;height:4.5px"></div><div class="n" style="left:30.5px;top:34.0px;width:15.0px;height:4.5px"></div><div class="n" style="left:15.3px;top:37.0px;width:5.0px;height:4.5px"></div><div class="n" style="left:45.5px;top:37.0px;width:6.0px;height:4.5px"></div><div class="n" style="left:51.5px;top:49.0px;width:9.1px;height:4.5px"></div><div class="n" style="left:61.2px;top:3.0px;width:15.0px;height:4.5px"></div><div class="n" style="left:82.2px;top:3.0px;width:24.5px;height:4.5px"></div><div class="n" style="left:76.5px;top:9.0px;width:4.7px;height:4.5px"></div><div class="n" style="left:61.2px;top:14.0px;width:15.3px;height:4.5px"></div><div class="n" style="left:82.0px;top:14.0px;width:24.7px;height:4.5px"></div><div class="n" style="left:113.0px;top:14.0px;width:9.4px;height:4.5px"></div><div class="n" style="left:76.5px;top:17.5px;width:5.0px;height:4.5px"></div><div class="n" style="left:106.7px;top:17.5px;width:5.9px;height:4.5px"></div><div class="n" style="left:61.2px;top:23.0px;width:14.3px;height:4.5px"></div><div class="n" style="left:81.8px;top:23.0px;width:24.9px;height:4.5px"></div><div class="n" style="left:112.7px;top:23.0px;width:9.7px;height:4.5px"></div><div class="n" style="left:61.2px;top:29.0px;width:61.2px;height:4.5px"></div><div class="n" style="left:61.2px;top:34.0px;width:15.2px;height:4.5px"></div><div class="n" style="left:91.7px;top:34.0px;width:15.0px;height:4.5px"></div><div class="n" style="left:76.5px;top:37.0px;width:5.0px;height:4.5px"></div><div class="n" style="left:106.7px;top:37.0px;width:6.0px;height:4.5px"></div><div class="n" style="left:112.7px;top:49.0px;width:9.1px;height:4.5px"></div><div class="n" style="left:122.4px;top:3.0px;width:15.0px;height:4.5px"></div><div class="n" style="left:143.4px;top:3.0px;width:24.5px;height:4.5px"></div><div class="n" style="left:137.7px;top:9.0px;width:4.7px;height:4.5px"></div><div class="n" style="left:122.4px;top:14.0px;width:15.3px;height:4.5px"></div><div class="n" style="left:143.2px;top:14.0px;width:24.7px;height:4.5px"></div><div class="n" style="left:174.2px;top:14.0px;width:9.4px;height:4.5px"></div><div class="n" style="left:137.7px;top:17.5px;width:5.0px;height:4.5px"></div><div class="n" style="left:167.9px;top:17.5px;width:5.9px;height:4.5px"></div><div class="n" style="left:122.4px;top:23.0px;width:14.3px;height:4.5px"></div><div class="n" style="left:143.0px;top:23.0px;width:24.9px;height:4.5px"></div><div class="n" style="left:173.9px;top:23.0px;width:9.7px;height:4.5px"></div><div class="n" style="left:122.4px;top:29.0px;width:61.2px;height:4.5px"></div><div class="n" style="left:122.4px;top:34.0px;width:15.2px;height:4.5px"></div><div class="n" style="left:152.9px;top:34.0px;width:15.0px;height:4.5px"></div><div class="n" style="left:137.7px;top:37.0px;width:5.0px;height:4.5px"></div><div class="n" style="left:167.9px;top:37.0px;width:6.0px;height:4.5px"></div><div class="n" style="left:173.9px;top:49.0px;width:9.1px;height:4.5px"></div><div class="n" style="left:183.6px;top:3.0px;width:15.0px;height:4.5px"></div><div class="n" style="left:204.6px;top:3.0px;width:24.5px;height:4.5px"></div><div class="n" style="left:198.9px;top:9.0px;width:4.7px;height:4.5px"></div><div class="n" style="left:183.6px;top:14.0px;width:15.3px;height:4.5px"></div><div class="n" style="left:204.4px;top:14.0px;width:24.7px;height:4.5px"></div><div class="n" style="left:235.4px;top:14.0px;width:9.4px;height:4.5px"></div><div class="n" style="left:198.9px;top:17.5px;width:5.0px;height:4.5px"></div><div class="n" style="left:229.1px;top:17.5px;width:5.9px;height:4.5px"></div><div class="n" style="left:183.6px;top:23.0px;width:14.3px;height:4.5px"></div><div class="n" style="left:204.2px;top:23.0px;width:24.9px;height:4.5px"></div><div class="n" style="left:235.1px;top:23.0px;width:9.7px;height:4.5px"></div><div class="n" style="left:183.6px;top:29.0px;width:61.2px;height:4.5px"></div><div class="n" style="left:183.6px;top:34.0px;width:15.2px;height:4.5px"></div><div class="n" style="left:214.1px;top:34.0px;width:15.0px;height:4.5px"></div><div class="n" style="left:198.9px;top:37.0px;width:5.0px;height:4.5px"></div><div class="n" style="left:229.1px;top:37.0px;width:6.0px;height:4.5px"></div><div class="n" style="left:235.1px;top:49.0px;width:9.1px;height:4.5px"></div><div class="n" style="left:244.8px;top:3.0px;width:15.0px;height:4.5px"></div><div class="n" style="left:265.8px;top:3.0px;width:24.5px;height:4.5px"></div><div class="n" style="left:260.1px;top:9.0px;width:4.7px;height:4.5px"></div><div class="n" style="left:244.8px;top:14.0px;width:15.3px;height:4.5px"></div><div class="n" style="left:265.6px;top:14.0px;width:24.7px;height:4.5px"></div><div class="n" style="left:296.6px;top:14.0px;width:9.4px;height:4.5px"></div><div class="n" style="left:260.1px;top:17.5px;width:5.0px;height:4.5px"></div><div class="n" style="left:290.3px;top:17.5px;width:5.9px;height:4.5px"></div><div class="n" style="left:244.8px;top:23.0px;width:14.3px;height:4.5px"></div><div class="n" style="left:265.4px;top:23.0px;width:24.9px;height:4.5px"></div><div class="n" style="left:296.3px;top:23.0px;width:9.7px;height:4.5px"></div><div class="n" style="left:244.8px;top:29.0px;width:61.2px;height:4.5px"></div><div class="n" style="left:244.8px;top:34.0px;width:15.2px;height:4.5px"></div><div class="n" style="left:275.3px;top:34.0px;width:15.0px;height:4.5px"></div><div class="n" style="left:260.1px;top:37.0px;width:5.0px;height:4.5px"></div><div class="n" style="left:290.3px;top:37.0px;width:6.0px;height:4.5px"></div><div class="n" style="left:296.3px;top:49.0px;width:9.1px;height:4.5px"></div><div class="n" style="left:306.0px;top:3.0px;width:15.0px;height:4.5px"></div><div class="n" style="left:327.0px;top:3.0px;width:24.5px;height:4.5px"></div><div class="n" style="left:321.3px;top:9.0px;width:4.7px;height:4.5px"></div><div class="n" style="left:306.0px;top:14.0px;width:15.3px;height:4.5px"></div><div class="n" style="left:326.8px;top:14.0px;width:24.7px;height:4.5px"></div><div class="n" style="left:357.8px;top:14.0px;width:7.3px;height:4.5px"></div><div class="n" style="left:321.3px;top:17.5px;width:5.0px;height:4.5px"></div><div class="n" style="left:351.5px;top:17.5px;width:5.9px;height:4.5px"></div><div class="n" style="left:306.0px;top:23.0px;width:14.3px;height:4.5px"></div><div class="n" style="left:326.6px;top:23.0px;width:24.9px;height:4.5px"></div><div class="n" style="left:357.5px;top:23.0px;width:7.6px;height:4.5px"></div><div class="n" style="left:306.0px;top:29.0px;width:59.1px;height:4.5px"></div><div class="n" style="left:306.0px;top:34.0px;width:15.2px;height:4.5px"></div><div class="n" style="left:336.5px;top:34.0px;width:15.0px;height:4.5px"></div><div class="n" style="left:321.3px;top:37.0px;width:5.0px;height:4.5px"></div><div class="n" style="left:351.5px;top:37.0px;width:6.0px;height:4.5px"></div><div class="n" style="left:357.5px;top:49.0px;width:7.6px;height:4.5px"></div><div class="n" style="left:0.0px;top:17.0px;width:365.1px;height:1.5px"></div><div style="left:3px;top:4px;font-size:12px;font-weight:bold;color:#33414c;line-height:12px;white-space:nowrap;letter-spacing:-0.2px">lazysnake 01</div><div style="left:60.2px;top:0;width:1px;height:100%;background:rgba(40,110,170,0.45)"></div><div style="left:121.4px;top:0;width:1px;height:100%;background:rgba(40,110,170,0.45)"></div><div style="left:182.6px;top:0;width:1px;height:100%;background:rgba(40,110,170,0.45)"></div><div style="left:243.7px;top:0;width:1px;height:100%;background:rgba(40,110,170,0.45)"></div><div style="left:304.9px;top:0;width:1px;height:100%;background:rgba(40,110,170,0.45)"></div></div>
<div class="part" style="left:490.3px;top:146px;width:367.1px;height:79px;"><div class="n" style="left:0.0px;top:3.0px;width:15.0px;height:4.5px"></div><div class="n" style="left:21.0px;top:3.0px;width:24.5px;height:4.5px"></div><div class="n" style="left:15.3px;top:9.0px;width:4.7px;height:4.5px"></div><div class="n" style="left:0.0px;top:14.0px;width:15.3px;height:4.5px"></div><div class="n" style="left:20.8px;top:14.0px;width:24.7px;height:4.5px"></div><div class="n" style="left:51.8px;top:14.0px;width:9.4px;height:4.5px"></div><div class="n" style="left:15.3px;top:17.5px;width:5.0px;height:4.5px"></div><div class="n" style="left:45.5px;top:17.5px;width:5.9px;height:4.5px"></div><div class="n" style="left:0.0px;top:23.0px;width:14.3px;height:4.5px"></div><div class="n" style="left:20.6px;top:23.0px;width:24.9px;height:4.5px"></div><div class="n" style="left:51.5px;top:23.0px;width:9.7px;height:4.5px"></div><div class="n" style="left:14.7px;top:29.0px;width:15.0px;height:4.5px"></div><div class="n" style="left:46.0px;top:29.0px;width:15.2px;height:4.5px"></div><div class="n" style="left:0.0px;top:34.0px;width:15.2px;height:4.5px"></div><div class="n" style="left:30.5px;top:34.0px;width:15.0px;height:4.5px"></div><div class="n" style="left:15.3px;top:37.0px;width:5.0px;height:4.5px"></div><div class="n" style="left:45.5px;top:37.0px;width:6.0px;height:4.5px"></div><div class="n" style="left:51.5px;top:49.0px;width:9.1px;height:4.5px"></div><div class="n" style="left:61.2px;top:3.0px;width:15.0px;height:4.5px"></div><div class="n" style="left:82.2px;top:3.0px;width:24.5px;height:4.5px"></div><div class="n" style="left:76.5px;top:9.0px;width:4.7px;height:4.5px"></div><div class="n" style="left:61.2px;top:14.0px;width:15.3px;height:4.5px"></div><div class="n" style="left:82.0px;top:14.0px;width:24.7px;height:4.5px"></div><div class="n" style="left:113.0px;top:14.0px;width:9.4px;height:4.5px"></div><div class="n" style="left:76.5px;top:17.5px;width:5.0px;height:4.5px"></div><div class="n" style="left:106.7px;top:17.5px;width:5.9px;height:4.5px"></div><div class="n" style="left:61.2px;top:23.0px;width:14.3px;height:4.5px"></div><div class="n" style="left:81.8px;top:23.0px;width:24.9px;height:4.5px"></div><div class="n" style="left:112.7px;top:23.0px;width:9.7px;height:4.5px"></div><div class="n" style="left:61.2px;top:29.0px;width:61.2px;height:4.5px"></div><div class="n" style="left:61.2px;top:34.0px;width:15.2px;height:4.5px"></div><div class="n" style="left:91.7px;top:34.0px;width:15.0px;height:4.5px"></div><div class="n" style="left:76.5px;top:37.0px;width:5.0px;height:4.5px"></div><div class="n" style="left:106.7px;top:37.0px;width:6.0px;height:4.5px"></div><div class="n" style="left:112.7px;top:49.0px;width:9.1px;height:4.5px"></div><div class="n" style="left:122.4px;top:3.0px;width:15.0px;height:4.5px"></div><div class="n" style="left:143.4px;top:3.0px;width:24.5px;height:4.5px"></div><div class="n" style="left:137.7px;top:9.0px;width:4.7px;height:4.5px"></div><div class="n" style="left:122.4px;top:14.0px;width:15.3px;height:4.5px"></div><div class="n" style="left:143.2px;top:14.0px;width:24.7px;height:4.5px"></div><div class="n" style="left:174.2px;top:14.0px;width:9.4px;height:4.5px"></div><div class="n" style="left:137.7px;top:17.5px;width:5.0px;height:4.5px"></div><div class="n" style="left:167.9px;top:17.5px;width:5.9px;height:4.5px"></div><div class="n" style="left:122.4px;top:23.0px;width:14.3px;height:4.5px"></div><div class="n" style="left:143.0px;top:23.0px;width:24.9px;height:4.5px"></div><div class="n" style="left:173.9px;top:23.0px;width:9.7px;height:4.5px"></div><div class="n" style="left:122.4px;top:29.0px;width:61.2px;height:4.5px"></div><div class="n" style="left:122.4px;top:34.0px;width:15.2px;height:4.5px"></div><div class="n" style="left:152.9px;top:34.0px;width:15.0px;height:4.5px"></div><div class="n" style="left:137.7px;top:37.0px;width:5.0px;height:4.5px"></div><div class="n" style="left:167.9px;top:37.0px;width:6.0px;height:4.5px"></div><div class="n" style="left:173.9px;top:49.0px;width:9.1px;height:4.5px"></div><div class="n" style="left:183.6px;top:3.0px;width:15.0px;height:4.5px"></div><div class="n" style="left:204.6px;top:3.0px;width:24.5px;height:4.5px"></div><div class="n" style="left:198.9px;top:9.0px;width:4.7px;height:4.5px"></div><div class="n" style="left:183.6px;top:14.0px;width:15.3px;height:4.5px"></div><div class="n" style="left:204.4px;top:14.0px;width:24.7px;height:4.5px"></div><div class="n" style="left:235.4px;top:14.0px;width:9.4px;height:4.5px"></div><div class="n" style="left:198.9px;top:17.5px;width:5.0px;height:4.5px"></div><div class="n" style="left:229.1px;top:17.5px;width:5.9px;height:4.5px"></div><div class="n" style="left:183.6px;top:23.0px;width:14.3px;height:4.5px"></div><div class="n" style="left:204.2px;top:23.0px;width:24.9px;height:4.5px"></div><div class="n" style="left:235.1px;top:23.0px;width:9.7px;height:4.5px"></div><div class="n" style="left:183.6px;top:29.0px;width:61.2px;height:4.5px"></div><div class="n" style="left:183.6px;top:34.0px;width:15.2px;height:4.5px"></div><div class="n" style="left:214.1px;top:34.0px;width:15.0px;height:4.5px"></div><div class="n" style="left:198.9px;top:37.0px;width:5.0px;height:4.5px"></div><div class="n" style="left:229.1px;top:37.0px;width:6.0px;height:4.5px"></div><div class="n" style="left:235.1px;top:49.0px;width:9.1px;height:4.5px"></div><div class="n" style="left:244.8px;top:3.0px;width:15.0px;height:4.5px"></div><div class="n" style="left:265.8px;top:3.0px;width:24.5px;height:4.5px"></div><div class="n" style="left:260.1px;top:9.0px;width:4.7px;height:4.5px"></div><div class="n" style="left:244.8px;top:14.0px;width:15.3px;height:4.5px"></div><div class="n" style="left:265.6px;top:14.0px;width:24.7px;height:4.5px"></div><div class="n" style="left:296.6px;top:14.0px;width:9.4px;height:4.5px"></div><div class="n" style="left:260.1px;top:17.5px;width:5.0px;height:4.5px"></div><div class="n" style="left:290.3px;top:17.5px;width:5.9px;height:4.5px"></div><div class="n" style="left:244.8px;top:23.0px;width:14.3px;height:4.5px"></div><div class="n" style="left:265.4px;top:23.0px;width:24.9px;height:4.5px"></div><div class="n" style="left:296.3px;top:23.0px;width:9.7px;height:4.5px"></div><div class="n" style="left:244.8px;top:29.0px;width:61.2px;height:4.5px"></div><div class="n" style="left:244.8px;top:34.0px;width:15.2px;height:4.5px"></div><div class="n" style="left:275.3px;top:34.0px;width:15.0px;height:4.5px"></div><div class="n" style="left:260.1px;top:37.0px;width:5.0px;height:4.5px"></div><div class="n" style="left:290.3px;top:37.0px;width:6.0px;height:4.5px"></div><div class="n" style="left:296.3px;top:49.0px;width:9.1px;height:4.5px"></div><div class="n" style="left:306.0px;top:3.0px;width:15.0px;height:4.5px"></div><div class="n" style="left:327.0px;top:3.0px;width:24.5px;height:4.5px"></div><div class="n" style="left:321.3px;top:9.0px;width:4.7px;height:4.5px"></div><div class="n" style="left:306.0px;top:14.0px;width:15.3px;height:4.5px"></div><div class="n" style="left:326.8px;top:14.0px;width:24.7px;height:4.5px"></div><div class="n" style="left:357.8px;top:14.0px;width:7.3px;height:4.5px"></div><div class="n" style="left:321.3px;top:17.5px;width:5.0px;height:4.5px"></div><div class="n" style="left:351.5px;top:17.5px;width:5.9px;height:4.5px"></div><div class="n" style="left:306.0px;top:23.0px;width:14.3px;height:4.5px"></div><div class="n" style="left:326.6px;top:23.0px;width:24.9px;height:4.5px"></div><div class="n" style="left:357.5px;top:23.0px;width:7.6px;height:4.5px"></div><div class="n" style="left:306.0px;top:29.0px;width:59.1px;height:4.5px"></div><div class="n" style="left:306.0px;top:34.0px;width:15.2px;height:4.5px"></div><div class="n" style="left:336.5px;top:34.0px;width:15.0px;height:4.5px"></div><div class="n" style="left:321.3px;top:37.0px;width:5.0px;height:4.5px"></div><div class="n" style="left:351.5px;top:37.0px;width:6.0px;height:4.5px"></div><div class="n" style="left:357.5px;top:49.0px;width:7.6px;height:4.5px"></div><div class="n" style="left:0.0px;top:17.0px;width:365.1px;height:1.5px"></div><div style="left:3px;top:4px;font-size:12px;font-weight:bold;color:#33414c;line-height:12px;white-space:nowrap;letter-spacing:-0.2px">lazysnake 01</div><div style="left:60.2px;top:0;width:1px;height:100%;background:rgba(40,110,170,0.45)"></div><div style="left:121.4px;top:0;width:1px;height:100%;background:rgba(40,110,170,0.45)"></div><div style="left:182.6px;top:0;width:1px;height:100%;background:rgba(40,110,170,0.45)"></div><div style="left:243.7px;top:0;width:1px;height:100%;background:rgba(40,110,170,0.45)"></div><div style="left:304.9px;top:0;width:1px;height:100%;background:rgba(40,110,170,0.45)"></div></div>
<div class="part" style="left:490.3px;top:228px;width:244.74px;height:119px;"><div class="n" style="left:16.7px;top:29.2px;width:1.8px;height:4.7px"></div><div class="n" style="left:19.1px;top:35.2px;width:1.8px;height:3.1px"></div><div class="n" style="left:3.7px;top:37.9px;width:1.8px;height:4.5px"></div><div class="n" style="left:9.5px;top:37.9px;width:1.3px;height:4.5px"></div><div class="n" style="left:19.1px;top:37.9px;width:5.4px;height:4.5px"></div><div class="n" style="left:30.7px;top:37.9px;width:1.8px;height:4.5px"></div><div class="n" style="left:34.0px;top:37.9px;width:1.8px;height:4.5px"></div><div class="n" style="left:39.8px;top:37.9px;width:1.8px;height:4.5px"></div><div class="n" style="left:3.7px;top:44.2px;width:1.3px;height:4.5px"></div><div class="n" style="left:9.5px;top:44.2px;width:2.7px;height:4.5px"></div><div class="n" style="left:14.4px;top:44.2px;width:2.4px;height:4.5px"></div><div class="n" style="left:28.9px;top:44.2px;width:2.9px;height:4.5px"></div><div class="n" style="left:33.6px;top:44.2px;width:1.3px;height:4.5px"></div><div class="n" style="left:39.8px;top:44.2px;width:7.8px;height:4.5px"></div><div class="n" style="left:5.9px;top:50.2px;width:3.6px;height:4.4px"></div><div class="n" style="left:11.8px;top:50.2px;width:2.5px;height:4.4px"></div><div class="n" style="left:26.3px;top:50.2px;width:2.2px;height:4.4px"></div><div class="n" style="left:35.8px;top:50.2px;width:3.6px;height:4.4px"></div><div class="n" style="left:47.6px;top:50.2px;width:7.8px;height:4.4px"></div><div class="n" style="left:11.8px;top:54.6px;width:1.3px;height:2.9px"></div><div class="n" style="left:49.4px;top:54.6px;width:1.8px;height:2.9px"></div><div class="n" style="left:3.7px;top:59.3px;width:1.8px;height:4.4px"></div><div class="n" style="left:3.7px;top:65.1px;width:7.1px;height:4.5px"></div><div class="n" style="left:13.1px;top:65.1px;width:1.8px;height:4.5px"></div><div class="n" style="left:26.7px;top:65.1px;width:6.3px;height:4.5px"></div><div class="n" style="left:34.0px;top:65.1px;width:1.8px;height:4.5px"></div><div class="n" style="left:39.8px;top:65.1px;width:1.5px;height:4.5px"></div><div class="n" style="left:8.6px;top:70.9px;width:1.5px;height:4.7px"></div><div class="n" style="left:30.3px;top:70.9px;width:1.5px;height:4.7px"></div><div class="n" style="left:41.6px;top:70.9px;width:5.4px;height:4.7px"></div><div class="n" style="left:14.9px;top:74.2px;width:6.7px;height:4.5px"></div><div class="n" style="left:35.8px;top:74.2px;width:4.0px;height:4.5px"></div><div class="n" style="left:44.5px;top:74.2px;width:4.9px;height:4.5px"></div><div class="n" style="left:51.7px;top:74.2px;width:4.0px;height:4.5px"></div><div class="n" style="left:49.4px;top:80.0px;width:2.4px;height:4.7px"></div><div class="n" style="left:81.4px;top:17.0px;width:1.8px;height:4.5px"></div><div class="n" style="left:80.1px;top:23.4px;width:1.3px;height:4.5px"></div><div class="n" style="left:77.8px;top:29.2px;width:1.8px;height:4.7px"></div><div class="n" style="left:86.1px;top:29.2px;width:1.5px;height:4.7px"></div><div class="n" style="left:60.7px;top:37.9px;width:5.8px;height:4.5px"></div><div class="n" style="left:70.7px;top:37.9px;width:1.8px;height:4.5px"></div><div class="n" style="left:91.5px;top:37.9px;width:1.8px;height:4.5px"></div><div class="n" style="left:95.5px;top:37.9px;width:1.8px;height:4.5px"></div><div class="n" style="left:100.6px;top:37.9px;width:1.8px;height:4.5px"></div><div class="n" style="left:60.7px;top:44.2px;width:1.3px;height:4.5px"></div><div class="n" style="left:64.3px;top:44.2px;width:1.3px;height:4.5px"></div><div class="n" style="left:70.7px;top:44.2px;width:1.3px;height:4.5px"></div><div class="n" style="left:73.8px;top:44.2px;width:3.6px;height:4.5px"></div><div class="n" style="left:89.7px;top:44.2px;width:2.5px;height:4.5px"></div><div class="n" style="left:95.5px;top:44.2px;width:1.5px;height:4.5px"></div><div class="n" style="left:100.6px;top:44.2px;width:8.0px;height:4.5px"></div><div class="n" style="left:66.9px;top:50.2px;width:3.3px;height:4.4px"></div><div class="n" style="left:72.9px;top:50.2px;width:1.8px;height:4.4px"></div><div class="n" style="left:77.4px;top:50.2px;width:1.8px;height:4.4px"></div><div class="n" style="left:86.1px;top:50.2px;width:3.1px;height:4.4px"></div><div class="n" style="left:98.2px;top:50.2px;width:1.8px;height:4.4px"></div><div class="n" style="left:108.6px;top:50.2px;width:7.8px;height:4.4px"></div><div class="n" style="left:72.9px;top:54.6px;width:1.3px;height:2.9px"></div><div class="n" style="left:110.4px;top:54.6px;width:1.8px;height:2.9px"></div><div class="n" style="left:58.9px;top:59.3px;width:7.6px;height:4.4px"></div><div class="n" style="left:81.4px;top:59.3px;width:1.8px;height:4.4px"></div><div class="n" style="left:57.1px;top:65.1px;width:2.2px;height:4.5px"></div><div class="n" style="left:61.1px;top:65.1px;width:1.8px;height:4.5px"></div><div class="n" style="left:65.1px;top:65.1px;width:7.3px;height:4.5px"></div><div class="n" style="left:80.1px;top:65.1px;width:1.8px;height:4.5px"></div><div class="n" style="left:87.9px;top:65.1px;width:1.3px;height:4.5px"></div><div class="n" style="left:91.9px;top:65.1px;width:1.5px;height:4.5px"></div><div class="n" style="left:95.5px;top:65.1px;width:1.5px;height:4.5px"></div><div class="n" style="left:100.6px;top:65.1px;width:1.8px;height:4.5px"></div><div class="n" style="left:70.7px;top:70.9px;width:1.3px;height:4.7px"></div><div class="n" style="left:90.4px;top:70.9px;width:1.8px;height:4.7px"></div><div class="n" style="left:104.2px;top:70.9px;width:4.4px;height:4.7px"></div><div class="n" style="left:97.7px;top:74.2px;width:2.9px;height:4.5px"></div><div class="n" style="left:104.2px;top:74.2px;width:3.1px;height:4.5px"></div><div class="n" style="left:112.8px;top:74.2px;width:3.6px;height:4.5px"></div><div class="n" style="left:110.4px;top:80.0px;width:1.8px;height:4.7px"></div><div class="n" style="left:139.1px;top:29.2px;width:1.8px;height:4.7px"></div><div class="n" style="left:141.5px;top:35.2px;width:1.8px;height:3.1px"></div><div class="n" style="left:126.1px;top:37.9px;width:1.8px;height:4.5px"></div><div class="n" style="left:131.9px;top:37.9px;width:1.3px;height:4.5px"></div><div class="n" style="left:141.5px;top:37.9px;width:5.4px;height:4.5px"></div><div class="n" style="left:153.1px;top:37.9px;width:1.8px;height:4.5px"></div><div class="n" style="left:156.4px;top:37.9px;width:1.8px;height:4.5px"></div><div class="n" style="left:162.2px;top:37.9px;width:1.8px;height:4.5px"></div><div class="n" style="left:126.1px;top:44.2px;width:1.3px;height:4.5px"></div><div class="n" style="left:131.9px;top:44.2px;width:2.7px;height:4.5px"></div><div class="n" style="left:136.8px;top:44.2px;width:2.4px;height:4.5px"></div><div class="n" style="left:151.3px;top:44.2px;width:2.9px;height:4.5px"></div><div class="n" style="left:156.0px;top:44.2px;width:1.3px;height:4.5px"></div><div class="n" style="left:162.2px;top:44.2px;width:7.8px;height:4.5px"></div><div class="n" style="left:128.3px;top:50.2px;width:3.6px;height:4.4px"></div><div class="n" style="left:134.2px;top:50.2px;width:2.5px;height:4.4px"></div><div class="n" style="left:148.7px;top:50.2px;width:2.2px;height:4.4px"></div><div class="n" style="left:158.2px;top:50.2px;width:3.6px;height:4.4px"></div><div class="n" style="left:170.0px;top:50.2px;width:7.8px;height:4.4px"></div><div class="n" style="left:134.2px;top:54.6px;width:1.3px;height:2.9px"></div><div class="n" style="left:171.8px;top:54.6px;width:1.8px;height:2.9px"></div><div class="n" style="left:126.1px;top:59.3px;width:1.8px;height:4.4px"></div><div class="n" style="left:126.1px;top:65.1px;width:7.1px;height:4.5px"></div><div class="n" style="left:135.5px;top:65.1px;width:1.8px;height:4.5px"></div><div class="n" style="left:149.1px;top:65.1px;width:6.3px;height:4.5px"></div><div class="n" style="left:156.4px;top:65.1px;width:1.8px;height:4.5px"></div><div class="n" style="left:162.2px;top:65.1px;width:1.5px;height:4.5px"></div><div class="n" style="left:131.0px;top:70.9px;width:1.5px;height:4.7px"></div><div class="n" style="left:152.7px;top:70.9px;width:1.5px;height:4.7px"></div><div class="n" style="left:164.0px;top:70.9px;width:5.4px;height:4.7px"></div><div class="n" style="left:137.3px;top:74.2px;width:6.7px;height:4.5px"></div><div class="n" style="left:158.2px;top:74.2px;width:4.0px;height:4.5px"></div><div class="n" style="left:166.9px;top:74.2px;width:4.9px;height:4.5px"></div><div class="n" style="left:174.1px;top:74.2px;width:4.0px;height:4.5px"></div><div class="n" style="left:171.8px;top:80.0px;width:2.4px;height:4.7px"></div><div class="n" style="left:203.8px;top:17.0px;width:1.8px;height:4.5px"></div><div class="n" style="left:202.5px;top:23.4px;width:1.3px;height:4.5px"></div><div class="n" style="left:200.2px;top:29.2px;width:1.8px;height:4.7px"></div><div class="n" style="left:208.5px;top:29.2px;width:1.5px;height:4.7px"></div><div class="n" style="left:183.1px;top:37.9px;width:5.8px;height:4.5px"></div><div class="n" style="left:193.1px;top:37.9px;width:1.8px;height:4.5px"></div><div class="n" style="left:213.9px;top:37.9px;width:1.8px;height:4.5px"></div><div class="n" style="left:217.9px;top:37.9px;width:1.8px;height:4.5px"></div><div class="n" style="left:223.0px;top:37.9px;width:1.8px;height:4.5px"></div><div class="n" style="left:183.1px;top:44.2px;width:1.3px;height:4.5px"></div><div class="n" style="left:186.7px;top:44.2px;width:1.3px;height:4.5px"></div><div class="n" style="left:193.1px;top:44.2px;width:1.3px;height:4.5px"></div><div class="n" style="left:196.2px;top:44.2px;width:3.6px;height:4.5px"></div><div class="n" style="left:212.1px;top:44.2px;width:2.5px;height:4.5px"></div><div class="n" style="left:217.9px;top:44.2px;width:1.5px;height:4.5px"></div><div class="n" style="left:223.0px;top:44.2px;width:8.0px;height:4.5px"></div><div class="n" style="left:189.3px;top:50.2px;width:3.3px;height:4.4px"></div><div class="n" style="left:195.3px;top:50.2px;width:1.8px;height:4.4px"></div><div class="n" style="left:199.8px;top:50.2px;width:1.8px;height:4.4px"></div><div class="n" style="left:208.5px;top:50.2px;width:3.1px;height:4.4px"></div><div class="n" style="left:220.6px;top:50.2px;width:1.8px;height:4.4px"></div><div class="n" style="left:231.0px;top:50.2px;width:7.8px;height:4.4px"></div><div class="n" style="left:195.3px;top:54.6px;width:1.3px;height:2.9px"></div><div class="n" style="left:232.8px;top:54.6px;width:1.8px;height:2.9px"></div><div class="n" style="left:181.3px;top:59.3px;width:7.6px;height:4.4px"></div><div class="n" style="left:203.8px;top:59.3px;width:1.8px;height:4.4px"></div><div class="n" style="left:179.5px;top:65.1px;width:2.2px;height:4.5px"></div><div class="n" style="left:183.5px;top:65.1px;width:1.8px;height:4.5px"></div><div class="n" style="left:187.5px;top:65.1px;width:7.3px;height:4.5px"></div><div class="n" style="left:202.5px;top:65.1px;width:1.8px;height:4.5px"></div><div class="n" style="left:210.3px;top:65.1px;width:1.3px;height:4.5px"></div><div class="n" style="left:214.3px;top:65.1px;width:1.5px;height:4.5px"></div><div class="n" style="left:217.9px;top:65.1px;width:1.5px;height:4.5px"></div><div class="n" style="left:223.0px;top:65.1px;width:1.8px;height:4.5px"></div><div class="n" style="left:193.1px;top:70.9px;width:1.3px;height:4.7px"></div><div class="n" style="left:212.8px;top:70.9px;width:1.8px;height:4.7px"></div><div class="n" style="left:226.6px;top:70.9px;width:4.4px;height:4.7px"></div><div class="n" style="left:220.1px;top:74.2px;width:2.9px;height:4.5px"></div><div class="n" style="left:226.6px;top:74.2px;width:3.1px;height:4.5px"></div><div class="n" style="left:235.2px;top:74.2px;width:3.6px;height:4.5px"></div><div class="n" style="left:232.8px;top:80.0px;width:1.8px;height:4.7px"></div><div style="left:3px;top:3px;width:72px;height:10px;border-bottom:1.5px solid #2a3a48"></div><div style="left:75px;top:3px;font-size:12px;font-weight:bold;color:#33414c;line-height:12px;white-space:nowrap;letter-spacing:-0.3px">LazySnake</div><div style="left:60.2px;top:0;width:1px;height:100%;background:rgba(40,110,170,0.45)"></div><div style="left:121.4px;top:0;width:1px;height:100%;background:rgba(40,110,170,0.45)"></div><div style="left:182.6px;top:0;width:1px;height:100%;background:rgba(40,110,170,0.45)"></div></div>
<div class="part" style="left:490.3px;top:350px;width:198.85px;height:99px;"><div class="n" style="left:15.0px;top:23.0px;width:8.5px;height:4.0px"></div><div class="n" style="left:24.5px;top:23.0px;width:0.8px;height:4.0px"></div><div class="n" style="left:26.0px;top:23.0px;width:0.8px;height:4.0px"></div><div class="n" style="left:27.5px;top:23.0px;width:0.8px;height:4.0px"></div><div class="n" style="left:29.0px;top:23.0px;width:0.8px;height:4.0px"></div><div class="n" style="left:30.3px;top:23.0px;width:8.5px;height:4.0px"></div><div class="n" style="left:39.8px;top:23.0px;width:0.8px;height:4.0px"></div><div class="n" style="left:41.3px;top:23.0px;width:0.8px;height:4.0px"></div><div class="n" style="left:42.8px;top:23.0px;width:0.8px;height:4.0px"></div><div class="n" style="left:44.3px;top:23.0px;width:0.8px;height:4.0px"></div><div class="n" style="left:45.6px;top:23.0px;width:8.5px;height:4.0px"></div><div class="n" style="left:55.1px;top:23.0px;width:0.8px;height:4.0px"></div><div class="n" style="left:56.6px;top:23.0px;width:0.8px;height:4.0px"></div><div class="n" style="left:58.1px;top:23.0px;width:0.8px;height:4.0px"></div><div class="n" style="left:59.6px;top:23.0px;width:0.8px;height:4.0px"></div><div class="n" style="left:60.9px;top:23.0px;width:8.5px;height:4.0px"></div><div class="n" style="left:70.4px;top:23.0px;width:0.8px;height:4.0px"></div><div class="n" style="left:71.9px;top:23.0px;width:0.8px;height:4.0px"></div><div class="n" style="left:73.4px;top:23.0px;width:0.8px;height:4.0px"></div><div class="n" style="left:74.9px;top:23.0px;width:0.8px;height:4.0px"></div><div class="n" style="left:76.2px;top:23.0px;width:8.5px;height:4.0px"></div><div class="n" style="left:85.7px;top:23.0px;width:0.8px;height:4.0px"></div><div class="n" style="left:87.2px;top:23.0px;width:0.8px;height:4.0px"></div><div class="n" style="left:88.7px;top:23.0px;width:0.8px;height:4.0px"></div><div class="n" style="left:90.2px;top:23.0px;width:0.8px;height:4.0px"></div><div class="n" style="left:91.5px;top:23.0px;width:8.5px;height:4.0px"></div><div class="n" style="left:101.0px;top:23.0px;width:0.8px;height:4.0px"></div><div class="n" style="left:102.5px;top:23.0px;width:0.8px;height:4.0px"></div><div class="n" style="left:104.0px;top:23.0px;width:0.8px;height:4.0px"></div><div class="n" style="left:105.5px;top:23.0px;width:0.8px;height:4.0px"></div><div class="n" style="left:106.8px;top:23.0px;width:8.5px;height:4.0px"></div><div class="n" style="left:116.3px;top:23.0px;width:0.8px;height:4.0px"></div><div class="n" style="left:117.8px;top:23.0px;width:0.8px;height:4.0px"></div><div class="n" style="left:119.3px;top:23.0px;width:0.8px;height:4.0px"></div><div class="n" style="left:120.8px;top:23.0px;width:0.8px;height:4.0px"></div><div class="n" style="left:122.1px;top:23.0px;width:8.5px;height:4.0px"></div><div class="n" style="left:131.6px;top:23.0px;width:0.8px;height:4.0px"></div><div class="n" style="left:133.1px;top:23.0px;width:0.8px;height:4.0px"></div><div class="n" style="left:134.6px;top:23.0px;width:0.8px;height:4.0px"></div><div class="n" style="left:136.1px;top:23.0px;width:0.8px;height:4.0px"></div><div class="n" style="left:137.4px;top:23.0px;width:8.5px;height:4.0px"></div><div class="n" style="left:146.9px;top:23.0px;width:0.8px;height:4.0px"></div><div class="n" style="left:148.4px;top:23.0px;width:0.8px;height:4.0px"></div><div class="n" style="left:149.9px;top:23.0px;width:0.8px;height:4.0px"></div><div class="n" style="left:151.4px;top:23.0px;width:0.8px;height:4.0px"></div><div class="n" style="left:152.7px;top:23.0px;width:8.5px;height:4.0px"></div><div class="n" style="left:162.2px;top:23.0px;width:0.8px;height:4.0px"></div><div class="n" style="left:163.7px;top:23.0px;width:0.8px;height:4.0px"></div><div class="n" style="left:165.2px;top:23.0px;width:0.8px;height:4.0px"></div><div class="n" style="left:166.7px;top:23.0px;width:0.8px;height:4.0px"></div><div class="n" style="left:168.0px;top:23.0px;width:8.5px;height:4.0px"></div><div class="n" style="left:177.5px;top:23.0px;width:0.8px;height:4.0px"></div><div class="n" style="left:179.0px;top:23.0px;width:0.8px;height:4.0px"></div><div class="n" style="left:180.5px;top:23.0px;width:0.8px;height:4.0px"></div><div class="n" style="left:182.0px;top:23.0px;width:0.8px;height:4.0px"></div><div class="n" style="left:183.3px;top:23.0px;width:8.5px;height:4.0px"></div><div class="n" style="left:192.8px;top:23.0px;width:0.8px;height:4.0px"></div><div class="n" style="left:194.3px;top:23.0px;width:0.8px;height:4.0px"></div><div class="n" style="left:195.8px;top:23.0px;width:0.8px;height:4.0px"></div><div class="n" style="left:197.3px;top:23.0px;width:0.8px;height:4.0px"></div><div class="n" style="left:11.0px;top:57.0px;width:2.0px;height:3.5px"></div><div class="n" style="left:18.6px;top:57.0px;width:1.2px;height:3.5px"></div><div class="n" style="left:26.2px;top:57.0px;width:2.0px;height:3.5px"></div><div class="n" style="left:33.8px;top:57.0px;width:1.2px;height:3.5px"></div><div class="n" style="left:41.4px;top:57.0px;width:2.0px;height:3.5px"></div><div class="n" style="left:49.0px;top:57.0px;width:1.2px;height:3.5px"></div><div class="n" style="left:56.6px;top:57.0px;width:2.0px;height:3.5px"></div><div class="n" style="left:64.2px;top:57.0px;width:1.2px;height:3.5px"></div><div class="n" style="left:71.8px;top:57.0px;width:2.0px;height:3.5px"></div><div class="n" style="left:79.4px;top:57.0px;width:1.2px;height:3.5px"></div><div class="n" style="left:87.0px;top:57.0px;width:2.0px;height:3.5px"></div><div class="n" style="left:94.6px;top:57.0px;width:1.2px;height:3.5px"></div><div class="n" style="left:102.2px;top:57.0px;width:2.0px;height:3.5px"></div><div class="n" style="left:109.8px;top:57.0px;width:1.2px;height:3.5px"></div><div class="n" style="left:117.4px;top:57.0px;width:2.0px;height:3.5px"></div><div class="n" style="left:125.0px;top:57.0px;width:1.2px;height:3.5px"></div><div class="n" style="left:132.6px;top:57.0px;width:2.0px;height:3.5px"></div><div class="n" style="left:140.2px;top:57.0px;width:1.2px;height:3.5px"></div><div class="n" style="left:147.8px;top:57.0px;width:2.0px;height:3.5px"></div><div class="n" style="left:155.4px;top:57.0px;width:1.2px;height:3.5px"></div><div class="n" style="left:163.0px;top:57.0px;width:2.0px;height:3.5px"></div><div class="n" style="left:170.6px;top:57.0px;width:1.2px;height:3.5px"></div><div class="n" style="left:178.2px;top:57.0px;width:2.0px;height:3.5px"></div><div class="n" style="left:185.8px;top:57.0px;width:1.2px;height:3.5px"></div><div class="n" style="left:7.5px;top:62.0px;width:2.0px;height:3.5px"></div><div class="n" style="left:11.3px;top:62.0px;width:1.0px;height:3.5px"></div><div class="n" style="left:15.2px;top:62.0px;width:1.0px;height:3.5px"></div><div class="n" style="left:22.9px;top:62.0px;width:1.0px;height:3.5px"></div><div class="n" style="left:26.8px;top:62.0px;width:1.0px;height:3.5px"></div><div class="n" style="left:30.6px;top:62.0px;width:2.0px;height:3.5px"></div><div class="n" style="left:38.3px;top:62.0px;width:1.0px;height:3.5px"></div><div class="n" style="left:42.1px;top:62.0px;width:2.0px;height:3.5px"></div><div class="n" style="left:46.0px;top:62.0px;width:1.0px;height:3.5px"></div><div class="n" style="left:53.7px;top:62.0px;width:2.0px;height:3.5px"></div><div class="n" style="left:57.6px;top:62.0px;width:1.0px;height:3.5px"></div><div class="n" style="left:61.4px;top:62.0px;width:1.0px;height:3.5px"></div><div class="n" style="left:69.1px;top:62.0px;width:1.0px;height:3.5px"></div><div class="n" style="left:73.0px;top:62.0px;width:1.0px;height:3.5px"></div><div class="n" style="left:76.8px;top:62.0px;width:2.0px;height:3.5px"></div><div class="n" style="left:84.5px;top:62.0px;width:1.0px;height:3.5px"></div><div class="n" style="left:88.4px;top:62.0px;width:2.0px;height:3.5px"></div><div class="n" style="left:92.2px;top:62.0px;width:1.0px;height:3.5px"></div><div class="n" style="left:99.9px;top:62.0px;width:2.0px;height:3.5px"></div><div class="n" style="left:103.8px;top:62.0px;width:1.0px;height:3.5px"></div><div class="n" style="left:107.6px;top:62.0px;width:1.0px;height:3.5px"></div><div class="n" style="left:115.3px;top:62.0px;width:1.0px;height:3.5px"></div><div class="n" style="left:119.2px;top:62.0px;width:1.0px;height:3.5px"></div><div class="n" style="left:123.0px;top:62.0px;width:2.0px;height:3.5px"></div><div class="n" style="left:130.7px;top:62.0px;width:1.0px;height:3.5px"></div><div class="n" style="left:134.6px;top:62.0px;width:2.0px;height:3.5px"></div><div class="n" style="left:138.4px;top:62.0px;width:1.0px;height:3.5px"></div><div class="n" style="left:146.1px;top:62.0px;width:2.0px;height:3.5px"></div><div class="n" style="left:150.0px;top:62.0px;width:1.0px;height:3.5px"></div><div class="n" style="left:153.8px;top:62.0px;width:1.0px;height:3.5px"></div><div class="n" style="left:161.5px;top:62.0px;width:1.0px;height:3.5px"></div><div class="n" style="left:165.3px;top:62.0px;width:1.0px;height:3.5px"></div><div class="n" style="left:169.2px;top:62.0px;width:2.0px;height:3.5px"></div><div class="n" style="left:176.9px;top:62.0px;width:1.0px;height:3.5px"></div><div class="n" style="left:180.8px;top:62.0px;width:2.0px;height:3.5px"></div><div class="n" style="left:184.6px;top:62.0px;width:1.0px;height:3.5px"></div><div class="n" style="left:9.0px;top:44.0px;width:1.0px;height:3.0px"></div><div class="n" style="left:10.0px;top:48.0px;width:1.0px;height:3.0px"></div><div class="n" style="left:11.0px;top:52.0px;width:2.0px;height:3.5px"></div><div class="n" style="left:9.0px;top:56.0px;width:2.0px;height:3.5px"></div><div style="left:3px;top:4px;font-size:12px;font-weight:bold;color:#33414c;line-height:12px;white-space:nowrap;letter-spacing:-0.2px">DrumKit 1</div><div style="left:60.2px;top:0;width:1px;height:100%;background:rgba(40,110,170,0.45)"></div><div style="left:121.4px;top:0;width:1px;height:100%;background:rgba(40,110,170,0.45)"></div><div style="left:182.6px;top:0;width:1px;height:100%;background:rgba(40,110,170,0.45)"></div></div>
<div class="part" style="left:490.3px;top:452px;width:122.37px;height:99px;"><div class="n" style="left:2.0px;top:24.0px;width:1.0px;height:3.5px"></div><div class="n" style="left:4.1px;top:24.0px;width:1.0px;height:3.5px"></div><div class="n" style="left:6.2px;top:24.0px;width:1.0px;height:3.5px"></div><div class="n" style="left:8.3px;top:24.0px;width:1.0px;height:3.5px"></div><div class="n" style="left:10.4px;top:24.0px;width:1.0px;height:3.5px"></div><div class="n" style="left:12.5px;top:24.0px;width:1.0px;height:3.5px"></div><div class="n" style="left:14.6px;top:24.0px;width:1.0px;height:3.5px"></div><div class="n" style="left:17.3px;top:24.0px;width:1.0px;height:3.5px"></div><div class="n" style="left:19.4px;top:24.0px;width:1.0px;height:3.5px"></div><div class="n" style="left:21.5px;top:24.0px;width:1.0px;height:3.5px"></div><div class="n" style="left:23.6px;top:24.0px;width:1.0px;height:3.5px"></div><div class="n" style="left:25.7px;top:24.0px;width:1.0px;height:3.5px"></div><div class="n" style="left:27.8px;top:24.0px;width:1.0px;height:3.5px"></div><div class="n" style="left:29.9px;top:24.0px;width:1.0px;height:3.5px"></div><div class="n" style="left:32.6px;top:24.0px;width:1.0px;height:3.5px"></div><div class="n" style="left:34.7px;top:24.0px;width:1.0px;height:3.5px"></div><div class="n" style="left:36.8px;top:24.0px;width:1.0px;height:3.5px"></div><div class="n" style="left:38.9px;top:24.0px;width:1.0px;height:3.5px"></div><div class="n" style="left:41.0px;top:24.0px;width:1.0px;height:3.5px"></div><div class="n" style="left:43.1px;top:24.0px;width:1.0px;height:3.5px"></div><div class="n" style="left:45.2px;top:24.0px;width:1.0px;height:3.5px"></div><div class="n" style="left:47.9px;top:24.0px;width:1.0px;height:3.5px"></div><div class="n" style="left:50.0px;top:24.0px;width:1.0px;height:3.5px"></div><div class="n" style="left:52.1px;top:24.0px;width:1.0px;height:3.5px"></div><div class="n" style="left:54.2px;top:24.0px;width:1.0px;height:3.5px"></div><div class="n" style="left:56.3px;top:24.0px;width:1.0px;height:3.5px"></div><div class="n" style="left:58.4px;top:24.0px;width:1.0px;height:3.5px"></div><div class="n" style="left:60.5px;top:24.0px;width:1.0px;height:3.5px"></div><div class="n" style="left:63.2px;top:24.0px;width:1.0px;height:3.5px"></div><div class="n" style="left:65.3px;top:24.0px;width:1.0px;height:3.5px"></div><div class="n" style="left:67.4px;top:24.0px;width:1.0px;height:3.5px"></div><div class="n" style="left:69.5px;top:24.0px;width:1.0px;height:3.5px"></div><div class="n" style="left:71.6px;top:24.0px;width:1.0px;height:3.5px"></div><div class="n" style="left:73.7px;top:24.0px;width:1.0px;height:3.5px"></div><div class="n" style="left:75.8px;top:24.0px;width:1.0px;height:3.5px"></div><div class="n" style="left:78.5px;top:24.0px;width:1.0px;height:3.5px"></div><div class="n" style="left:80.6px;top:24.0px;width:1.0px;height:3.5px"></div><div class="n" style="left:82.7px;top:24.0px;width:1.0px;height:3.5px"></div><div class="n" style="left:84.8px;top:24.0px;width:1.0px;height:3.5px"></div><div class="n" style="left:86.9px;top:24.0px;width:1.0px;height:3.5px"></div><div class="n" style="left:89.0px;top:24.0px;width:1.0px;height:3.5px"></div><div class="n" style="left:91.1px;top:24.0px;width:1.0px;height:3.5px"></div><div class="n" style="left:93.8px;top:24.0px;width:1.0px;height:3.5px"></div><div class="n" style="left:95.9px;top:24.0px;width:1.0px;height:3.5px"></div><div class="n" style="left:98.0px;top:24.0px;width:1.0px;height:3.5px"></div><div class="n" style="left:100.1px;top:24.0px;width:1.0px;height:3.5px"></div><div class="n" style="left:102.2px;top:24.0px;width:1.0px;height:3.5px"></div><div class="n" style="left:104.3px;top:24.0px;width:1.0px;height:3.5px"></div><div class="n" style="left:106.4px;top:24.0px;width:1.0px;height:3.5px"></div><div class="n" style="left:109.1px;top:24.0px;width:1.0px;height:3.5px"></div><div class="n" style="left:111.2px;top:24.0px;width:1.0px;height:3.5px"></div><div class="n" style="left:113.3px;top:24.0px;width:1.0px;height:3.5px"></div><div class="n" style="left:115.4px;top:24.0px;width:1.0px;height:3.5px"></div><div class="n" style="left:117.5px;top:24.0px;width:1.0px;height:3.5px"></div><div class="n" style="left:119.6px;top:24.0px;width:1.0px;height:3.5px"></div><div class="n" style="left:121.7px;top:24.0px;width:1.0px;height:3.5px"></div><div class="n" style="left:2.0px;top:39.0px;width:2.0px;height:3.0px"></div><div class="n" style="left:5.8px;top:40.0px;width:1.0px;height:3.0px"></div><div class="n" style="left:9.6px;top:40.0px;width:2.0px;height:3.0px"></div><div class="n" style="left:13.4px;top:40.0px;width:1.0px;height:3.0px"></div><div class="n" style="left:17.2px;top:39.0px;width:2.0px;height:3.0px"></div><div class="n" style="left:21.0px;top:40.0px;width:1.0px;height:3.0px"></div><div class="n" style="left:24.8px;top:40.0px;width:2.0px;height:3.0px"></div><div class="n" style="left:28.6px;top:40.0px;width:1.0px;height:3.0px"></div><div class="n" style="left:32.4px;top:39.0px;width:2.0px;height:3.0px"></div><div class="n" style="left:36.2px;top:40.0px;width:1.0px;height:3.0px"></div><div class="n" style="left:40.0px;top:40.0px;width:2.0px;height:3.0px"></div><div class="n" style="left:43.8px;top:40.0px;width:1.0px;height:3.0px"></div><div class="n" style="left:47.6px;top:39.0px;width:2.0px;height:3.0px"></div><div class="n" style="left:51.4px;top:40.0px;width:1.0px;height:3.0px"></div><div class="n" style="left:55.2px;top:40.0px;width:2.0px;height:3.0px"></div><div class="n" style="left:59.0px;top:40.0px;width:1.0px;height:3.0px"></div><div class="n" style="left:62.8px;top:39.0px;width:2.0px;height:3.0px"></div><div class="n" style="left:66.6px;top:40.0px;width:1.0px;height:3.0px"></div><div class="n" style="left:70.4px;top:40.0px;width:2.0px;height:3.0px"></div><div class="n" style="left:74.2px;top:40.0px;width:1.0px;height:3.0px"></div><div class="n" style="left:78.0px;top:39.0px;width:2.0px;height:3.0px"></div><div class="n" style="left:81.8px;top:40.0px;width:1.0px;height:3.0px"></div><div class="n" style="left:85.6px;top:40.0px;width:2.0px;height:3.0px"></div><div class="n" style="left:89.4px;top:40.0px;width:1.0px;height:3.0px"></div><div class="n" style="left:93.2px;top:39.0px;width:2.0px;height:3.0px"></div><div class="n" style="left:97.0px;top:40.0px;width:1.0px;height:3.0px"></div><div class="n" style="left:100.8px;top:40.0px;width:2.0px;height:3.0px"></div><div class="n" style="left:104.6px;top:40.0px;width:1.0px;height:3.0px"></div><div class="n" style="left:108.4px;top:39.0px;width:2.0px;height:3.0px"></div><div class="n" style="left:112.2px;top:40.0px;width:1.0px;height:3.0px"></div><div class="n" style="left:116.0px;top:40.0px;width:2.0px;height:3.0px"></div><div class="n" style="left:2.0px;top:50.0px;width:1.0px;height:3.0px"></div><div class="n" style="left:4.4px;top:50.0px;width:1.0px;height:3.0px"></div><div class="n" style="left:9.2px;top:50.0px;width:1.0px;height:3.0px"></div><div class="n" style="left:11.6px;top:50.0px;width:1.0px;height:3.0px"></div><div class="n" style="left:16.4px;top:50.0px;width:1.0px;height:3.0px"></div><div class="n" style="left:18.8px;top:50.0px;width:1.0px;height:3.0px"></div><div class="n" style="left:23.6px;top:50.0px;width:1.0px;height:3.0px"></div><div class="n" style="left:26.0px;top:50.0px;width:1.0px;height:3.0px"></div><div class="n" style="left:30.8px;top:50.0px;width:1.0px;height:3.0px"></div><div class="n" style="left:33.2px;top:50.0px;width:1.0px;height:3.0px"></div><div class="n" style="left:38.0px;top:50.0px;width:1.0px;height:3.0px"></div><div class="n" style="left:40.4px;top:50.0px;width:1.0px;height:3.0px"></div><div class="n" style="left:45.2px;top:50.0px;width:1.0px;height:3.0px"></div><div class="n" style="left:47.6px;top:50.0px;width:1.0px;height:3.0px"></div><div class="n" style="left:52.4px;top:50.0px;width:1.0px;height:3.0px"></div><div class="n" style="left:54.8px;top:50.0px;width:1.0px;height:3.0px"></div><div class="n" style="left:59.6px;top:50.0px;width:1.0px;height:3.0px"></div><div class="n" style="left:62.0px;top:50.0px;width:1.0px;height:3.0px"></div><div class="n" style="left:66.8px;top:50.0px;width:1.0px;height:3.0px"></div><div class="n" style="left:69.2px;top:50.0px;width:1.0px;height:3.0px"></div><div class="n" style="left:74.0px;top:50.0px;width:1.0px;height:3.0px"></div><div class="n" style="left:76.4px;top:50.0px;width:1.0px;height:3.0px"></div><div class="n" style="left:81.2px;top:50.0px;width:1.0px;height:3.0px"></div><div class="n" style="left:83.6px;top:50.0px;width:1.0px;height:3.0px"></div><div class="n" style="left:88.4px;top:50.0px;width:1.0px;height:3.0px"></div><div class="n" style="left:90.8px;top:50.0px;width:1.0px;height:3.0px"></div><div class="n" style="left:95.6px;top:50.0px;width:1.0px;height:3.0px"></div><div class="n" style="left:98.0px;top:50.0px;width:1.0px;height:3.0px"></div><div class="n" style="left:102.8px;top:50.0px;width:1.0px;height:3.0px"></div><div class="n" style="left:105.2px;top:50.0px;width:1.0px;height:3.0px"></div><div class="n" style="left:110.0px;top:50.0px;width:1.0px;height:3.0px"></div><div class="n" style="left:112.4px;top:50.0px;width:1.0px;height:3.0px"></div><div class="n" style="left:43.0px;top:10.0px;width:0.8px;height:3.0px"></div><div class="n" style="left:58.3px;top:10.0px;width:0.8px;height:3.0px"></div><div class="n" style="left:73.6px;top:10.0px;width:0.8px;height:3.0px"></div><div class="n" style="left:88.9px;top:10.0px;width:0.8px;height:3.0px"></div><div style="left:3px;top:4px;font-size:12px;font-weight:bold;color:#33414c;line-height:12px;white-space:nowrap;letter-spacing:-0.2px">DrumKit 1</div><div style="left:60.2px;top:0;width:1px;height:100%;background:rgba(40,110,170,0.45)"></div></div>
<div class="partv" style="left:490.3px;top:554px;width:244.74px;height:99px;"><div class="nv" style="left:2.0px;top:46.0px;width:11.5px;height:4.0px"></div><div class="nv" style="left:13.5px;top:39.0px;width:6.5px;height:4.0px"></div><div class="nv" style="left:20.0px;top:32.0px;width:11.0px;height:4.0px"></div><div class="nv" style="left:31.0px;top:46.0px;width:13.4px;height:4.0px"></div><div class="nv" style="left:44.4px;top:50.0px;width:5.6px;height:4.0px"></div><div class="nv" style="left:50.0px;top:46.0px;width:11.2px;height:4.0px"></div><div class="nv" style="left:63.2px;top:46.0px;width:11.5px;height:4.0px"></div><div class="nv" style="left:74.7px;top:39.0px;width:6.5px;height:4.0px"></div><div class="nv" style="left:81.2px;top:32.0px;width:11.0px;height:4.0px"></div><div class="nv" style="left:92.2px;top:46.0px;width:13.4px;height:4.0px"></div><div class="nv" style="left:105.6px;top:50.0px;width:5.6px;height:4.0px"></div><div class="nv" style="left:111.2px;top:46.0px;width:11.2px;height:4.0px"></div><div class="nv" style="left:124.4px;top:46.0px;width:11.5px;height:4.0px"></div><div class="nv" style="left:135.9px;top:39.0px;width:6.5px;height:4.0px"></div><div class="nv" style="left:142.4px;top:32.0px;width:11.0px;height:4.0px"></div><div class="nv" style="left:153.4px;top:46.0px;width:13.4px;height:4.0px"></div><div class="nv" style="left:166.8px;top:50.0px;width:5.6px;height:4.0px"></div><div class="nv" style="left:172.4px;top:46.0px;width:11.2px;height:4.0px"></div><div class="nv" style="left:185.6px;top:46.0px;width:11.5px;height:4.0px"></div><div class="nv" style="left:197.1px;top:39.0px;width:6.5px;height:4.0px"></div><div class="nv" style="left:203.6px;top:32.0px;width:11.0px;height:4.0px"></div><div class="nv" style="left:214.6px;top:46.0px;width:13.4px;height:4.0px"></div><div class="nv" style="left:228.0px;top:50.0px;width:5.6px;height:4.0px"></div><div class="nv" style="left:233.6px;top:46.0px;width:9.1px;height:4.0px"></div><div style="left:3px;top:3px;width:72px;height:10px;border-bottom:1.5px solid #2a3a48"></div><div style="left:75px;top:3px;font-size:12px;font-weight:bold;color:#33414c;line-height:12px;white-space:nowrap;letter-spacing:-0.3px">LazySnake</div><div style="left:60.2px;top:0;width:1px;height:100%;background:rgba(40,110,170,0.45)"></div><div style="left:121.4px;top:0;width:1px;height:100%;background:rgba(40,110,170,0.45)"></div><div style="left:182.6px;top:0;width:1px;height:100%;background:rgba(40,110,170,0.45)"></div></div>
<div style="left:698px;top:38px;width:2px;height:848px;background:#3a2c22"></div>
<div style="left:698px;top:64px;width:2px;height:79px;background:#c47848"></div>
<div style="left:698px;top:146px;width:2px;height:79px;background:#c47848"></div>
<div style="left:698px;top:228px;width:2px;height:119px;background:#c47848"></div>
<div style="left:698px;top:554px;width:2px;height:99px;background:#c47848"></div>
<div style="left:698px;top:38px;width:2px;height:25px;background:#c47848"></div>
<div style="left:1645px;top:63px;width:15px;height:823px;background:linear-gradient(90deg,#9aa3a9,#c6ccd0 50%,#a6aeb4)"></div>
<div style="left:1645px;top:63px;width:15px;height:15px;background:linear-gradient(180deg,#e4e8ea,#c0c6ca);border:1px solid #808a90"><div style="left:3px;top:6px;width:8px;height:1.5px;background:#222;transform:rotate(-40deg)"></div></div>
<div style="left:1652px;top:82px;width:1px;height:40px;background:#556"></div>
<div style="left:1646px;top:121px;width:14px;height:17px;background:#222;clip-path:polygon(100% 0,100% 100%,0 50%);"></div>
<div style="left:1648px;top:123.5px;width:11px;height:12.0px;background:linear-gradient(180deg,#e0e4e6,#8a9298);clip-path:polygon(100% 0,100% 100%,0 50%);"></div>
<div style="left:1645px;top:139px;width:15px;height:16px;background:linear-gradient(180deg,#e4e8ea,#c0c6ca);border:1px solid #808a90"><div style="left:3px;top:4px;width:7px;height:7px;border-left:1.5px solid #222;border-top:1.5px solid #222;transform:rotate(45deg)"></div></div>
<div style="left:1645px;top:776px;width:15px;height:15px;background:linear-gradient(180deg,#e4e8ea,#c0c6ca);border:1px solid #808a90"><div style="left:3px;top:1px;width:7px;height:7px;border-right:1.5px solid #222;border-bottom:1.5px solid #222;transform:rotate(45deg)"></div></div>
<div style="left:1645px;top:794px;width:15px;height:14px;background:linear-gradient(180deg,#dfe3e6,#b8c0c4);border:1px solid #808a90"><div style="left:4px;top:5px;width:6px;height:4px;background:#222;clip-path:polygon(0 0,100% 0,50% 100%)"></div></div>
<div style="left:1645px;top:808px;width:15px;height:77px;background:linear-gradient(90deg,#a0a8ae,#d0d4d8 50%,#a8b0b6)"></div>
<div style="left:1652px;top:818px;width:1px;height:60px;background:#445"></div>
<div style="left:1647px;top:832px;width:12px;height:14px;background:#555;clip-path:polygon(100% 0,100% 100%,0 50%);"></div>
<div style="left:1648px;top:834px;width:10px;height:10px;background:#a8aeb4;clip-path:polygon(100% 0,100% 100%,0 50%);"></div>
<div style="left:483px;top:886px;width:1162px;height:15px;background:linear-gradient(180deg,#b4bcc2,#d2d8dc 50%,#b0b8be)"></div>
<div style="left:484px;top:887px;width:14px;height:13px;background:linear-gradient(180deg,#d8dde0,#b0b8be);border:1px solid #8a949a"><div style="left:4px;top:3px;width:6px;height:6px;border-left:1.5px solid #222;border-bottom:1.5px solid #222;transform:rotate(45deg)"></div></div>
<div style="left:500px;top:887px;width:261px;height:13px;background:linear-gradient(180deg,#7d8990,#4f5c64 60%,#5a666e);border:1px solid #2a343a;border-radius:3px"></div>
<div style="left:1535px;top:887px;width:16px;height:13px;background:linear-gradient(180deg,#d8dde0,#b0b8be);border:1px solid #8a949a"><div style="left:3px;top:3px;width:6px;height:6px;border-right:1.5px solid #222;border-top:1.5px solid #222;transform:rotate(45deg)"></div></div>
<div style="left:1553px;top:887px;width:92px;height:13px;background:linear-gradient(180deg,#d0d6da,#a8b0b6);border:1px solid #7a848a"></div>
<div style="left:1554px;top:888px;width:12px;height:11px;border-right:1px solid #7a848a"><div style="left:3px;top:4px;width:6px;height:4px;background:#222;clip-path:polygon(0 0,100% 0,50% 100%)"></div></div>
<div style="left:1568px;top:886px;white-space:nowrap;font-size:10px;color:#222">–</div>
<div style="left:1578px;top:893px;width:57px;height:1px;background:#445"></div>
<div style="left:1594px;top:887px;width:14px;height:12px;background:#555;clip-path:polygon(50% 0,100% 100%,0 100%)"></div>
<div style="left:1595px;top:889px;width:12px;height:9px;background:#a0a6ac;clip-path:polygon(50% 0,100% 100%,0 100%)"></div>
<div style="left:1637px;top:886px;white-space:nowrap;font-size:10px;font-weight:bold;color:#222">+</div>
<div style="left:1645px;top:886px;width:15px;height:15px;background:#e8ecee"></div>
<div style="left:1675px;top:0px;width:1861px;height:924px;background:#333333"></div>
<div style="left:1675px;top:0px;width:1861px;height:924px;background:#333333"></div>
<div style="left:1675px;top:30px;width:1px;height:633px;background:#555"></div>
<div style="left:1676px;top:30px;width:205px;height:633px;background:#a7b3b3"></div>
<div style="left:1881px;top:30px;width:17px;height:633px;background:#bec8c8"></div>
<div style="left:1898px;top:30px;width:9px;height:633px;background:#2c2c2c"></div>
<div style="left:1676px;top:-40.85px;width:205px;height:90.85px;background:linear-gradient(180deg,#b6c2c2 0%,#a9b5b5 40%,#97a4a4 100%)"></div>
<div style="left:1881px;top:-40.85px;width:17px;height:90.85px;background:linear-gradient(180deg,#c6d0d0,#b2bcbc)"></div>
<div style="left:1676px;top:-42.85px;width:222px;height:1.0px;background:#4e5858"></div>
<div style="left:1676px;top:-41.85px;width:222px;height:1.0px;background:#d0dada"></div>
<div style="left:1683px;top:-26.35px;width:92px;height:16.5px;background:#3c3e3e;border:1px solid #232525;border-radius:8px 2px 2px 8px"></div>
<div style="left:1683.5px;top:-25.85px;width:16.0px;height:15.5px;border-radius:50%;background:radial-gradient(circle,#c87878 0 1.8px,#7a2626 2.3px 3.6px,#c07070 4px 4.9px,#6a2020 5.4px);box-shadow:0 0 0 1px #2a2a2a"></div>
<div style="left:1753px;top:-26.35px;width:22px;height:16.5px;background:#1e2020;border-radius:0 2px 2px 0"><span style="position:absolute;left:3px;top:2px;font-size:11px;color:#e8e8e8">I/O</span></div>
<div style="left:1781.5px;top:-26.35px;width:49.5px;height:16.5px;background:linear-gradient(180deg,#3e4242,#2e3232);border:1px solid #222;border-radius:2px"></div>
<div style="left:1784px;top:-18.35px;width:44px;height:1.0px;background:#5a5e5e"></div>
<div style="left:1837.4px;top:-26.35px;width:16.2px;height:16.5px;background:linear-gradient(180deg,#f4f4f4,#cfcfcf);border:1px solid #6a7070;border-radius:2px"><span style="position:absolute;left:3px;top:1px;font-size:12px;color:#a01010">M</span></div>
<div style="left:1857.7px;top:-26.35px;width:15.7px;height:16.5px;background:linear-gradient(180deg,#f4f4f4,#cfcfcf);border:1px solid #6a7070;border-radius:2px"><span style="position:absolute;left:3.5px;top:1px;font-size:11.5px;color:#6a6a10">S</span></div>
<div style="left:1683px;top:-2.85px;width:92px;height:15.5px;background:linear-gradient(180deg,#444848,#303434);border:1px solid #1e2020;border-radius:2px"></div>
<div style="left:1694px;top:4.15px;width:68px;height:2.0px;background:#1e2020;border-bottom:1px solid #6a6e6e"></div>
<div style="left:1730px;top:-3.35px;width:24px;height:16.5px;background:linear-gradient(90deg,#b8b8b8,#f8f8f8 30%,#e8e8e8 70%,#a8a8a8);border-radius:2px;box-shadow:0 1px 2px #000"><div style="left:11px;top:3px;width:1px;height:10px;background:#222"></div></div>
<div style="left:1789px;top:-1.35px;width:41px;height:13.0px;background:#7e8c8c;border-radius:2px"><span style="position:absolute;right:2px;top:0px;font-size:10.5px;color:#e4ecec;line-height:13px">center</span></div>
<div style="left:1781.5px;top:-3.35px;width:15.5px;height:16.0px;border-radius:50%;background:radial-gradient(circle at 45% 35%,#fafafa,#c8c8c8 60%,#8a8a8a);border:1px solid #5a6060"><div style="left:6.5px;top:1px;width:1px;height:6px;background:#333"></div></div>
<div style="left:1837.4px;top:-3.35px;width:36.0px;height:16.5px;"></div>
<div style="left:1837.4px;top:-3.35px;width:36.0px;height:16.5px;background:linear-gradient(180deg,#6cd47a,#3fae50);border:1px solid #2a5a30;border-radius:2px"><span style="position:absolute;left:4px;top:2px;font-size:11px;line-height:12px;color:#143c18;letter-spacing:3px">FX</span><div style="left:23px;top:0;width:1px;height:100%;background:#2a6a30"></div><svg style="position:absolute;left:24px;top:2px" width="11" height="11"><path d="M3.5,3.3 A3.6,3.6 0 1 0 7.5,3.3" fill="none" stroke="#143c18" stroke-width="1.2"/><line x1="5.5" y1="1.1" x2="5.5" y2="5.5" stroke="#143c18" stroke-width="1.2"/></svg></div>
<div style="left:1683px;top:19.15px;width:14.4px;height:15.0px;background:linear-gradient(180deg,#b8c4c4,#9aa6a6);border:1px solid #5e6a6a;border-radius:1px"><svg width="14" height="14"><polyline points="2,10 6,4 11,9" fill="none" stroke="#222" stroke-width="1.2"/></svg></div>
<div style="left:1704px;top:19.15px;width:15px;height:15.0px;border-radius:50%;border:1px solid #6a7676;background:#a9b5b5"><svg width="13" height="13" style="position:absolute;left:0;top:0"><circle cx="6.5" cy="6.5" r="3.5" fill="none" stroke="#6a7474" stroke-width="1.2"/><line x1="3" y1="10.5" x2="10" y2="2.5" stroke="#6a7474" stroke-width="1.2"/></svg></div>
<div style="left:1725px;top:19.15px;width:49.5px;height:15.0px;background:#8a9898;border:1px solid #7a8888;border-radius:2px"><span style="position:absolute;left:4px;top:1px;font-size:11.5px;color:#e0e8e8;line-height:13px">MIDI: A</span></div>
<div style="left:1762px;top:19.65px;width:14px;height:14.0px;border-radius:50%;background:radial-gradient(circle,#c0cccc,#8a9898);border:1px solid #6a7878"><div style="left:3px;top:5px;width:7px;height:4px;background:#334;clip-path:polygon(0 0,100% 0,50% 100%)"></div></div>
<div style="left:1837.4px;top:19.15px;width:36.0px;height:15.0px;background:#8a9898;border:1px solid #6a7878;border-radius:2px"><span style="position:absolute;left:16.5px;top:2px;font-size:8.5px;font-weight:bold;color:#dde6e6;line-height:11px;white-space:nowrap;transform:scaleX(0.7);transform-origin:0 0">IN<span style="color:#a8b4b4">OUT</span></span></div>
<div style="left:1837.4px;top:19.15px;width:15.6px;height:15.0px;background:linear-gradient(180deg,#4cc25c,#2e9a3e);border:1px solid #4a6a50;border-radius:2px"><div style="left:4px;top:3px;width:7px;height:8px;background:#0a3010;clip-path:polygon(0 0,100% 50%,0 100%)"></div></div>
<div style="left:1885px;top:40.15px;width:10px;height:7.0px;background:#a8b2b2;border-radius:1px"></div>
<div style="left:1676px;top:52.0px;width:205px;height:90.85px;background:linear-gradient(180deg,#b6c2c2 0%,#a9b5b5 40%,#97a4a4 100%)"></div>
<div style="left:1881px;top:52.0px;width:17px;height:90.85px;background:linear-gradient(180deg,#c6d0d0,#b2bcbc)"></div>
<div style="left:1676px;top:50.0px;width:222px;height:1.0px;background:#4e5858"></div>
<div style="left:1676px;top:51.0px;width:222px;height:1.0px;background:#d0dada"></div>
<div style="left:1683px;top:66.5px;width:92px;height:16.5px;background:#3c3e3e;border:1px solid #232525;border-radius:8px 2px 2px 8px"></div>
<div style="left:1683.5px;top:67.0px;width:16.0px;height:15.5px;border-radius:50%;background:radial-gradient(circle,#c87878 0 1.8px,#7a2626 2.3px 3.6px,#c07070 4px 4.9px,#6a2020 5.4px);box-shadow:0 0 0 1px #2a2a2a"></div>
<div style="left:1753px;top:66.5px;width:22px;height:16.5px;background:#1e2020;border-radius:0 2px 2px 0"><span style="position:absolute;left:3px;top:2px;font-size:11px;color:#e8e8e8">I/O</span></div>
<div style="left:1702px;top:67.5px;white-space:nowrap;--jpx:0.82;font-size:13px;color:#c8cccc;line-height:15px;max-width:50px;overflow:hidden">Drum..1</div>
<div style="left:1781.5px;top:66.5px;width:49.5px;height:16.5px;background:linear-gradient(180deg,#3e4242,#2e3232);border:1px solid #222;border-radius:2px"></div>
<div style="left:1784px;top:74.5px;width:44px;height:1.0px;background:#5a5e5e"></div>
<div style="left:1817px;top:69.5px;width:11px;height:11.0px;background:#d03030;border-radius:1px"><span style="position:absolute;left:1px;top:0px;font-size:9px;font-weight:bold;color:#fdd">M</span></div>
<div style="left:1837.4px;top:66.5px;width:16.2px;height:16.5px;background:linear-gradient(180deg,#f07070,#d84848);border:1px solid #6a7070;border-radius:2px"><span style="position:absolute;left:3px;top:1px;font-size:12px;color:#a01010">M</span></div>
<div style="left:1857.7px;top:66.5px;width:15.7px;height:16.5px;background:linear-gradient(180deg,#f4f4f4,#cfcfcf);border:1px solid #6a7070;border-radius:2px"><span style="position:absolute;left:3.5px;top:1px;font-size:11.5px;color:#6a6a10">S</span></div>
<div style="left:1683px;top:90.0px;width:92px;height:15.5px;background:linear-gradient(180deg,#444848,#303434);border:1px solid #1e2020;border-radius:2px"></div>
<div style="left:1694px;top:97.0px;width:68px;height:2.0px;background:#1e2020;border-bottom:1px solid #6a6e6e"></div>
<div style="left:1719px;top:89.5px;width:24px;height:16.5px;background:linear-gradient(90deg,#b8b8b8,#f8f8f8 30%,#e8e8e8 70%,#a8a8a8);border-radius:2px;box-shadow:0 1px 2px #000"><div style="left:11px;top:3px;width:1px;height:10px;background:#222"></div></div>
<div style="left:1789px;top:91.5px;width:41px;height:13.0px;background:#7e8c8c;border-radius:2px"><span style="position:absolute;right:2px;top:0px;font-size:10.5px;color:#e4ecec;line-height:13px">center</span></div>
<div style="left:1781.5px;top:89.5px;width:15.5px;height:16.0px;border-radius:50%;background:radial-gradient(circle at 45% 35%,#fafafa,#c8c8c8 60%,#8a8a8a);border:1px solid #5a6060"><div style="left:6.5px;top:1px;width:1px;height:6px;background:#333"></div></div>
<div style="left:1837.4px;top:89.5px;width:36.0px;height:16.5px;"></div>
<div style="left:1837.4px;top:89.5px;width:36.0px;height:16.5px;background:linear-gradient(180deg,#6cd47a,#3fae50);border:1px solid #2a5a30;border-radius:2px"><span style="position:absolute;left:4px;top:2px;font-size:11px;line-height:12px;color:#143c18;letter-spacing:3px">FX</span><div style="left:23px;top:0;width:1px;height:100%;background:#2a6a30"></div><svg style="position:absolute;left:24px;top:2px" width="11" height="11"><path d="M3.5,3.3 A3.6,3.6 0 1 0 7.5,3.3" fill="none" stroke="#143c18" stroke-width="1.2"/><line x1="5.5" y1="1.1" x2="5.5" y2="5.5" stroke="#143c18" stroke-width="1.2"/></svg></div>
<div style="left:1683px;top:112.0px;width:14.4px;height:15.0px;background:linear-gradient(180deg,#b8c4c4,#9aa6a6);border:1px solid #5e6a6a;border-radius:1px"><svg width="14" height="14"><polyline points="2,10 6,4 11,9" fill="none" stroke="#222" stroke-width="1.2"/></svg></div>
<div style="left:1704px;top:112.0px;width:15px;height:15.0px;border-radius:50%;border:1px solid #6a7676;background:#a9b5b5"><svg width="13" height="13" style="position:absolute;left:0;top:0"><circle cx="6.5" cy="6.5" r="3.5" fill="none" stroke="#6a7474" stroke-width="1.2"/><line x1="3" y1="10.5" x2="10" y2="2.5" stroke="#6a7474" stroke-width="1.2"/></svg></div>
<div style="left:1725px;top:112.0px;width:49.5px;height:15.0px;background:#8a9898;border:1px solid #7a8888;border-radius:2px"><span style="position:absolute;left:4px;top:1px;font-size:11.5px;color:#e0e8e8;line-height:13px">MIDI: A</span></div>
<div style="left:1762px;top:112.5px;width:14px;height:14.0px;border-radius:50%;background:radial-gradient(circle,#c0cccc,#8a9898);border:1px solid #6a7878"><div style="left:3px;top:5px;width:7px;height:4px;background:#334;clip-path:polygon(0 0,100% 0,50% 100%)"></div></div>
<div style="left:1837.4px;top:112.0px;width:36.0px;height:15.0px;background:#8a9898;border:1px solid #6a7878;border-radius:2px"><span style="position:absolute;left:16.5px;top:2px;font-size:8.5px;font-weight:bold;color:#dde6e6;line-height:11px;white-space:nowrap;transform:scaleX(0.7);transform-origin:0 0">IN<span style="color:#a8b4b4">OUT</span></span></div>
<div style="left:1837.4px;top:112.0px;width:15.6px;height:15.0px;background:linear-gradient(180deg,#4cc25c,#2e9a3e);border:1px solid #4a6a50;border-radius:2px"><div style="left:4px;top:3px;width:7px;height:8px;background:#0a3010;clip-path:polygon(0 0,100% 50%,0 100%)"></div></div>
<div style="left:1885px;top:133.0px;width:10px;height:7.0px;background:#a8b2b2;border-radius:1px"></div>
<div style="left:1883px;top:88.0px;white-space:nowrap;font-size:17px;color:#2a2e2e;line-height:18px">2</div>
<div style="left:1676px;top:144.85px;width:205px;height:90.85px;background:linear-gradient(180deg,#b6c2c2 0%,#a9b5b5 40%,#97a4a4 100%)"></div>
<div style="left:1881px;top:144.85px;width:17px;height:90.85px;background:linear-gradient(180deg,#c6d0d0,#b2bcbc)"></div>
<div style="left:1676px;top:142.85px;width:222px;height:1.0px;background:#4e5858"></div>
<div style="left:1676px;top:143.85px;width:222px;height:1.0px;background:#d0dada"></div>
<div style="left:1683px;top:159.35px;width:92px;height:16.5px;background:#3c3e3e;border:1px solid #232525;border-radius:8px 2px 2px 8px"></div>
<div style="left:1683.5px;top:159.85px;width:16.0px;height:15.5px;border-radius:50%;background:radial-gradient(circle,#c87878 0 1.8px,#7a2626 2.3px 3.6px,#c07070 4px 4.9px,#6a2020 5.4px);box-shadow:0 0 0 1px #2a2a2a"></div>
<div style="left:1753px;top:159.35px;width:22px;height:16.5px;background:#1e2020;border-radius:0 2px 2px 0"><span style="position:absolute;left:3px;top:2px;font-size:11px;color:#e8e8e8">I/O</span></div>
<div style="left:1702px;top:160.35px;white-space:nowrap;--jpx:0.82;font-size:13px;color:#c8cccc;line-height:15px;max-width:50px;overflow:hidden"><svg width="40.5" height="10.7" style="display:inline-block;vertical-align:-1.0px;overflow:visible;position:static"><path transform="translate(0.53,0) scale(0.874,1.066)" d="M5,0.3 L9.5,0.3 L9.5,1 Q7,2.5 7,5 Q7,7.5 9.5,9 L9.5,9.7 L5,9.7 Z" fill="#c8cccc"/><path transform="translate(10.66,0) scale(0.874,1.066)" d="M2.5,1 L2.5,9 L9,4" fill="none" stroke="#c8cccc" stroke-width="1.01" stroke-linecap="round" stroke-linejoin="round"/><path transform="translate(20.79,0) scale(0.874,1.066)" d="M7.5,0.8 L1.5,6 M5,3.8 L5,9.8" fill="none" stroke="#c8cccc" stroke-width="1.01" stroke-linecap="round" stroke-linejoin="round"/><path transform="translate(30.91,0) scale(0.874,1.066)" d="M1.5,1.5 L3.2,2.8 M1,4.5 L2.7,5.8 M2,9.5 Q7,7.5 9,2 M7.8,0.2 L8.5,1.6 M9.3,0.2 L10,1.6" fill="none" stroke="#c8cccc" stroke-width="1.01" stroke-linecap="round" stroke-linejoin="round"/></svg>·</div>
<div style="left:1781.5px;top:159.35px;width:49.5px;height:16.5px;background:linear-gradient(180deg,#3e4242,#2e3232);border:1px solid #222;border-radius:2px"></div>
<div style="left:1784px;top:167.35px;width:44px;height:1.0px;background:#5a5e5e"></div>
<div style="left:1806px;top:160.35px;white-space:nowrap;font-size:11px;color:#b8bcbc;line-height:13px">-inf</div>
<div style="left:1837.4px;top:159.35px;width:16.2px;height:16.5px;background:linear-gradient(180deg,#f4f4f4,#cfcfcf);border:1px solid #6a7070;border-radius:2px"><span style="position:absolute;left:3px;top:1px;font-size:12px;color:#a01010">M</span></div>
<div style="left:1857.7px;top:159.35px;width:15.7px;height:16.5px;background:linear-gradient(180deg,#f4f4f4,#cfcfcf);border:1px solid #6a7070;border-radius:2px"><span style="position:absolute;left:3.5px;top:1px;font-size:11.5px;color:#6a6a10">S</span></div>
<div style="left:1683px;top:182.85px;width:92px;height:15.5px;background:linear-gradient(180deg,#444848,#303434);border:1px solid #1e2020;border-radius:2px"></div>
<div style="left:1694px;top:189.85px;width:68px;height:2.0px;background:#1e2020;border-bottom:1px solid #6a6e6e"></div>
<div style="left:1728px;top:182.35px;width:24px;height:16.5px;background:linear-gradient(90deg,#b8b8b8,#f8f8f8 30%,#e8e8e8 70%,#a8a8a8);border-radius:2px;box-shadow:0 1px 2px #000"><div style="left:11px;top:3px;width:1px;height:10px;background:#222"></div></div>
<div style="left:1789px;top:184.35px;width:41px;height:13.0px;background:#7e8c8c;border-radius:2px"><span style="position:absolute;right:2px;top:0px;font-size:10.5px;color:#e4ecec;line-height:13px">center</span></div>
<div style="left:1781.5px;top:182.35px;width:15.5px;height:16.0px;border-radius:50%;background:radial-gradient(circle at 45% 35%,#fafafa,#c8c8c8 60%,#8a8a8a);border:1px solid #5a6060"><div style="left:6.5px;top:1px;width:1px;height:6px;background:#333"></div></div>
<div style="left:1837.4px;top:182.35px;width:36.0px;height:16.5px;"></div>
<div style="left:1837.4px;top:182.35px;width:36.0px;height:16.5px;background:linear-gradient(180deg,#6cd47a,#3fae50);border:1px solid #2a5a30;border-radius:2px"><span style="position:absolute;left:4px;top:2px;font-size:11px;line-height:12px;color:#143c18;letter-spacing:3px">FX</span><div style="left:23px;top:0;width:1px;height:100%;background:#2a6a30"></div><svg style="position:absolute;left:24px;top:2px" width="11" height="11"><path d="M3.5,3.3 A3.6,3.6 0 1 0 7.5,3.3" fill="none" stroke="#143c18" stroke-width="1.2"/><line x1="5.5" y1="1.1" x2="5.5" y2="5.5" stroke="#143c18" stroke-width="1.2"/></svg></div>
<div style="left:1683px;top:204.85px;width:14.4px;height:15.0px;background:linear-gradient(180deg,#b8c4c4,#9aa6a6);border:1px solid #5e6a6a;border-radius:1px"><svg width="14" height="14"><polyline points="2,10 6,4 11,9" fill="none" stroke="#222" stroke-width="1.2"/></svg></div>
<div style="left:1704px;top:204.85px;width:15px;height:15.0px;border-radius:50%;border:1px solid #6a7676;background:#a9b5b5"><svg width="13" height="13" style="position:absolute;left:0;top:0"><circle cx="6.5" cy="6.5" r="3.5" fill="none" stroke="#6a7474" stroke-width="1.2"/><line x1="3" y1="10.5" x2="10" y2="2.5" stroke="#6a7474" stroke-width="1.2"/></svg></div>
<div style="left:1725px;top:204.85px;width:49.5px;height:15.0px;background:#8a9898;border:1px solid #7a8888;border-radius:2px"><span style="position:absolute;left:4px;top:1px;font-size:11.5px;color:#e0e8e8;line-height:13px">MIDI: A</span></div>
<div style="left:1762px;top:205.35px;width:14px;height:14.0px;border-radius:50%;background:radial-gradient(circle,#c0cccc,#8a9898);border:1px solid #6a7878"><div style="left:3px;top:5px;width:7px;height:4px;background:#334;clip-path:polygon(0 0,100% 0,50% 100%)"></div></div>
<div style="left:1837.4px;top:204.85px;width:36.0px;height:15.0px;background:#8a9898;border:1px solid #6a7878;border-radius:2px"><span style="position:absolute;left:16.5px;top:2px;font-size:8.5px;font-weight:bold;color:#dde6e6;line-height:11px;white-space:nowrap;transform:scaleX(0.7);transform-origin:0 0">IN<span style="color:#a8b4b4">OUT</span></span></div>
<div style="left:1837.4px;top:204.85px;width:15.6px;height:15.0px;background:linear-gradient(180deg,#4cc25c,#2e9a3e);border:1px solid #4a6a50;border-radius:2px"><div style="left:4px;top:3px;width:7px;height:8px;background:#0a3010;clip-path:polygon(0 0,100% 50%,0 100%)"></div></div>
<div style="left:1885px;top:225.85px;width:10px;height:7.0px;background:#a8b2b2;border-radius:1px"></div>
<div style="left:1883px;top:180.85px;white-space:nowrap;font-size:17px;color:#2a2e2e;line-height:18px">3</div>
<div style="left:1676px;top:237.7px;width:205px;height:90.85px;background:linear-gradient(180deg,#b6c2c2 0%,#a9b5b5 40%,#97a4a4 100%)"></div>
<div style="left:1881px;top:237.7px;width:17px;height:90.85px;background:linear-gradient(180deg,#c6d0d0,#b2bcbc)"></div>
<div style="left:1676px;top:235.7px;width:222px;height:1.0px;background:#4e5858"></div>
<div style="left:1676px;top:236.7px;width:222px;height:1.0px;background:#d0dada"></div>
<div style="left:1683px;top:252.2px;width:92px;height:16.5px;background:#3c3e3e;border:1px solid #232525;border-radius:8px 2px 2px 8px"></div>
<div style="left:1683.5px;top:252.7px;width:16.0px;height:15.5px;border-radius:50%;background:radial-gradient(circle,#c87878 0 1.8px,#7a2626 2.3px 3.6px,#c07070 4px 4.9px,#6a2020 5.4px);box-shadow:0 0 0 1px #2a2a2a"></div>
<div style="left:1753px;top:252.2px;width:22px;height:16.5px;background:#1e2020;border-radius:0 2px 2px 0"><span style="position:absolute;left:3px;top:2px;font-size:11px;color:#e8e8e8">I/O</span></div>
<div style="left:1702px;top:253.2px;white-space:nowrap;--jpx:0.82;font-size:13px;color:#c8cccc;line-height:15px;max-width:50px;overflow:hidden"><svg width="40.5" height="10.7" style="display:inline-block;vertical-align:-1.0px;overflow:visible;position:static"><path transform="translate(0.53,0) scale(0.874,1.066)" d="M5,0.3 L9.5,0.3 L9.5,1 Q7,2.5 7,5 Q7,7.5 9.5,9 L9.5,9.7 L5,9.7 Z" fill="#c8cccc"/><path transform="translate(10.66,0) scale(0.874,1.066)" d="M2.5,1 L2.5,9 L9,4" fill="none" stroke="#c8cccc" stroke-width="1.01" stroke-linecap="round" stroke-linejoin="round"/><path transform="translate(20.79,0) scale(0.874,1.066)" d="M7.5,0.8 L1.5,6 M5,3.8 L5,9.8" fill="none" stroke="#c8cccc" stroke-width="1.01" stroke-linecap="round" stroke-linejoin="round"/><path transform="translate(30.91,0) scale(0.874,1.066)" d="M1.5,1.5 L3.2,2.8 M1,4.5 L2.7,5.8 M2,9.5 Q7,7.5 9,2 M7.8,0.2 L8.5,1.6 M9.3,0.2 L10,1.6" fill="none" stroke="#c8cccc" stroke-width="1.01" stroke-linecap="round" stroke-linejoin="round"/></svg>·</div>
<div style="left:1781.5px;top:252.2px;width:49.5px;height:16.5px;background:linear-gradient(180deg,#3e4242,#2e3232);border:1px solid #222;border-radius:2px"></div>
<div style="left:1784px;top:260.2px;width:44px;height:1.0px;background:#5a5e5e"></div>
<div style="left:1797px;top:253.2px;white-space:nowrap;font-size:11px;color:#b8bcbc;line-height:13px">-35.6</div>
<div style="left:1837.4px;top:252.2px;width:16.2px;height:16.5px;background:linear-gradient(180deg,#f4f4f4,#cfcfcf);border:1px solid #6a7070;border-radius:2px"><span style="position:absolute;left:3px;top:1px;font-size:12px;color:#a01010">M</span></div>
<div style="left:1857.7px;top:252.2px;width:15.7px;height:16.5px;background:linear-gradient(180deg,#f4f4f4,#cfcfcf);border:1px solid #6a7070;border-radius:2px"><span style="position:absolute;left:3.5px;top:1px;font-size:11.5px;color:#6a6a10">S</span></div>
<div style="left:1683px;top:275.7px;width:92px;height:15.5px;background:linear-gradient(180deg,#444848,#303434);border:1px solid #1e2020;border-radius:2px"></div>
<div style="left:1694px;top:282.7px;width:68px;height:2.0px;background:#1e2020;border-bottom:1px solid #6a6e6e"></div>
<div style="left:1719px;top:275.2px;width:24px;height:16.5px;background:linear-gradient(90deg,#b8b8b8,#f8f8f8 30%,#e8e8e8 70%,#a8a8a8);border-radius:2px;box-shadow:0 1px 2px #000"><div style="left:11px;top:3px;width:1px;height:10px;background:#222"></div></div>
<div style="left:1789px;top:277.2px;width:41px;height:13.0px;background:#7e8c8c;border-radius:2px"><span style="position:absolute;right:2px;top:0px;font-size:10.5px;color:#e4ecec;line-height:13px">center</span></div>
<div style="left:1781.5px;top:275.2px;width:15.5px;height:16.0px;border-radius:50%;background:radial-gradient(circle at 45% 35%,#fafafa,#c8c8c8 60%,#8a8a8a);border:1px solid #5a6060"><div style="left:6.5px;top:1px;width:1px;height:6px;background:#333"></div></div>
<div style="left:1837.4px;top:275.2px;width:36.0px;height:16.5px;"></div>
<div style="left:1837.4px;top:275.2px;width:36.0px;height:16.5px;background:linear-gradient(180deg,#6cd47a,#3fae50);border:1px solid #2a5a30;border-radius:2px"><span style="position:absolute;left:4px;top:2px;font-size:11px;line-height:12px;color:#143c18;letter-spacing:3px">FX</span><div style="left:23px;top:0;width:1px;height:100%;background:#2a6a30"></div><svg style="position:absolute;left:24px;top:2px" width="11" height="11"><path d="M3.5,3.3 A3.6,3.6 0 1 0 7.5,3.3" fill="none" stroke="#143c18" stroke-width="1.2"/><line x1="5.5" y1="1.1" x2="5.5" y2="5.5" stroke="#143c18" stroke-width="1.2"/></svg></div>
<div style="left:1683px;top:297.7px;width:14.4px;height:15.0px;background:linear-gradient(180deg,#b8c4c4,#9aa6a6);border:1px solid #5e6a6a;border-radius:1px"><svg width="14" height="14"><polyline points="2,10 6,4 11,9" fill="none" stroke="#222" stroke-width="1.2"/></svg></div>
<div style="left:1704px;top:297.7px;width:15px;height:15.0px;border-radius:50%;border:1px solid #6a7676;background:#a9b5b5"><svg width="13" height="13" style="position:absolute;left:0;top:0"><circle cx="6.5" cy="6.5" r="3.5" fill="none" stroke="#6a7474" stroke-width="1.2"/><line x1="3" y1="10.5" x2="10" y2="2.5" stroke="#6a7474" stroke-width="1.2"/></svg></div>
<div style="left:1725px;top:297.7px;width:49.5px;height:15.0px;background:#8a9898;border:1px solid #7a8888;border-radius:2px"><span style="position:absolute;left:4px;top:1px;font-size:11.5px;color:#e0e8e8;line-height:13px">MIDI: A</span></div>
<div style="left:1762px;top:298.2px;width:14px;height:14.0px;border-radius:50%;background:radial-gradient(circle,#c0cccc,#8a9898);border:1px solid #6a7878"><div style="left:3px;top:5px;width:7px;height:4px;background:#334;clip-path:polygon(0 0,100% 0,50% 100%)"></div></div>
<div style="left:1837.4px;top:297.7px;width:36.0px;height:15.0px;background:#8a9898;border:1px solid #6a7878;border-radius:2px"><span style="position:absolute;left:16.5px;top:2px;font-size:8.5px;font-weight:bold;color:#dde6e6;line-height:11px;white-space:nowrap;transform:scaleX(0.7);transform-origin:0 0">IN<span style="color:#a8b4b4">OUT</span></span></div>
<div style="left:1837.4px;top:297.7px;width:15.6px;height:15.0px;background:linear-gradient(180deg,#4cc25c,#2e9a3e);border:1px solid #4a6a50;border-radius:2px"><div style="left:4px;top:3px;width:7px;height:8px;background:#0a3010;clip-path:polygon(0 0,100% 50%,0 100%)"></div></div>
<div style="left:1885px;top:318.7px;width:10px;height:7.0px;background:#a8b2b2;border-radius:1px"></div>
<div style="left:1883px;top:273.7px;white-space:nowrap;font-size:17px;color:#2a2e2e;line-height:18px">4</div>
<div style="left:1676px;top:330.55px;width:205px;height:90.85px;background:linear-gradient(180deg,#b6c2c2 0%,#a9b5b5 40%,#97a4a4 100%)"></div>
<div style="left:1881px;top:330.55px;width:17px;height:90.85px;background:linear-gradient(180deg,#c6d0d0,#b2bcbc)"></div>
<div style="left:1676px;top:328.55px;width:222px;height:1.0px;background:#4e5858"></div>
<div style="left:1676px;top:329.55px;width:222px;height:1.0px;background:#d0dada"></div>
<div style="left:1683px;top:345.05px;width:92px;height:16.5px;background:#3c3e3e;border:1px solid #232525;border-radius:8px 2px 2px 8px"></div>
<div style="left:1683.5px;top:345.55px;width:16.0px;height:15.5px;border-radius:50%;background:radial-gradient(circle,#c87878 0 1.8px,#7a2626 2.3px 3.6px,#c07070 4px 4.9px,#6a2020 5.4px);box-shadow:0 0 0 1px #2a2a2a"></div>
<div style="left:1753px;top:345.05px;width:22px;height:16.5px;background:#1e2020;border-radius:0 2px 2px 0"><span style="position:absolute;left:3px;top:2px;font-size:11px;color:#e8e8e8">I/O</span></div>
<div style="left:1702px;top:346.04999999999995px;white-space:nowrap;--jpx:0.82;font-size:13px;color:#c8cccc;line-height:15px;max-width:50px;overflow:hidden"><svg width="40.5" height="10.7" style="display:inline-block;vertical-align:-1.0px;overflow:visible;position:static"><path transform="translate(0.53,0) scale(0.874,1.066)" d="M5,0.3 L9.5,0.3 L9.5,1 Q7,2.5 7,5 Q7,7.5 9.5,9 L9.5,9.7 L5,9.7 Z" fill="#c8cccc"/><path transform="translate(10.66,0) scale(0.874,1.066)" d="M2.5,1 L2.5,9 L9,4" fill="none" stroke="#c8cccc" stroke-width="1.01" stroke-linecap="round" stroke-linejoin="round"/><path transform="translate(20.79,0) scale(0.874,1.066)" d="M7.5,0.8 L1.5,6 M5,3.8 L5,9.8" fill="none" stroke="#c8cccc" stroke-width="1.01" stroke-linecap="round" stroke-linejoin="round"/><path transform="translate(30.91,0) scale(0.874,1.066)" d="M1.5,1.5 L3.2,2.8 M1,4.5 L2.7,5.8 M2,9.5 Q7,7.5 9,2 M7.8,0.2 L8.5,1.6 M9.3,0.2 L10,1.6" fill="none" stroke="#c8cccc" stroke-width="1.01" stroke-linecap="round" stroke-linejoin="round"/></svg>·</div>
<div style="left:1781.5px;top:345.05px;width:49.5px;height:16.5px;background:linear-gradient(180deg,#3e4242,#2e3232);border:1px solid #222;border-radius:2px"></div>
<div style="left:1784px;top:353.05px;width:44px;height:1.0px;background:#5a5e5e"></div>
<div style="left:1817px;top:348.05px;width:11px;height:11.0px;background:#d03030;border-radius:1px"><span style="position:absolute;left:1px;top:0px;font-size:9px;font-weight:bold;color:#fdd">M</span></div>
<div style="left:1837.4px;top:345.05px;width:16.2px;height:16.5px;background:linear-gradient(180deg,#f07070,#d84848);border:1px solid #6a7070;border-radius:2px"><span style="position:absolute;left:3px;top:1px;font-size:12px;color:#a01010">M</span></div>
<div style="left:1857.7px;top:345.05px;width:15.7px;height:16.5px;background:linear-gradient(180deg,#f4f4f4,#cfcfcf);border:1px solid #6a7070;border-radius:2px"><span style="position:absolute;left:3.5px;top:1px;font-size:11.5px;color:#6a6a10">S</span></div>
<div style="left:1683px;top:368.55px;width:92px;height:15.5px;background:linear-gradient(180deg,#444848,#303434);border:1px solid #1e2020;border-radius:2px"></div>
<div style="left:1694px;top:375.55px;width:68px;height:2.0px;background:#1e2020;border-bottom:1px solid #6a6e6e"></div>
<div style="left:1727px;top:368.05px;width:24px;height:16.5px;background:linear-gradient(90deg,#b8b8b8,#f8f8f8 30%,#e8e8e8 70%,#a8a8a8);border-radius:2px;box-shadow:0 1px 2px #000"><div style="left:11px;top:3px;width:1px;height:10px;background:#222"></div></div>
<div style="left:1789px;top:370.05px;width:41px;height:13.0px;background:#7e8c8c;border-radius:2px"><span style="position:absolute;right:2px;top:0px;font-size:10.5px;color:#e4ecec;line-height:13px">center</span></div>
<div style="left:1781.5px;top:368.05px;width:15.5px;height:16.0px;border-radius:50%;background:radial-gradient(circle at 45% 35%,#fafafa,#c8c8c8 60%,#8a8a8a);border:1px solid #5a6060"><div style="left:6.5px;top:1px;width:1px;height:6px;background:#333"></div></div>
<div style="left:1837.4px;top:368.05px;width:36.0px;height:16.5px;"></div>
<div style="left:1837.4px;top:368.05px;width:36.0px;height:16.5px;background:linear-gradient(180deg,#6cd47a,#3fae50);border:1px solid #2a5a30;border-radius:2px"><span style="position:absolute;left:4px;top:2px;font-size:11px;line-height:12px;color:#143c18;letter-spacing:3px">FX</span><div style="left:23px;top:0;width:1px;height:100%;background:#2a6a30"></div><svg style="position:absolute;left:24px;top:2px" width="11" height="11"><path d="M3.5,3.3 A3.6,3.6 0 1 0 7.5,3.3" fill="none" stroke="#143c18" stroke-width="1.2"/><line x1="5.5" y1="1.1" x2="5.5" y2="5.5" stroke="#143c18" stroke-width="1.2"/></svg></div>
<div style="left:1683px;top:390.55px;width:14.4px;height:15.0px;background:linear-gradient(180deg,#b8c4c4,#9aa6a6);border:1px solid #5e6a6a;border-radius:1px"><svg width="14" height="14"><polyline points="2,10 6,4 11,9" fill="none" stroke="#222" stroke-width="1.2"/></svg></div>
<div style="left:1704px;top:390.55px;width:15px;height:15.0px;border-radius:50%;border:1px solid #6a7676;background:#a9b5b5"><svg width="13" height="13" style="position:absolute;left:0;top:0"><circle cx="6.5" cy="6.5" r="3.5" fill="none" stroke="#6a7474" stroke-width="1.2"/><line x1="3" y1="10.5" x2="10" y2="2.5" stroke="#6a7474" stroke-width="1.2"/></svg></div>
<div style="left:1725px;top:390.55px;width:49.5px;height:15.0px;background:#8a9898;border:1px solid #7a8888;border-radius:2px"><span style="position:absolute;left:4px;top:1px;font-size:11.5px;color:#e0e8e8;line-height:13px">MIDI: A</span></div>
<div style="left:1762px;top:391.05px;width:14px;height:14.0px;border-radius:50%;background:radial-gradient(circle,#c0cccc,#8a9898);border:1px solid #6a7878"><div style="left:3px;top:5px;width:7px;height:4px;background:#334;clip-path:polygon(0 0,100% 0,50% 100%)"></div></div>
<div style="left:1837.4px;top:390.55px;width:36.0px;height:15.0px;background:#8a9898;border:1px solid #6a7878;border-radius:2px"><span style="position:absolute;left:16.5px;top:2px;font-size:8.5px;font-weight:bold;color:#dde6e6;line-height:11px;white-space:nowrap;transform:scaleX(0.7);transform-origin:0 0">IN<span style="color:#a8b4b4">OUT</span></span></div>
<div style="left:1837.4px;top:390.55px;width:15.6px;height:15.0px;background:linear-gradient(180deg,#4cc25c,#2e9a3e);border:1px solid #4a6a50;border-radius:2px"><div style="left:4px;top:3px;width:7px;height:8px;background:#0a3010;clip-path:polygon(0 0,100% 50%,0 100%)"></div></div>
<div style="left:1885px;top:411.55px;width:10px;height:7.0px;background:#a8b2b2;border-radius:1px"></div>
<div style="left:1883px;top:366.54999999999995px;white-space:nowrap;font-size:17px;color:#2a2e2e;line-height:18px">5</div>
<div style="left:1676px;top:423.4px;width:205px;height:90.85px;background:linear-gradient(180deg,#b6c2c2 0%,#a9b5b5 40%,#97a4a4 100%)"></div>
<div style="left:1881px;top:423.4px;width:17px;height:90.85px;background:linear-gradient(180deg,#c6d0d0,#b2bcbc)"></div>
<div style="left:1676px;top:421.4px;width:222px;height:1.0px;background:#4e5858"></div>
<div style="left:1676px;top:422.4px;width:222px;height:1.0px;background:#d0dada"></div>
<div style="left:1683px;top:437.9px;width:92px;height:16.5px;background:#3c3e3e;border:1px solid #232525;border-radius:8px 2px 2px 8px"></div>
<div style="left:1683.5px;top:438.4px;width:16.0px;height:15.5px;border-radius:50%;background:radial-gradient(circle,#c87878 0 1.8px,#7a2626 2.3px 3.6px,#c07070 4px 4.9px,#6a2020 5.4px);box-shadow:0 0 0 1px #2a2a2a"></div>
<div style="left:1753px;top:437.9px;width:22px;height:16.5px;background:#1e2020;border-radius:0 2px 2px 0"><span style="position:absolute;left:3px;top:2px;font-size:11px;color:#e8e8e8">I/O</span></div>
<div style="left:1702px;top:438.9px;white-space:nowrap;--jpx:0.82;font-size:13px;color:#c8cccc;line-height:15px;max-width:50px;overflow:hidden"><svg width="40.5" height="10.7" style="display:inline-block;vertical-align:-1.0px;overflow:visible;position:static"><path transform="translate(0.53,0) scale(0.874,1.066)" d="M5,0.3 L9.5,0.3 L9.5,1 Q7,2.5 7,5 Q7,7.5 9.5,9 L9.5,9.7 L5,9.7 Z" fill="#c8cccc"/><path transform="translate(10.66,0) scale(0.874,1.066)" d="M2.5,1 L2.5,9 L9,4" fill="none" stroke="#c8cccc" stroke-width="1.01" stroke-linecap="round" stroke-linejoin="round"/><path transform="translate(20.79,0) scale(0.874,1.066)" d="M7.5,0.8 L1.5,6 M5,3.8 L5,9.8" fill="none" stroke="#c8cccc" stroke-width="1.01" stroke-linecap="round" stroke-linejoin="round"/><path transform="translate(30.91,0) scale(0.874,1.066)" d="M1.5,1.5 L3.2,2.8 M1,4.5 L2.7,5.8 M2,9.5 Q7,7.5 9,2 M7.8,0.2 L8.5,1.6 M9.3,0.2 L10,1.6" fill="none" stroke="#c8cccc" stroke-width="1.01" stroke-linecap="round" stroke-linejoin="round"/></svg>·</div>
<div style="left:1781.5px;top:437.9px;width:49.5px;height:16.5px;background:linear-gradient(180deg,#3e4242,#2e3232);border:1px solid #222;border-radius:2px"></div>
<div style="left:1784px;top:445.9px;width:44px;height:1.0px;background:#5a5e5e"></div>
<div style="left:1806px;top:438.9px;white-space:nowrap;font-size:11px;color:#b8bcbc;line-height:13px">-inf</div>
<div style="left:1837.4px;top:437.9px;width:16.2px;height:16.5px;background:linear-gradient(180deg,#f4f4f4,#cfcfcf);border:1px solid #6a7070;border-radius:2px"><span style="position:absolute;left:3px;top:1px;font-size:12px;color:#a01010">M</span></div>
<div style="left:1857.7px;top:437.9px;width:15.7px;height:16.5px;background:linear-gradient(180deg,#f4f4f4,#cfcfcf);border:1px solid #6a7070;border-radius:2px"><span style="position:absolute;left:3.5px;top:1px;font-size:11.5px;color:#6a6a10">S</span></div>
<div style="left:1683px;top:461.4px;width:92px;height:15.5px;background:linear-gradient(180deg,#444848,#303434);border:1px solid #1e2020;border-radius:2px"></div>
<div style="left:1694px;top:468.4px;width:68px;height:2.0px;background:#1e2020;border-bottom:1px solid #6a6e6e"></div>
<div style="left:1730px;top:460.9px;width:24px;height:16.5px;background:linear-gradient(90deg,#b8b8b8,#f8f8f8 30%,#e8e8e8 70%,#a8a8a8);border-radius:2px;box-shadow:0 1px 2px #000"><div style="left:11px;top:3px;width:1px;height:10px;background:#222"></div></div>
<div style="left:1789px;top:462.9px;width:41px;height:13.0px;background:#7e8c8c;border-radius:2px"><span style="position:absolute;right:2px;top:0px;font-size:10.5px;color:#e4ecec;line-height:13px">center</span></div>
<div style="left:1781.5px;top:460.9px;width:15.5px;height:16.0px;border-radius:50%;background:radial-gradient(circle at 45% 35%,#fafafa,#c8c8c8 60%,#8a8a8a);border:1px solid #5a6060"><div style="left:6.5px;top:1px;width:1px;height:6px;background:#333"></div></div>
<div style="left:1837.4px;top:460.9px;width:36.0px;height:16.5px;"></div>
<div style="left:1837.4px;top:460.9px;width:36.0px;height:16.5px;background:linear-gradient(180deg,#6cd47a,#3fae50);border:1px solid #2a5a30;border-radius:2px"><span style="position:absolute;left:4px;top:2px;font-size:11px;line-height:12px;color:#143c18;letter-spacing:3px">FX</span><div style="left:23px;top:0;width:1px;height:100%;background:#2a6a30"></div><svg style="position:absolute;left:24px;top:2px" width="11" height="11"><path d="M3.5,3.3 A3.6,3.6 0 1 0 7.5,3.3" fill="none" stroke="#143c18" stroke-width="1.2"/><line x1="5.5" y1="1.1" x2="5.5" y2="5.5" stroke="#143c18" stroke-width="1.2"/></svg></div>
<div style="left:1683px;top:483.4px;width:14.4px;height:15.0px;background:linear-gradient(180deg,#b8c4c4,#9aa6a6);border:1px solid #5e6a6a;border-radius:1px"><svg width="14" height="14"><polyline points="2,10 6,4 11,9" fill="none" stroke="#222" stroke-width="1.2"/></svg></div>
<div style="left:1704px;top:483.4px;width:15px;height:15.0px;border-radius:50%;border:1px solid #6a7676;background:#a9b5b5"><svg width="13" height="13" style="position:absolute;left:0;top:0"><circle cx="6.5" cy="6.5" r="3.5" fill="none" stroke="#6a7474" stroke-width="1.2"/><line x1="3" y1="10.5" x2="10" y2="2.5" stroke="#6a7474" stroke-width="1.2"/></svg></div>
<div style="left:1725px;top:483.4px;width:49.5px;height:15.0px;background:#8a9898;border:1px solid #7a8888;border-radius:2px"><span style="position:absolute;left:4px;top:1px;font-size:11.5px;color:#e0e8e8;line-height:13px">MIDI: A</span></div>
<div style="left:1762px;top:483.9px;width:14px;height:14.0px;border-radius:50%;background:radial-gradient(circle,#c0cccc,#8a9898);border:1px solid #6a7878"><div style="left:3px;top:5px;width:7px;height:4px;background:#334;clip-path:polygon(0 0,100% 0,50% 100%)"></div></div>
<div style="left:1837.4px;top:483.4px;width:36.0px;height:15.0px;background:#8a9898;border:1px solid #6a7878;border-radius:2px"><span style="position:absolute;left:16.5px;top:2px;font-size:8.5px;font-weight:bold;color:#dde6e6;line-height:11px;white-space:nowrap;transform:scaleX(0.7);transform-origin:0 0">IN<span style="color:#a8b4b4">OUT</span></span></div>
<div style="left:1837.4px;top:483.4px;width:15.6px;height:15.0px;background:linear-gradient(180deg,#4cc25c,#2e9a3e);border:1px solid #4a6a50;border-radius:2px"><div style="left:4px;top:3px;width:7px;height:8px;background:#0a3010;clip-path:polygon(0 0,100% 50%,0 100%)"></div></div>
<div style="left:1885px;top:504.4px;width:10px;height:7.0px;background:#a8b2b2;border-radius:1px"></div>
<div style="left:1883px;top:459.4px;white-space:nowrap;font-size:17px;color:#2a2e2e;line-height:18px">6</div>
<div style="left:1676px;top:516.25px;width:205px;height:90.85px;background:linear-gradient(180deg,#b6c2c2 0%,#a9b5b5 40%,#97a4a4 100%)"></div>
<div style="left:1881px;top:516.25px;width:17px;height:90.85px;background:linear-gradient(180deg,#c6d0d0,#b2bcbc)"></div>
<div style="left:1676px;top:514.25px;width:222px;height:1.0px;background:#4e5858"></div>
<div style="left:1676px;top:515.25px;width:222px;height:1.0px;background:#d0dada"></div>
<div style="left:1683px;top:530.75px;width:92px;height:16.5px;background:#3c3e3e;border:1px solid #232525;border-radius:8px 2px 2px 8px"></div>
<div style="left:1683.5px;top:531.25px;width:16.0px;height:15.5px;border-radius:50%;background:radial-gradient(circle,#c87878 0 1.8px,#7a2626 2.3px 3.6px,#c07070 4px 4.9px,#6a2020 5.4px);box-shadow:0 0 0 1px #2a2a2a"></div>
<div style="left:1753px;top:530.75px;width:22px;height:16.5px;background:#1e2020;border-radius:0 2px 2px 0"><span style="position:absolute;left:3px;top:2px;font-size:11px;color:#e8e8e8">I/O</span></div>
<div style="left:1781.5px;top:530.75px;width:49.5px;height:16.5px;background:linear-gradient(180deg,#3e4242,#2e3232);border:1px solid #222;border-radius:2px"></div>
<div style="left:1784px;top:538.75px;width:44px;height:1.0px;background:#5a5e5e"></div>
<div style="left:1806px;top:531.75px;white-space:nowrap;font-size:11px;color:#b8bcbc;line-height:13px">-inf</div>
<div style="left:1837.4px;top:530.75px;width:16.2px;height:16.5px;background:linear-gradient(180deg,#f4f4f4,#cfcfcf);border:1px solid #6a7070;border-radius:2px"><span style="position:absolute;left:3px;top:1px;font-size:12px;color:#a01010">M</span></div>
<div style="left:1857.7px;top:530.75px;width:15.7px;height:16.5px;background:linear-gradient(180deg,#f4f4f4,#cfcfcf);border:1px solid #6a7070;border-radius:2px"><span style="position:absolute;left:3.5px;top:1px;font-size:11.5px;color:#6a6a10">S</span></div>
<div style="left:1683px;top:554.25px;width:92px;height:15.5px;background:linear-gradient(180deg,#444848,#303434);border:1px solid #1e2020;border-radius:2px"></div>
<div style="left:1694px;top:561.25px;width:68px;height:2.0px;background:#1e2020;border-bottom:1px solid #6a6e6e"></div>
<div style="left:1722px;top:553.75px;width:24px;height:16.5px;background:linear-gradient(90deg,#b8b8b8,#f8f8f8 30%,#e8e8e8 70%,#a8a8a8);border-radius:2px;box-shadow:0 1px 2px #000"><div style="left:11px;top:3px;width:1px;height:10px;background:#222"></div></div>
<div style="left:1789px;top:555.75px;width:41px;height:13.0px;background:#7e8c8c;border-radius:2px"><span style="position:absolute;right:2px;top:0px;font-size:10.5px;color:#e4ecec;line-height:13px">40%R</span></div>
<div style="left:1781.5px;top:553.75px;width:15.5px;height:16.0px;border-radius:50%;background:radial-gradient(circle at 45% 35%,#fafafa,#c8c8c8 60%,#8a8a8a);border:1px solid #5a6060"><div style="left:8px;top:4px;width:1px;height:5px;background:#333;transform:rotate(60deg)"></div></div>
<div style="left:1837.4px;top:553.75px;width:36.0px;height:16.5px;"></div>
<div style="left:1837.4px;top:553.75px;width:36.0px;height:16.5px;background:linear-gradient(180deg,#6cd47a,#3fae50);border:1px solid #2a5a30;border-radius:2px"><span style="position:absolute;left:4px;top:2px;font-size:11px;line-height:12px;color:#143c18;letter-spacing:3px">FX</span><div style="left:23px;top:0;width:1px;height:100%;background:#2a6a30"></div><svg style="position:absolute;left:24px;top:2px" width="11" height="11"><path d="M3.5,3.3 A3.6,3.6 0 1 0 7.5,3.3" fill="none" stroke="#143c18" stroke-width="1.2"/><line x1="5.5" y1="1.1" x2="5.5" y2="5.5" stroke="#143c18" stroke-width="1.2"/></svg></div>
<div style="left:1683px;top:576.25px;width:14.4px;height:15.0px;background:linear-gradient(180deg,#b8c4c4,#9aa6a6);border:1px solid #5e6a6a;border-radius:1px"><svg width="14" height="14"><polyline points="2,10 6,4 11,9" fill="none" stroke="#222" stroke-width="1.2"/></svg></div>
<div style="left:1704px;top:576.25px;width:15px;height:15.0px;border-radius:50%;border:1px solid #6a7676;background:#a9b5b5"><svg width="13" height="13" style="position:absolute;left:0;top:0"><circle cx="6.5" cy="6.5" r="3.5" fill="none" stroke="#6a7474" stroke-width="1.2"/><line x1="3" y1="10.5" x2="10" y2="2.5" stroke="#6a7474" stroke-width="1.2"/></svg></div>
<div style="left:1725px;top:576.25px;width:49.5px;height:15.0px;background:#8a9898;border:1px solid #7a8888;border-radius:2px"><span style="position:absolute;left:4px;top:1px;font-size:11.5px;color:#e0e8e8;line-height:13px">MIDI: A</span></div>
<div style="left:1762px;top:576.75px;width:14px;height:14.0px;border-radius:50%;background:radial-gradient(circle,#c0cccc,#8a9898);border:1px solid #6a7878"><div style="left:3px;top:5px;width:7px;height:4px;background:#334;clip-path:polygon(0 0,100% 0,50% 100%)"></div></div>
<div style="left:1837.4px;top:576.25px;width:36.0px;height:15.0px;background:#8a9898;border:1px solid #6a7878;border-radius:2px"><span style="position:absolute;left:16.5px;top:2px;font-size:8.5px;font-weight:bold;color:#dde6e6;line-height:11px;white-space:nowrap;transform:scaleX(0.7);transform-origin:0 0">IN<span style="color:#a8b4b4">OUT</span></span></div>
<div style="left:1837.4px;top:576.25px;width:15.6px;height:15.0px;background:linear-gradient(180deg,#b0bcbc,#98a4a4);border:1px solid #4a6a50;border-radius:2px"><div style="left:4px;top:3px;width:7px;height:8px;background:#e8f0f0;clip-path:polygon(0 0,100% 50%,0 100%)"></div></div>
<div style="left:1885px;top:597.25px;width:10px;height:7.0px;background:#a8b2b2;border-radius:1px"></div>
<div style="left:1883px;top:552.25px;white-space:nowrap;font-size:17px;color:#2a2e2e;line-height:18px">7</div>
<div style="left:1676px;top:609.1px;width:205px;height:90.85px;background:linear-gradient(180deg,#b6c2c2 0%,#a9b5b5 40%,#97a4a4 100%)"></div>
<div style="left:1881px;top:609.1px;width:17px;height:90.85px;background:linear-gradient(180deg,#c6d0d0,#b2bcbc)"></div>
<div style="left:1676px;top:607.1px;width:222px;height:1.0px;background:#4e5858"></div>
<div style="left:1676px;top:608.1px;width:222px;height:1.0px;background:#d0dada"></div>
<div style="left:1683px;top:623.6px;width:92px;height:16.5px;background:#3c3e3e;border:1px solid #232525;border-radius:8px 2px 2px 8px"></div>
<div style="left:1683.5px;top:624.1px;width:16.0px;height:15.5px;border-radius:50%;background:radial-gradient(circle,#c87878 0 1.8px,#7a2626 2.3px 3.6px,#c07070 4px 4.9px,#6a2020 5.4px);box-shadow:0 0 0 1px #2a2a2a"></div>
<div style="left:1753px;top:623.6px;width:22px;height:16.5px;background:#1e2020;border-radius:0 2px 2px 0"><span style="position:absolute;left:3px;top:2px;font-size:11px;color:#e8e8e8">I/O</span></div>
<div style="left:1781.5px;top:623.6px;width:49.5px;height:16.5px;background:linear-gradient(180deg,#3e4242,#2e3232);border:1px solid #222;border-radius:2px"></div>
<div style="left:1784px;top:631.6px;width:44px;height:1.0px;background:#5a5e5e"></div>
<div style="left:1806px;top:624.5999999999999px;white-space:nowrap;font-size:11px;color:#b8bcbc;line-height:13px">-inf</div>
<div style="left:1837.4px;top:623.6px;width:16.2px;height:16.5px;background:linear-gradient(180deg,#f4f4f4,#cfcfcf);border:1px solid #6a7070;border-radius:2px"><span style="position:absolute;left:3px;top:1px;font-size:12px;color:#a01010">M</span></div>
<div style="left:1857.7px;top:623.6px;width:15.7px;height:16.5px;background:linear-gradient(180deg,#f4f4f4,#cfcfcf);border:1px solid #6a7070;border-radius:2px"><span style="position:absolute;left:3.5px;top:1px;font-size:11.5px;color:#6a6a10">S</span></div>
<div style="left:1683px;top:647.1px;width:92px;height:15.5px;background:linear-gradient(180deg,#444848,#303434);border:1px solid #1e2020;border-radius:2px"></div>
<div style="left:1694px;top:654.1px;width:68px;height:2.0px;background:#1e2020;border-bottom:1px solid #6a6e6e"></div>
<div style="left:1722px;top:646.6px;width:24px;height:16.5px;background:linear-gradient(90deg,#b8b8b8,#f8f8f8 30%,#e8e8e8 70%,#a8a8a8);border-radius:2px;box-shadow:0 1px 2px #000"><div style="left:11px;top:3px;width:1px;height:10px;background:#222"></div></div>
<div style="left:1789px;top:648.6px;width:41px;height:13.0px;background:#7e8c8c;border-radius:2px"><span style="position:absolute;right:2px;top:0px;font-size:10.5px;color:#e4ecec;line-height:13px">40%R</span></div>
<div style="left:1781.5px;top:646.6px;width:15.5px;height:16.0px;border-radius:50%;background:radial-gradient(circle at 45% 35%,#fafafa,#c8c8c8 60%,#8a8a8a);border:1px solid #5a6060"><div style="left:8px;top:4px;width:1px;height:5px;background:#333;transform:rotate(60deg)"></div></div>
<div style="left:1837.4px;top:646.6px;width:36.0px;height:16.5px;"></div>
<div style="left:1837.4px;top:646.6px;width:36.0px;height:16.5px;background:linear-gradient(180deg,#6cd47a,#3fae50);border:1px solid #2a5a30;border-radius:2px"><span style="position:absolute;left:4px;top:2px;font-size:11px;line-height:12px;color:#143c18;letter-spacing:3px">FX</span><div style="left:23px;top:0;width:1px;height:100%;background:#2a6a30"></div><svg style="position:absolute;left:24px;top:2px" width="11" height="11"><path d="M3.5,3.3 A3.6,3.6 0 1 0 7.5,3.3" fill="none" stroke="#143c18" stroke-width="1.2"/><line x1="5.5" y1="1.1" x2="5.5" y2="5.5" stroke="#143c18" stroke-width="1.2"/></svg></div>
<div style="left:1683px;top:669.1px;width:14.4px;height:15.0px;background:linear-gradient(180deg,#b8c4c4,#9aa6a6);border:1px solid #5e6a6a;border-radius:1px"><svg width="14" height="14"><polyline points="2,10 6,4 11,9" fill="none" stroke="#222" stroke-width="1.2"/></svg></div>
<div style="left:1704px;top:669.1px;width:15px;height:15.0px;border-radius:50%;border:1px solid #6a7676;background:#a9b5b5"><svg width="13" height="13" style="position:absolute;left:0;top:0"><circle cx="6.5" cy="6.5" r="3.5" fill="none" stroke="#6a7474" stroke-width="1.2"/><line x1="3" y1="10.5" x2="10" y2="2.5" stroke="#6a7474" stroke-width="1.2"/></svg></div>
<div style="left:1725px;top:669.1px;width:49.5px;height:15.0px;background:#8a9898;border:1px solid #7a8888;border-radius:2px"><span style="position:absolute;left:4px;top:1px;font-size:11.5px;color:#e0e8e8;line-height:13px">MIDI: A</span></div>
<div style="left:1762px;top:669.6px;width:14px;height:14.0px;border-radius:50%;background:radial-gradient(circle,#c0cccc,#8a9898);border:1px solid #6a7878"><div style="left:3px;top:5px;width:7px;height:4px;background:#334;clip-path:polygon(0 0,100% 0,50% 100%)"></div></div>
<div style="left:1837.4px;top:669.1px;width:36.0px;height:15.0px;background:#8a9898;border:1px solid #6a7878;border-radius:2px"><span style="position:absolute;left:16.5px;top:2px;font-size:8.5px;font-weight:bold;color:#dde6e6;line-height:11px;white-space:nowrap;transform:scaleX(0.7);transform-origin:0 0">IN<span style="color:#a8b4b4">OUT</span></span></div>
<div style="left:1837.4px;top:669.1px;width:15.6px;height:15.0px;background:linear-gradient(180deg,#b0bcbc,#98a4a4);border:1px solid #4a6a50;border-radius:2px"><div style="left:4px;top:3px;width:7px;height:8px;background:#e8f0f0;clip-path:polygon(0 0,100% 50%,0 100%)"></div></div>
<div style="left:1885px;top:690.1px;width:10px;height:7.0px;background:#a8b2b2;border-radius:1px"></div>
<div style="left:1883px;top:645.0999999999999px;white-space:nowrap;font-size:17px;color:#2a2e2e;line-height:18px">8</div>
<div style="left:1676px;top:30px;width:222px;height:1px;background:#2a2a2a"></div>
<div style="left:1675px;top:0px;width:230px;height:30px;background:#2f2f2f"></div>
<div style="left:1677px;top:-2px;width:28px;height:24.4px;background:linear-gradient(180deg,#8a8e8e 0%,#7a7e7e 60%,#5e6262 100%);border-radius:0 0 3px 3px;border-bottom:1px solid #1a1a1a"></div>
<div style="left:1706.8px;top:-2px;width:28.2px;height:24.4px;background:linear-gradient(180deg,#8a8e8e 0%,#7a7e7e 60%,#5e6262 100%);border-radius:0 0 3px 3px;border-bottom:1px solid #1a1a1a"></div>
<div style="left:1735.7px;top:-2px;width:30.3px;height:24.4px;background:linear-gradient(180deg,#2a2a2a,#262626);border-radius:0 0 3px 3px;border-bottom:1px solid #1a1a1a"></div>
<div style="left:1767.4px;top:-2px;width:27.6px;height:24.4px;background:linear-gradient(180deg,#8a8e8e 0%,#7a7e7e 60%,#5e6262 100%);border-radius:0 0 3px 3px;border-bottom:1px solid #1a1a1a"></div>
<div style="left:1797px;top:-2px;width:28px;height:24.4px;background:linear-gradient(180deg,#8a8e8e 0%,#7a7e7e 60%,#5e6262 100%);border-radius:0 0 3px 3px;border-bottom:1px solid #1a1a1a"></div>
<div style="left:1827px;top:-2px;width:28px;height:24.4px;background:linear-gradient(180deg,#8a8e8e 0%,#7a7e7e 60%,#5e6262 100%);border-radius:0 0 3px 3px;border-bottom:1px solid #1a1a1a"></div>
<div style="left:1856px;top:-2px;width:30px;height:24.4px;background:linear-gradient(180deg,#2a2a2a,#262626);border-radius:0 0 3px 3px;border-bottom:1px solid #1a1a1a"></div>
<svg style="position:absolute;left:1677px;top:0" width="210" height="22">
<g fill="#2e7e80" stroke="#88c8c8" stroke-width="0.7">
<rect x="4" y="-1" width="6" height="11.5"/><rect x="18" y="5" width="5.8" height="10.8"/>
<rect x="32.2" y="-1" width="9" height="6.6"/><rect x="51.6" y="3.7" width="4" height="2"/><rect x="46.4" y="10.2" width="9" height="8.4"/><rect x="32.2" y="10.5" width="4" height="2.2"/><rect x="40" y="15" width="2.5" height="3"/>
<rect x="63" y="-1" width="6" height="2.9"/><rect x="70" y="-1" width="5.8" height="2.9"/><rect x="77" y="-1" width="5.8" height="2.9"/><rect x="63" y="4" width="6" height="5"/><rect x="63" y="10.9" width="6" height="4.9"/>
<rect x="97" y="11.2" width="13.7" height="6.5"/>
</g>
<polygon points="10,2.5 15.5,8.5 10,10.5" fill="#30f060"/>
<polygon points="10.3,15.4 18,7.4 18,15.4" fill="#20e050" stroke="#80ff90" stroke-width="0.5"/>
<line x1="32.5" y1="19.3" x2="55.5" y2="-0.5" stroke="#e4e4e4" stroke-width="1.6"/>
<ellipse cx="40.5" cy="10.5" rx="2.2" ry="5" transform="rotate(40 40.5 10.5)" fill="none" stroke="#dcdcdc" stroke-width="1.3"/>
<ellipse cx="46.5" cy="5.5" rx="2.2" ry="5" transform="rotate(40 46.5 5.5)" fill="none" stroke="#dcdcdc" stroke-width="1.3"/>
<rect x="53" y="-1" width="3" height="2.5" fill="#f0f0f0"/><rect x="32.5" y="14" width="2.8" height="2.5" fill="#e8e8e8"/>
<rect x="73.2" y="4" width="5.6" height="5" fill="none" stroke="#20c050" stroke-width="0.9"/><rect x="80" y="4" width="5.8" height="4.8" fill="#22c855" stroke="#60e080" stroke-width="0.5"/>
<path d="M74,19 Q72,16 71.2,13.5 Q72,12.5 73.5,13.5 L73.5,8 Q74.2,6.2 75,8 L75,11.5 Q78,11 80.5,12.5 Q81.3,16 79.5,19 Z" fill="#c4c4c4"/>
<line x1="84.5" y1="11" x2="84.5" y2="16" stroke="#888" stroke-width="0.8"/>
<g fill="none" stroke="#f0f0f0" stroke-width="1"><rect x="97.3" y="5.3" width="2.6" height="3.2"/><rect x="107.6" y="3.5" width="2.6" height="2.6"/><rect x="102.5" y="-1" width="2.6" height="2.8"/></g>
<polyline points="99.2,5.3 103.8,1.5 108.8,3.6" fill="none" stroke="#f0f0f0" stroke-width="0.9"/>
<g fill="#f4f4f4"><polygon points="95,1.5 95,6 92,3.75"/><polygon points="112.8,1.5 112.8,6 115.8,3.75"/><polygon points="95,11.6 95,17.2 92,14.4"/><polygon points="112.8,11.6 112.8,17.2 115.8,14.4"/></g>
<g fill="#f2f2f2"><rect x="122.8" y="1.1" width="1.3" height="1.7"/><rect x="127.9" y="1.1" width="1.3" height="1.7"/><rect x="132.8" y="1.1" width="1.3" height="1.7"/><rect x="137.9" y="1.1" width="1.3" height="1.7"/><rect x="142.9" y="1.1" width="1.3" height="1.7"/>
<rect x="122.8" y="4" width="1.3" height="1.8"/><rect x="127.9" y="4" width="1.3" height="1.8"/><rect x="132.8" y="4" width="1.3" height="1.8"/><rect x="137.9" y="4" width="1.3" height="1.8"/><rect x="142.9" y="4" width="1.3" height="1.8"/>
<rect x="122.8" y="7" width="1.3" height="1.8"/><rect x="127.9" y="7" width="1.3" height="1.8"/><rect x="132.8" y="7" width="1.3" height="1.8"/><rect x="137.9" y="7" width="1.3" height="1.8"/><rect x="142.9" y="7" width="1.3" height="1.8"/>
<rect x="122.8" y="10" width="1.3" height="1.7"/><rect x="127.9" y="10" width="1.3" height="1.7"/><rect x="132.8" y="10" width="1.3" height="1.7"/><rect x="137.9" y="10" width="1.3" height="1.7"/><rect x="142.9" y="10" width="1.3" height="1.7"/>
<rect x="122.8" y="13" width="1.3" height="1.7"/><rect x="127.9" y="13" width="1.3" height="1.7"/><rect x="132.8" y="13" width="1.3" height="1.7"/><rect x="137.9" y="13" width="1.3" height="1.7"/><rect x="142.9" y="13" width="1.3" height="1.7"/>
<rect x="122.8" y="16" width="1.3" height="1.7"/><rect x="127.9" y="16" width="1.3" height="1.7"/><rect x="132.8" y="16" width="1.3" height="1.7"/><rect x="137.9" y="16" width="1.3" height="1.7"/><rect x="142.9" y="16" width="1.3" height="1.7"/></g>
<line x1="154.3" y1="1" x2="154.3" y2="18" stroke="#40e070" stroke-width="1.2" stroke-dasharray="1.7,1.3"/>
<g stroke="#9aa" stroke-width="0.8" stroke-dasharray="1.5,1.5"><line x1="159.5" y1="4" x2="159.5" y2="12"/><line x1="164.5" y1="4" x2="164.5" y2="12"/><line x1="169.2" y1="14" x2="169.2" y2="18"/><line x1="174.5" y1="1" x2="174.5" y2="18"/></g>
<path d="M157,1.5 L165,1.5 A6.6,6.6 0 0 1 165,14.5 L157,14.5" fill="none" stroke="#40f070" stroke-width="2.6"/>
<path d="M157,1.5 L165,1.5 A6.6,6.6 0 0 1 165,14.5 L157,14.5" fill="none" stroke="#18a040" stroke-width="0.8" opacity="0.6"/>
<rect x="184" y="8.3" width="11.9" height="7.8" fill="#c0c0c0" rx="0.5"/>
<path d="M186.3,8.5 V5.5 A3.8,3.8 0 0 1 193.9,5.5 V8.5" fill="none" stroke="#c0c0c0" stroke-width="1.7"/>
<g fill="none" stroke="#d8d8d8" stroke-width="0.8"><rect x="199.3" y="-1" width="4" height="4.5"/><rect x="199.3" y="6.4" width="4" height="4"/><rect x="199.3" y="15" width="4" height="2.8"/></g>
<polyline points="198.5,14.5 200.5,16.5 205,10.5" fill="none" stroke="#20b040" stroke-width="1.3"/>
<polyline points="199.5,0.5 201,2 203,-0.5" fill="none" stroke="#20b040" stroke-width="1.2"/>
</svg>
<div style="left:1907px;top:30px;width:694.3px;height:21.0px;background-color:#dadada"></div>
<div style="left:1907px;top:30px;width:694.3px;height:21.0px;background-image:repeating-linear-gradient(180deg,#dadada 0 1px,transparent 1px 2px),repeating-linear-gradient(90deg,transparent 0 0.60px,rgba(0,0,0,0.22) 0.60px 1.60px,transparent 1.60px 9.135px)"></div>
<div style="left:2601.3px;top:30px;width:934.7px;height:21.0px;background-color:#cacaca"></div>
<div style="left:2601.3px;top:30px;width:934.7px;height:21.0px;background-image:repeating-linear-gradient(180deg,#cacaca 0 1px,transparent 1px 2px),repeating-linear-gradient(90deg,transparent 0 0.56px,rgba(0,0,0,0.22) 0.56px 1.56px,transparent 1.56px 9.135px)"></div>
<div style="left:1907px;top:51.0px;width:694.3px;height:92.85px;background-color:#767676"></div>
<div style="left:1907px;top:51.0px;width:694.3px;height:92.85px;background-image:repeating-linear-gradient(180deg,#767676 0 1px,transparent 1px 2px),repeating-linear-gradient(90deg,transparent 0 0.60px,rgba(255,255,255,0.35) 0.60px 1.60px,transparent 1.60px 9.135px)"></div>
<div style="left:2601.3px;top:51.0px;width:934.7px;height:92.85px;background-color:#5c5c5c"></div>
<div style="left:2601.3px;top:51.0px;width:934.7px;height:92.85px;background-image:repeating-linear-gradient(180deg,#5c5c5c 0 1px,transparent 1px 2px),repeating-linear-gradient(90deg,transparent 0 0.56px,rgba(255,255,255,0.35) 0.56px 1.56px,transparent 1.56px 9.135px)"></div>
<div style="left:1907px;top:51.0px;width:1629px;height:1.0px;background:rgba(0,0,0,0.12)"></div>
<div style="left:1907px;top:143.85px;width:694.3px;height:92.85px;background-color:#dedede"></div>
<div style="left:1907px;top:143.85px;width:694.3px;height:92.85px;background-image:repeating-linear-gradient(180deg,#dedede 0 1px,transparent 1px 2px),repeating-linear-gradient(90deg,transparent 0 0.60px,rgba(0,0,0,0.22) 0.60px 1.60px,transparent 1.60px 9.135px)"></div>
<div style="left:2601.3px;top:143.85px;width:934.7px;height:92.85px;background-color:#cccccc"></div>
<div style="left:2601.3px;top:143.85px;width:934.7px;height:92.85px;background-image:repeating-linear-gradient(180deg,#cccccc 0 1px,transparent 1px 2px),repeating-linear-gradient(90deg,transparent 0 0.56px,rgba(0,0,0,0.22) 0.56px 1.56px,transparent 1.56px 9.135px)"></div>
<div style="left:1907px;top:143.85px;width:1629px;height:1.0px;background:rgba(0,0,0,0.12)"></div>
<div style="left:1907px;top:236.7px;width:694.3px;height:92.85px;background-color:#d6d6d6"></div>
<div style="left:1907px;top:236.7px;width:694.3px;height:92.85px;background-image:repeating-linear-gradient(180deg,#d6d6d6 0 1px,transparent 1px 2px),repeating-linear-gradient(90deg,transparent 0 0.60px,rgba(0,0,0,0.22) 0.60px 1.60px,transparent 1.60px 9.135px)"></div>
<div style="left:2601.3px;top:236.7px;width:934.7px;height:92.85px;background-color:#c0c0c0"></div>
<div style="left:2601.3px;top:236.7px;width:934.7px;height:92.85px;background-image:repeating-linear-gradient(180deg,#c0c0c0 0 1px,transparent 1px 2px),repeating-linear-gradient(90deg,transparent 0 0.56px,rgba(0,0,0,0.22) 0.56px 1.56px,transparent 1.56px 9.135px)"></div>
<div style="left:1907px;top:236.7px;width:1629px;height:1.0px;background:rgba(0,0,0,0.12)"></div>
<div style="left:1907px;top:329.55px;width:694.3px;height:92.85px;background-color:#727272"></div>
<div style="left:1907px;top:329.55px;width:694.3px;height:92.85px;background-image:repeating-linear-gradient(180deg,#727272 0 1px,transparent 1px 2px),repeating-linear-gradient(90deg,transparent 0 0.60px,rgba(255,255,255,0.35) 0.60px 1.60px,transparent 1.60px 9.135px)"></div>
<div style="left:2601.3px;top:329.55px;width:934.7px;height:92.85px;background-color:#5e5e5e"></div>
<div style="left:2601.3px;top:329.55px;width:934.7px;height:92.85px;background-image:repeating-linear-gradient(180deg,#5e5e5e 0 1px,transparent 1px 2px),repeating-linear-gradient(90deg,transparent 0 0.56px,rgba(255,255,255,0.35) 0.56px 1.56px,transparent 1.56px 9.135px)"></div>
<div style="left:1907px;top:329.55px;width:1629px;height:1.0px;background:rgba(0,0,0,0.12)"></div>
<div style="left:1907px;top:422.4px;width:694.3px;height:92.85px;background-color:#d4d4d4"></div>
<div style="left:1907px;top:422.4px;width:694.3px;height:92.85px;background-image:repeating-linear-gradient(180deg,#d4d4d4 0 1px,transparent 1px 2px),repeating-linear-gradient(90deg,transparent 0 0.60px,rgba(0,0,0,0.22) 0.60px 1.60px,transparent 1.60px 9.135px)"></div>
<div style="left:2601.3px;top:422.4px;width:934.7px;height:92.85px;background-color:#bebebe"></div>
<div style="left:2601.3px;top:422.4px;width:934.7px;height:92.85px;background-image:repeating-linear-gradient(180deg,#bebebe 0 1px,transparent 1px 2px),repeating-linear-gradient(90deg,transparent 0 0.56px,rgba(0,0,0,0.22) 0.56px 1.56px,transparent 1.56px 9.135px)"></div>
<div style="left:1907px;top:422.4px;width:1629px;height:1.0px;background:rgba(0,0,0,0.12)"></div>
<div style="left:1907px;top:515.25px;width:694.3px;height:92.85px;background-color:#dcdcdc"></div>
<div style="left:1907px;top:515.25px;width:694.3px;height:92.85px;background-image:repeating-linear-gradient(180deg,#dcdcdc 0 1px,transparent 1px 2px),repeating-linear-gradient(90deg,transparent 0 0.60px,rgba(0,0,0,0.22) 0.60px 1.60px,transparent 1.60px 9.135px)"></div>
<div style="left:2601.3px;top:515.25px;width:934.7px;height:92.85px;background-color:#c9c9c9"></div>
<div style="left:2601.3px;top:515.25px;width:934.7px;height:92.85px;background-image:repeating-linear-gradient(180deg,#c9c9c9 0 1px,transparent 1px 2px),repeating-linear-gradient(90deg,transparent 0 0.56px,rgba(0,0,0,0.22) 0.56px 1.56px,transparent 1.56px 9.135px)"></div>
<div style="left:1907px;top:515.25px;width:1629px;height:1.0px;background:rgba(0,0,0,0.12)"></div>
<div style="left:1907px;top:608.1px;width:694.3px;height:54.9px;background-color:#d2d2d2"></div>
<div style="left:1907px;top:608.1px;width:694.3px;height:54.9px;background-image:repeating-linear-gradient(180deg,#d2d2d2 0 1px,transparent 1px 2px),repeating-linear-gradient(90deg,transparent 0 0.60px,rgba(0,0,0,0.22) 0.60px 1.60px,transparent 1.60px 9.135px)"></div>
<div style="left:2601.3px;top:608.1px;width:934.7px;height:54.9px;background-color:#b9b9b9"></div>
<div style="left:2601.3px;top:608.1px;width:934.7px;height:54.9px;background-image:repeating-linear-gradient(180deg,#b9b9b9 0 1px,transparent 1px 2px),repeating-linear-gradient(90deg,transparent 0 0.56px,rgba(0,0,0,0.22) 0.56px 1.56px,transparent 1.56px 9.135px)"></div>
<div style="left:1907px;top:608.1px;width:1629px;height:1.0px;background:rgba(0,0,0,0.12)"></div>
<div style="left:2163.5px;top:22px;width:35.3px;height:24px;background:linear-gradient(180deg,#b8c6c6,#a6b4b4);border:1px solid #4a5252;border-radius:4px"></div>
<div style="left:2199.5px;top:22px;width:210.5px;height:24px;background:linear-gradient(180deg,#b8c6c6,#a6b4b4);border:1px solid #4a5252;border-radius:4px"></div>
<svg style="position:absolute;left:2220px;top:38px" width="180" height="10"><polyline points="11.9,8 16.4,3.5 20.9,8" fill="#a6b4b4" stroke="#3e4646" stroke-width="1"/><polyline points="47.8,8 52.3,3.5 56.8,8" fill="#a6b4b4" stroke="#3e4646" stroke-width="1"/><polyline points="84.7,8 89.2,3.5 93.7,8" fill="#a6b4b4" stroke="#3e4646" stroke-width="1"/><polyline points="121.7,8 126.2,3.5 130.7,8" fill="#a6b4b4" stroke="#3e4646" stroke-width="1"/><polyline points="158.1,8 162.6,3.5 167.1,8" fill="#a6b4b4" stroke="#3e4646" stroke-width="1"/></svg>
<div style="left:1909px;top:53.0px;white-space:nowrap;--jpx:0.88;font-size:10.5px;color:#1a1a1a;line-height:12px;letter-spacing:-0.3px;"><svg width="26.3" height="8.6" style="display:inline-block;vertical-align:-0.8px;overflow:visible;position:static"><path transform="translate(0.46,0) scale(0.758,0.861)" d="M5,0.3 L9.5,0.3 L9.5,1 Q7,2.5 7,5 Q7,7.5 9.5,9 L9.5,9.7 L5,9.7 Z" fill="#1a1a1a"/><path transform="translate(9.24,0) scale(0.758,0.861)" d="M2.5,1 L2.5,9 L9,4" fill="none" stroke="#1a1a1a" stroke-width="0.99" stroke-linecap="round" stroke-linejoin="round"/><path transform="translate(18.02,0) scale(0.758,0.861)" d="M7.5,0.8 L1.5,6 M5,3.8 L5,9.8" fill="none" stroke="#1a1a1a" stroke-width="0.99" stroke-linecap="round" stroke-linejoin="round"/></svg>…</div>
<div class="itemd" style="left:1907.5px;top:65.0px;width:36.5px;height:74.0px;"><div style="left:0;top:30px;width:34px;height:6px;background:#2c2c2c"></div><div style="left:18px;top:34px;width:5px;height:4px;background:#2c2c2c"></div></div>
<div class="itemd" style="left:2199.5px;top:65.0px;width:18.4px;height:74.0px;"><div style="left:1px;top:40px;width:4px;height:4px;background:#2a2a2a"></div><div style="left:4px;top:42px;width:3px;height:4px;background:#2a2a2a"></div><div style="left:7px;top:40px;width:3px;height:3px;background:#2a2a2a"></div><div style="left:10px;top:42px;width:4px;height:4px;background:#2a2a2a"></div><div style="left:14px;top:40px;width:3px;height:5px;background:#2a2a2a"></div></div>
<div class="itemd" style="left:2217.9px;top:65.0px;width:18.4px;height:74.0px;"><div style="left:1px;top:40px;width:4px;height:4px;background:#2a2a2a"></div><div style="left:4px;top:42px;width:3px;height:4px;background:#2a2a2a"></div><div style="left:7px;top:40px;width:3px;height:3px;background:#2a2a2a"></div><div style="left:10px;top:42px;width:4px;height:4px;background:#2a2a2a"></div><div style="left:14px;top:40px;width:3px;height:5px;background:#2a2a2a"></div></div>
<div class="itemd" style="left:2236.3px;top:65.0px;width:18.4px;height:74.0px;"><div style="left:1px;top:40px;width:4px;height:4px;background:#2a2a2a"></div><div style="left:4px;top:42px;width:3px;height:4px;background:#2a2a2a"></div><div style="left:7px;top:40px;width:3px;height:3px;background:#2a2a2a"></div><div style="left:10px;top:42px;width:4px;height:4px;background:#2a2a2a"></div><div style="left:14px;top:40px;width:3px;height:5px;background:#2a2a2a"></div></div>
<div class="itemd" style="left:2254.7px;top:65.0px;width:18.4px;height:74.0px;"><div style="left:1px;top:40px;width:4px;height:4px;background:#2a2a2a"></div><div style="left:4px;top:42px;width:3px;height:4px;background:#2a2a2a"></div><div style="left:7px;top:40px;width:3px;height:3px;background:#2a2a2a"></div><div style="left:10px;top:42px;width:4px;height:4px;background:#2a2a2a"></div><div style="left:14px;top:40px;width:3px;height:5px;background:#2a2a2a"></div></div>
<div class="itemd" style="left:2273.1px;top:65.0px;width:18.4px;height:74.0px;"><div style="left:1px;top:40px;width:4px;height:4px;background:#2a2a2a"></div><div style="left:4px;top:42px;width:3px;height:4px;background:#2a2a2a"></div><div style="left:7px;top:40px;width:3px;height:3px;background:#2a2a2a"></div><div style="left:10px;top:42px;width:4px;height:4px;background:#2a2a2a"></div><div style="left:14px;top:40px;width:3px;height:5px;background:#2a2a2a"></div></div>
<div class="itemd" style="left:2291.5px;top:65.0px;width:18.4px;height:74.0px;"><div style="left:1px;top:40px;width:4px;height:4px;background:#2a2a2a"></div><div style="left:4px;top:42px;width:3px;height:4px;background:#2a2a2a"></div><div style="left:7px;top:40px;width:3px;height:3px;background:#2a2a2a"></div><div style="left:10px;top:42px;width:4px;height:4px;background:#2a2a2a"></div><div style="left:14px;top:40px;width:3px;height:5px;background:#2a2a2a"></div></div>
<div class="itemd" style="left:2309.9px;top:65.0px;width:18.4px;height:74.0px;"><div style="left:1px;top:40px;width:4px;height:4px;background:#2a2a2a"></div><div style="left:4px;top:42px;width:3px;height:4px;background:#2a2a2a"></div><div style="left:7px;top:40px;width:3px;height:3px;background:#2a2a2a"></div><div style="left:10px;top:42px;width:4px;height:4px;background:#2a2a2a"></div><div style="left:14px;top:40px;width:3px;height:5px;background:#2a2a2a"></div></div>
<div class="itemd" style="left:2328.3px;top:65.0px;width:18.4px;height:74.0px;"><div style="left:1px;top:40px;width:4px;height:4px;background:#2a2a2a"></div><div style="left:4px;top:42px;width:3px;height:4px;background:#2a2a2a"></div><div style="left:7px;top:40px;width:3px;height:3px;background:#2a2a2a"></div><div style="left:10px;top:42px;width:4px;height:4px;background:#2a2a2a"></div><div style="left:14px;top:40px;width:3px;height:5px;background:#2a2a2a"></div></div>
<div style="left:1909px;top:146.85px;white-space:nowrap;--jpx:0.88;font-size:10.5px;color:#1a1a1a;line-height:12px;letter-spacing:-0.3px;"><svg width="87.8" height="8.6" style="display:inline-block;vertical-align:-0.8px;overflow:visible;position:static"><path transform="translate(0.46,0) scale(0.758,0.861)" d="M5,0.3 L9.5,0.3 L9.5,1 Q7,2.5 7,5 Q7,7.5 9.5,9 L9.5,9.7 L5,9.7 Z" fill="#1a1a1a"/><path transform="translate(9.24,0) scale(0.758,0.861)" d="M2.5,1 L2.5,9 L9,4" fill="none" stroke="#1a1a1a" stroke-width="0.99" stroke-linecap="round" stroke-linejoin="round"/><path transform="translate(18.02,0) scale(0.758,0.861)" d="M7.5,0.8 L1.5,6 M5,3.8 L5,9.8" fill="none" stroke="#1a1a1a" stroke-width="0.99" stroke-linecap="round" stroke-linejoin="round"/><path transform="translate(26.80,0) scale(0.758,0.861)" d="M1.5,1.5 L3.2,2.8 M1,4.5 L2.7,5.8 M2,9.5 Q7,7.5 9,2 M7.8,0.2 L8.5,1.6 M9.3,0.2 L10,1.6" fill="none" stroke="#1a1a1a" stroke-width="0.99" stroke-linecap="round" stroke-linejoin="round"/><path transform="translate(35.57,0) scale(0.758,0.861)" d="M1,5 L9,5" fill="none" stroke="#1a1a1a" stroke-width="0.99" stroke-linecap="round" stroke-linejoin="round"/><path transform="translate(44.35,0) scale(0.758,0.861)" d="M2,1.5 L8,1.5 M8,1.5 Q6,6.5 1.5,9.5 M5.2,5.8 L9,9.3" fill="none" stroke="#1a1a1a" stroke-width="0.99" stroke-linecap="round" stroke-linejoin="round"/><path transform="translate(53.13,0) scale(0.758,0.861)" d="M5,0.3 L5,1.8 M2,1.8 L8,1.8 L1.5,7.5 M5,5.2 L5,9.8 M6.2,5.8 L9,8" fill="none" stroke="#1a1a1a" stroke-width="0.99" stroke-linecap="round" stroke-linejoin="round"/><path transform="translate(61.91,0) scale(0.758,0.861)" d="M7.5,0.8 L1.5,6 M5,3.8 L5,9.8" fill="none" stroke="#1a1a1a" stroke-width="0.99" stroke-linecap="round" stroke-linejoin="round"/><path transform="translate(70.69,0) scale(0.758,0.861)" d="M4,0.5 L1.5,4.2 M3,2 L8.5,2 Q7.5,7 2.5,9.8" fill="none" stroke="#1a1a1a" stroke-width="0.99" stroke-linecap="round" stroke-linejoin="round"/><path transform="translate(79.46,0) scale(0.758,0.861)" d="M5,0.3 L0.5,0.3 L0.5,1 Q3,2.5 3,5 Q3,7.5 0.5,9 L0.5,9.7 L5,9.7 Z" fill="#1a1a1a"/></svg>LazySnake glued</div>
<div class="item" style="left:1907.5px;top:159.85px;width:693.8px;height:73.0px;"><div style="left:144.9px;top:25.1px;width:14.9px;height:6.5px;background:#444"></div><div style="left:159.7px;top:26.6px;width:7.4px;height:7.4px;background:#444"></div><div style="left:167.2px;top:23.9px;width:8.3px;height:3.6px;background:#444"></div><div style="left:180.5px;top:27.2px;width:3.9px;height:5.3px;background:#444"></div><div style="left:185.0px;top:25.1px;width:8.9px;height:4.5px;background:#444"></div><div style="left:192.4px;top:28.0px;width:10.4px;height:4.5px;background:#444"></div><div style="left:202.8px;top:29.5px;width:9.5px;height:5.1px;background:#444"></div><div style="left:214.7px;top:25.7px;width:17.8px;height:5.9px;background:#444"></div><div style="left:232.5px;top:26.6px;width:6.5px;height:3.6px;background:#444"></div><div style="left:239.0px;top:22.7px;width:7.4px;height:3.9px;background:#444"></div><div style="left:248.8px;top:25.1px;width:4.5px;height:8.9px;background:#444"></div><div style="left:256.3px;top:26.0px;width:8.9px;height:5.6px;background:#444"></div><div style="left:262.2px;top:28.0px;width:12.5px;height:4.5px;background:#444"></div><div style="left:274.7px;top:29.5px;width:11.9px;height:5.1px;background:#444"></div><div style="left:289.0px;top:25.1px;width:14.9px;height:6.5px;background:#444"></div><div style="left:303.8px;top:26.6px;width:7.4px;height:7.4px;background:#444"></div><div style="left:311.2px;top:23.9px;width:8.3px;height:3.6px;background:#444"></div><div style="left:324.6px;top:27.2px;width:3.9px;height:5.3px;background:#444"></div><div style="left:329.1px;top:25.1px;width:8.9px;height:4.5px;background:#444"></div><div style="left:336.5px;top:28.0px;width:10.4px;height:4.5px;background:#444"></div><div style="left:346.9px;top:29.5px;width:9.5px;height:5.1px;background:#444"></div><div style="left:358.8px;top:25.7px;width:17.8px;height:5.9px;background:#444"></div><div style="left:376.6px;top:26.6px;width:6.5px;height:3.6px;background:#444"></div><div style="left:383.1px;top:22.7px;width:7.4px;height:3.9px;background:#444"></div><div style="left:392.9px;top:25.1px;width:4.5px;height:8.9px;background:#444"></div><div style="left:400.4px;top:26.0px;width:8.9px;height:5.6px;background:#444"></div><div style="left:406.3px;top:28.0px;width:12.5px;height:4.5px;background:#444"></div><div style="left:418.8px;top:29.5px;width:11.9px;height:5.1px;background:#444"></div></div>
<div style="left:1946.0px;top:238.7px;white-space:nowrap;--jpx:0.88;font-size:10.5px;color:#1a1a1a;line-height:12px;letter-spacing:-0.3px;max-width:35px;overflow:hidden;"><svg width="26.3" height="8.6" style="display:inline-block;vertical-align:-0.8px;overflow:visible;position:static"><path transform="translate(0.46,0) scale(0.758,0.861)" d="M5,0.3 L9.5,0.3 L9.5,1 Q7,2.5 7,5 Q7,7.5 9.5,9 L9.5,9.7 L5,9.7 Z" fill="#1a1a1a"/><path transform="translate(9.24,0) scale(0.758,0.861)" d="M2.5,1 L2.5,9 L9,4" fill="none" stroke="#1a1a1a" stroke-width="0.99" stroke-linecap="round" stroke-linejoin="round"/><path transform="translate(18.02,0) scale(0.758,0.861)" d="M7.5,0.8 L1.5,6 M5,3.8 L5,9.8" fill="none" stroke="#1a1a1a" stroke-width="0.99" stroke-linecap="round" stroke-linejoin="round"/></svg>…</div>
<div class="item" style="left:1945.0px;top:252.7px;width:36.45px;height:73.0px;"><div style="left:0;top:28px;width:34px;height:6px;background:#3a3a3a"></div><div style="left:18px;top:33px;width:16px;height:4px;background:#3a3a3a"></div></div>
<div style="left:1982.45px;top:238.7px;white-space:nowrap;--jpx:0.88;font-size:10.5px;color:#1a1a1a;line-height:12px;letter-spacing:-0.3px;max-width:35px;overflow:hidden;"><svg width="26.3" height="8.6" style="display:inline-block;vertical-align:-0.8px;overflow:visible;position:static"><path transform="translate(0.46,0) scale(0.758,0.861)" d="M5,0.3 L9.5,0.3 L9.5,1 Q7,2.5 7,5 Q7,7.5 9.5,9 L9.5,9.7 L5,9.7 Z" fill="#1a1a1a"/><path transform="translate(9.24,0) scale(0.758,0.861)" d="M2.5,1 L2.5,9 L9,4" fill="none" stroke="#1a1a1a" stroke-width="0.99" stroke-linecap="round" stroke-linejoin="round"/><path transform="translate(18.02,0) scale(0.758,0.861)" d="M7.5,0.8 L1.5,6 M5,3.8 L5,9.8" fill="none" stroke="#1a1a1a" stroke-width="0.99" stroke-linecap="round" stroke-linejoin="round"/></svg>…</div>
<div class="item" style="left:1981.45px;top:252.7px;width:36.45px;height:73.0px;"><div style="left:0;top:28px;width:34px;height:6px;background:#3a3a3a"></div><div style="left:12px;top:33px;width:8px;height:3px;background:#3a3a3a"></div></div>
<div style="left:2018.9px;top:238.7px;white-space:nowrap;--jpx:0.88;font-size:10.5px;color:#1a1a1a;line-height:12px;letter-spacing:-0.3px;max-width:35px;overflow:hidden;"><svg width="26.3" height="8.6" style="display:inline-block;vertical-align:-0.8px;overflow:visible;position:static"><path transform="translate(0.46,0) scale(0.758,0.861)" d="M5,0.3 L9.5,0.3 L9.5,1 Q7,2.5 7,5 Q7,7.5 9.5,9 L9.5,9.7 L5,9.7 Z" fill="#1a1a1a"/><path transform="translate(9.24,0) scale(0.758,0.861)" d="M2.5,1 L2.5,9 L9,4" fill="none" stroke="#1a1a1a" stroke-width="0.99" stroke-linecap="round" stroke-linejoin="round"/><path transform="translate(18.02,0) scale(0.758,0.861)" d="M7.5,0.8 L1.5,6 M5,3.8 L5,9.8" fill="none" stroke="#1a1a1a" stroke-width="0.99" stroke-linecap="round" stroke-linejoin="round"/></svg>…</div>
<div class="item" style="left:2017.9px;top:252.7px;width:36.45px;height:73.0px;"><div style="left:0;top:28px;width:34px;height:6px;background:#3a3a3a"></div><div style="left:18px;top:33px;width:16px;height:4px;background:#3a3a3a"></div></div>
<div style="left:2055.35px;top:238.7px;white-space:nowrap;--jpx:0.88;font-size:10.5px;color:#1a1a1a;line-height:12px;letter-spacing:-0.3px;max-width:35px;overflow:hidden;"><svg width="26.3" height="8.6" style="display:inline-block;vertical-align:-0.8px;overflow:visible;position:static"><path transform="translate(0.46,0) scale(0.758,0.861)" d="M5,0.3 L9.5,0.3 L9.5,1 Q7,2.5 7,5 Q7,7.5 9.5,9 L9.5,9.7 L5,9.7 Z" fill="#1a1a1a"/><path transform="translate(9.24,0) scale(0.758,0.861)" d="M2.5,1 L2.5,9 L9,4" fill="none" stroke="#1a1a1a" stroke-width="0.99" stroke-linecap="round" stroke-linejoin="round"/><path transform="translate(18.02,0) scale(0.758,0.861)" d="M7.5,0.8 L1.5,6 M5,3.8 L5,9.8" fill="none" stroke="#1a1a1a" stroke-width="0.99" stroke-linecap="round" stroke-linejoin="round"/></svg>…</div>
<div class="item" style="left:2054.35px;top:252.7px;width:36.45px;height:73.0px;"><div style="left:0;top:28px;width:34px;height:6px;background:#3a3a3a"></div><div style="left:12px;top:33px;width:8px;height:3px;background:#3a3a3a"></div></div>
<div style="left:2091.8px;top:238.7px;white-space:nowrap;--jpx:0.88;font-size:10.5px;color:#1a1a1a;line-height:12px;letter-spacing:-0.3px;max-width:35px;overflow:hidden;"><svg width="26.3" height="8.6" style="display:inline-block;vertical-align:-0.8px;overflow:visible;position:static"><path transform="translate(0.46,0) scale(0.758,0.861)" d="M5,0.3 L9.5,0.3 L9.5,1 Q7,2.5 7,5 Q7,7.5 9.5,9 L9.5,9.7 L5,9.7 Z" fill="#1a1a1a"/><path transform="translate(9.24,0) scale(0.758,0.861)" d="M2.5,1 L2.5,9 L9,4" fill="none" stroke="#1a1a1a" stroke-width="0.99" stroke-linecap="round" stroke-linejoin="round"/><path transform="translate(18.02,0) scale(0.758,0.861)" d="M7.5,0.8 L1.5,6 M5,3.8 L5,9.8" fill="none" stroke="#1a1a1a" stroke-width="0.99" stroke-linecap="round" stroke-linejoin="round"/></svg>…</div>
<div class="item" style="left:2090.8px;top:252.7px;width:36.45px;height:73.0px;"><div style="left:0;top:28px;width:34px;height:6px;background:#3a3a3a"></div><div style="left:18px;top:33px;width:16px;height:4px;background:#3a3a3a"></div></div>
<div style="left:2128.25px;top:238.7px;white-space:nowrap;--jpx:0.88;font-size:10.5px;color:#1a1a1a;line-height:12px;letter-spacing:-0.3px;max-width:35px;overflow:hidden;"><svg width="26.3" height="8.6" style="display:inline-block;vertical-align:-0.8px;overflow:visible;position:static"><path transform="translate(0.46,0) scale(0.758,0.861)" d="M5,0.3 L9.5,0.3 L9.5,1 Q7,2.5 7,5 Q7,7.5 9.5,9 L9.5,9.7 L5,9.7 Z" fill="#1a1a1a"/><path transform="translate(9.24,0) scale(0.758,0.861)" d="M2.5,1 L2.5,9 L9,4" fill="none" stroke="#1a1a1a" stroke-width="0.99" stroke-linecap="round" stroke-linejoin="round"/><path transform="translate(18.02,0) scale(0.758,0.861)" d="M7.5,0.8 L1.5,6 M5,3.8 L5,9.8" fill="none" stroke="#1a1a1a" stroke-width="0.99" stroke-linecap="round" stroke-linejoin="round"/></svg>…</div>
<div class="item" style="left:2127.25px;top:252.7px;width:36.45px;height:73.0px;"><div style="left:0;top:28px;width:34px;height:6px;background:#3a3a3a"></div><div style="left:12px;top:33px;width:8px;height:3px;background:#3a3a3a"></div></div>
<div style="left:2164.7px;top:238.7px;white-space:nowrap;--jpx:0.88;font-size:10.5px;color:#1a1a1a;line-height:12px;letter-spacing:-0.3px;max-width:35px;overflow:hidden;"><svg width="26.3" height="8.6" style="display:inline-block;vertical-align:-0.8px;overflow:visible;position:static"><path transform="translate(0.46,0) scale(0.758,0.861)" d="M5,0.3 L9.5,0.3 L9.5,1 Q7,2.5 7,5 Q7,7.5 9.5,9 L9.5,9.7 L5,9.7 Z" fill="#1a1a1a"/><path transform="translate(9.24,0) scale(0.758,0.861)" d="M2.5,1 L2.5,9 L9,4" fill="none" stroke="#1a1a1a" stroke-width="0.99" stroke-linecap="round" stroke-linejoin="round"/><path transform="translate(18.02,0) scale(0.758,0.861)" d="M7.5,0.8 L1.5,6 M5,3.8 L5,9.8" fill="none" stroke="#1a1a1a" stroke-width="0.99" stroke-linecap="round" stroke-linejoin="round"/></svg>…</div>
<div class="item" style="left:2163.7px;top:252.7px;width:36.45px;height:73.0px;"><div style="left:0;top:28px;width:34px;height:6px;background:#3a3a3a"></div><div style="left:18px;top:33px;width:16px;height:4px;background:#3a3a3a"></div></div>
<div style="left:2201.15px;top:238.7px;white-space:nowrap;--jpx:0.88;font-size:10.5px;color:#1a1a1a;line-height:12px;letter-spacing:-0.3px;max-width:35px;overflow:hidden;"><svg width="26.3" height="8.6" style="display:inline-block;vertical-align:-0.8px;overflow:visible;position:static"><path transform="translate(0.46,0) scale(0.758,0.861)" d="M5,0.3 L9.5,0.3 L9.5,1 Q7,2.5 7,5 Q7,7.5 9.5,9 L9.5,9.7 L5,9.7 Z" fill="#1a1a1a"/><path transform="translate(9.24,0) scale(0.758,0.861)" d="M2.5,1 L2.5,9 L9,4" fill="none" stroke="#1a1a1a" stroke-width="0.99" stroke-linecap="round" stroke-linejoin="round"/><path transform="translate(18.02,0) scale(0.758,0.861)" d="M7.5,0.8 L1.5,6 M5,3.8 L5,9.8" fill="none" stroke="#1a1a1a" stroke-width="0.99" stroke-linecap="round" stroke-linejoin="round"/></svg>…</div>
<div class="item" style="left:2200.15px;top:252.7px;width:36.45px;height:73.0px;"><div style="left:0;top:28px;width:34px;height:6px;background:#3a3a3a"></div><div style="left:12px;top:33px;width:8px;height:3px;background:#3a3a3a"></div></div>
<div style="left:2237.6px;top:238.7px;white-space:nowrap;--jpx:0.88;font-size:10.5px;color:#1a1a1a;line-height:12px;letter-spacing:-0.3px;max-width:35px;overflow:hidden;"><svg width="26.3" height="8.6" style="display:inline-block;vertical-align:-0.8px;overflow:visible;position:static"><path transform="translate(0.46,0) scale(0.758,0.861)" d="M5,0.3 L9.5,0.3 L9.5,1 Q7,2.5 7,5 Q7,7.5 9.5,9 L9.5,9.7 L5,9.7 Z" fill="#1a1a1a"/><path transform="translate(9.24,0) scale(0.758,0.861)" d="M2.5,1 L2.5,9 L9,4" fill="none" stroke="#1a1a1a" stroke-width="0.99" stroke-linecap="round" stroke-linejoin="round"/><path transform="translate(18.02,0) scale(0.758,0.861)" d="M7.5,0.8 L1.5,6 M5,3.8 L5,9.8" fill="none" stroke="#1a1a1a" stroke-width="0.99" stroke-linecap="round" stroke-linejoin="round"/></svg>…</div>
<div class="item" style="left:2236.6px;top:252.7px;width:36.45px;height:73.0px;"><div style="left:0;top:28px;width:34px;height:6px;background:#3a3a3a"></div><div style="left:18px;top:33px;width:16px;height:4px;background:#3a3a3a"></div></div>
<div style="left:2274.05px;top:238.7px;white-space:nowrap;--jpx:0.88;font-size:10.5px;color:#1a1a1a;line-height:12px;letter-spacing:-0.3px;max-width:35px;overflow:hidden;"><svg width="26.3" height="8.6" style="display:inline-block;vertical-align:-0.8px;overflow:visible;position:static"><path transform="translate(0.46,0) scale(0.758,0.861)" d="M5,0.3 L9.5,0.3 L9.5,1 Q7,2.5 7,5 Q7,7.5 9.5,9 L9.5,9.7 L5,9.7 Z" fill="#1a1a1a"/><path transform="translate(9.24,0) scale(0.758,0.861)" d="M2.5,1 L2.5,9 L9,4" fill="none" stroke="#1a1a1a" stroke-width="0.99" stroke-linecap="round" stroke-linejoin="round"/><path transform="translate(18.02,0) scale(0.758,0.861)" d="M7.5,0.8 L1.5,6 M5,3.8 L5,9.8" fill="none" stroke="#1a1a1a" stroke-width="0.99" stroke-linecap="round" stroke-linejoin="round"/></svg>…</div>
<div class="item" style="left:2273.05px;top:252.7px;width:36.45px;height:73.0px;"><div style="left:0;top:28px;width:34px;height:6px;background:#3a3a3a"></div><div style="left:12px;top:33px;width:8px;height:3px;background:#3a3a3a"></div></div>
<div style="left:2310.5px;top:238.7px;white-space:nowrap;--jpx:0.88;font-size:10.5px;color:#1a1a1a;line-height:12px;letter-spacing:-0.3px;max-width:35px;overflow:hidden;"><svg width="26.3" height="8.6" style="display:inline-block;vertical-align:-0.8px;overflow:visible;position:static"><path transform="translate(0.46,0) scale(0.758,0.861)" d="M5,0.3 L9.5,0.3 L9.5,1 Q7,2.5 7,5 Q7,7.5 9.5,9 L9.5,9.7 L5,9.7 Z" fill="#1a1a1a"/><path transform="translate(9.24,0) scale(0.758,0.861)" d="M2.5,1 L2.5,9 L9,4" fill="none" stroke="#1a1a1a" stroke-width="0.99" stroke-linecap="round" stroke-linejoin="round"/><path transform="translate(18.02,0) scale(0.758,0.861)" d="M7.5,0.8 L1.5,6 M5,3.8 L5,9.8" fill="none" stroke="#1a1a1a" stroke-width="0.99" stroke-linecap="round" stroke-linejoin="round"/></svg>…</div>
<div class="item" style="left:2309.5px;top:252.7px;width:36.45px;height:73.0px;"><div style="left:0;top:28px;width:34px;height:6px;background:#3a3a3a"></div><div style="left:18px;top:33px;width:16px;height:4px;background:#3a3a3a"></div></div>
<div style="left:1908.5px;top:331.54999999999995px;white-space:nowrap;--jpx:0.88;font-size:10.5px;color:#1a1a1a;line-height:12px;letter-spacing:-0.3px;max-width:35px;overflow:hidden;"><svg width="26.3" height="8.6" style="display:inline-block;vertical-align:-0.8px;overflow:visible;position:static"><path transform="translate(0.46,0) scale(0.758,0.861)" d="M5,0.3 L9.5,0.3 L9.5,1 Q7,2.5 7,5 Q7,7.5 9.5,9 L9.5,9.7 L5,9.7 Z" fill="#1a1a1a"/><path transform="translate(9.24,0) scale(0.758,0.861)" d="M2.5,1 L2.5,9 L9,4" fill="none" stroke="#1a1a1a" stroke-width="0.99" stroke-linecap="round" stroke-linejoin="round"/><path transform="translate(18.02,0) scale(0.758,0.861)" d="M7.5,0.8 L1.5,6 M5,3.8 L5,9.8" fill="none" stroke="#1a1a1a" stroke-width="0.99" stroke-linecap="round" stroke-linejoin="round"/></svg>…</div>
<div class="itemd" style="left:1907.5px;top:345.55px;width:36.5px;height:73.0px;"><div style="left:0;top:24px;width:34px;height:4px;background:#2c2c2c;clip-path:polygon(0 0,60% 0,100% 60%,100% 100%,0 100%)"></div></div>
<div style="left:1945.0px;top:331.54999999999995px;white-space:nowrap;--jpx:0.88;font-size:10.5px;color:#1a1a1a;line-height:12px;letter-spacing:-0.3px;max-width:35px;overflow:hidden;"><svg width="26.3" height="8.6" style="display:inline-block;vertical-align:-0.8px;overflow:visible;position:static"><path transform="translate(0.46,0) scale(0.758,0.861)" d="M5,0.3 L9.5,0.3 L9.5,1 Q7,2.5 7,5 Q7,7.5 9.5,9 L9.5,9.7 L5,9.7 Z" fill="#1a1a1a"/><path transform="translate(9.24,0) scale(0.758,0.861)" d="M2.5,1 L2.5,9 L9,4" fill="none" stroke="#1a1a1a" stroke-width="0.99" stroke-linecap="round" stroke-linejoin="round"/><path transform="translate(18.02,0) scale(0.758,0.861)" d="M7.5,0.8 L1.5,6 M5,3.8 L5,9.8" fill="none" stroke="#1a1a1a" stroke-width="0.99" stroke-linecap="round" stroke-linejoin="round"/></svg>…</div>
<div class="itemd" style="left:1944.0px;top:345.55px;width:36.5px;height:73.0px;"></div>
<div style="left:2200.5px;top:424.4px;white-space:nowrap;--jpx:0.88;font-size:10.5px;color:#1a1a1a;line-height:12px;letter-spacing:-0.3px;max-width:72px;overflow:hidden;"><svg width="52.7" height="8.6" style="display:inline-block;vertical-align:-0.8px;overflow:visible;position:static"><path transform="translate(0.46,0) scale(0.758,0.861)" d="M5,0.3 L9.5,0.3 L9.5,1 Q7,2.5 7,5 Q7,7.5 9.5,9 L9.5,9.7 L5,9.7 Z" fill="#1a1a1a"/><path transform="translate(9.24,0) scale(0.758,0.861)" d="M2.5,1 L2.5,9 L9,4" fill="none" stroke="#1a1a1a" stroke-width="0.99" stroke-linecap="round" stroke-linejoin="round"/><path transform="translate(18.02,0) scale(0.758,0.861)" d="M7.5,0.8 L1.5,6 M5,3.8 L5,9.8" fill="none" stroke="#1a1a1a" stroke-width="0.99" stroke-linecap="round" stroke-linejoin="round"/><path transform="translate(26.80,0) scale(0.758,0.861)" d="M1.5,1.5 L3.2,2.8 M1,4.5 L2.7,5.8 M2,9.5 Q7,7.5 9,2 M7.8,0.2 L8.5,1.6 M9.3,0.2 L10,1.6" fill="none" stroke="#1a1a1a" stroke-width="0.99" stroke-linecap="round" stroke-linejoin="round"/><path transform="translate(35.57,0) scale(0.758,0.861)" d="M1,5 L9,5" fill="none" stroke="#1a1a1a" stroke-width="0.99" stroke-linecap="round" stroke-linejoin="round"/><path transform="translate(44.35,0) scale(0.758,0.861)" d="M2,1.5 L8,1.5 M8,1.5 Q6,6.5 1.5,9.5 M5.2,5.8 L9,9.3" fill="none" stroke="#1a1a1a" stroke-width="0.99" stroke-linecap="round" stroke-linejoin="round"/></svg>…</div>
<div class="item" style="left:2199.5px;top:440.4px;width:73.0px;height:71.0px;"><div style="left:0;top:36px;width:72px;height:2px;background:#444"></div><div style="left:18px;top:35px;width:12px;height:2px;background:#444"></div><div style="left:50px;top:37px;width:16px;height:2px;background:#444"></div></div>
<div style="left:2273.5px;top:424.4px;white-space:nowrap;--jpx:0.88;font-size:10.5px;color:#1a1a1a;line-height:12px;letter-spacing:-0.3px;max-width:72px;overflow:hidden;"><svg width="52.7" height="8.6" style="display:inline-block;vertical-align:-0.8px;overflow:visible;position:static"><path transform="translate(0.46,0) scale(0.758,0.861)" d="M5,0.3 L9.5,0.3 L9.5,1 Q7,2.5 7,5 Q7,7.5 9.5,9 L9.5,9.7 L5,9.7 Z" fill="#1a1a1a"/><path transform="translate(9.24,0) scale(0.758,0.861)" d="M2.5,1 L2.5,9 L9,4" fill="none" stroke="#1a1a1a" stroke-width="0.99" stroke-linecap="round" stroke-linejoin="round"/><path transform="translate(18.02,0) scale(0.758,0.861)" d="M7.5,0.8 L1.5,6 M5,3.8 L5,9.8" fill="none" stroke="#1a1a1a" stroke-width="0.99" stroke-linecap="round" stroke-linejoin="round"/><path transform="translate(26.80,0) scale(0.758,0.861)" d="M1.5,1.5 L3.2,2.8 M1,4.5 L2.7,5.8 M2,9.5 Q7,7.5 9,2 M7.8,0.2 L8.5,1.6 M9.3,0.2 L10,1.6" fill="none" stroke="#1a1a1a" stroke-width="0.99" stroke-linecap="round" stroke-linejoin="round"/><path transform="translate(35.57,0) scale(0.758,0.861)" d="M1,5 L9,5" fill="none" stroke="#1a1a1a" stroke-width="0.99" stroke-linecap="round" stroke-linejoin="round"/><path transform="translate(44.35,0) scale(0.758,0.861)" d="M2,1.5 L8,1.5 M8,1.5 Q6,6.5 1.5,9.5 M5.2,5.8 L9,9.3" fill="none" stroke="#1a1a1a" stroke-width="0.99" stroke-linecap="round" stroke-linejoin="round"/></svg>…</div>
<div class="item" style="left:2272.5px;top:440.4px;width:73.0px;height:71.0px;"><div style="left:0;top:36px;width:72px;height:2px;background:#444"></div><div style="left:18px;top:35px;width:12px;height:2px;background:#444"></div><div style="left:50px;top:37px;width:16px;height:2px;background:#444"></div></div>
<div style="left:2346.5px;top:424.4px;white-space:nowrap;--jpx:0.88;font-size:10.5px;color:#1a1a1a;line-height:12px;letter-spacing:-0.3px;max-width:72px;overflow:hidden;"><svg width="52.7" height="8.6" style="display:inline-block;vertical-align:-0.8px;overflow:visible;position:static"><path transform="translate(0.46,0) scale(0.758,0.861)" d="M5,0.3 L9.5,0.3 L9.5,1 Q7,2.5 7,5 Q7,7.5 9.5,9 L9.5,9.7 L5,9.7 Z" fill="#1a1a1a"/><path transform="translate(9.24,0) scale(0.758,0.861)" d="M2.5,1 L2.5,9 L9,4" fill="none" stroke="#1a1a1a" stroke-width="0.99" stroke-linecap="round" stroke-linejoin="round"/><path transform="translate(18.02,0) scale(0.758,0.861)" d="M7.5,0.8 L1.5,6 M5,3.8 L5,9.8" fill="none" stroke="#1a1a1a" stroke-width="0.99" stroke-linecap="round" stroke-linejoin="round"/><path transform="translate(26.80,0) scale(0.758,0.861)" d="M1.5,1.5 L3.2,2.8 M1,4.5 L2.7,5.8 M2,9.5 Q7,7.5 9,2 M7.8,0.2 L8.5,1.6 M9.3,0.2 L10,1.6" fill="none" stroke="#1a1a1a" stroke-width="0.99" stroke-linecap="round" stroke-linejoin="round"/><path transform="translate(35.57,0) scale(0.758,0.861)" d="M1,5 L9,5" fill="none" stroke="#1a1a1a" stroke-width="0.99" stroke-linecap="round" stroke-linejoin="round"/><path transform="translate(44.35,0) scale(0.758,0.861)" d="M2,1.5 L8,1.5 M8,1.5 Q6,6.5 1.5,9.5 M5.2,5.8 L9,9.3" fill="none" stroke="#1a1a1a" stroke-width="0.99" stroke-linecap="round" stroke-linejoin="round"/></svg>…</div>
<div class="item" style="left:2345.5px;top:440.4px;width:73.0px;height:71.0px;"><div style="left:0;top:36px;width:72px;height:2px;background:#444"></div><div style="left:18px;top:35px;width:12px;height:2px;background:#444"></div><div style="left:50px;top:37px;width:16px;height:2px;background:#444"></div></div>
<div style="left:2419.5px;top:424.4px;white-space:nowrap;--jpx:0.88;font-size:10.5px;color:#1a1a1a;line-height:12px;letter-spacing:-0.3px;max-width:72px;overflow:hidden;"><svg width="52.7" height="8.6" style="display:inline-block;vertical-align:-0.8px;overflow:visible;position:static"><path transform="translate(0.46,0) scale(0.758,0.861)" d="M5,0.3 L9.5,0.3 L9.5,1 Q7,2.5 7,5 Q7,7.5 9.5,9 L9.5,9.7 L5,9.7 Z" fill="#1a1a1a"/><path transform="translate(9.24,0) scale(0.758,0.861)" d="M2.5,1 L2.5,9 L9,4" fill="none" stroke="#1a1a1a" stroke-width="0.99" stroke-linecap="round" stroke-linejoin="round"/><path transform="translate(18.02,0) scale(0.758,0.861)" d="M7.5,0.8 L1.5,6 M5,3.8 L5,9.8" fill="none" stroke="#1a1a1a" stroke-width="0.99" stroke-linecap="round" stroke-linejoin="round"/><path transform="translate(26.80,0) scale(0.758,0.861)" d="M1.5,1.5 L3.2,2.8 M1,4.5 L2.7,5.8 M2,9.5 Q7,7.5 9,2 M7.8,0.2 L8.5,1.6 M9.3,0.2 L10,1.6" fill="none" stroke="#1a1a1a" stroke-width="0.99" stroke-linecap="round" stroke-linejoin="round"/><path transform="translate(35.57,0) scale(0.758,0.861)" d="M1,5 L9,5" fill="none" stroke="#1a1a1a" stroke-width="0.99" stroke-linecap="round" stroke-linejoin="round"/><path transform="translate(44.35,0) scale(0.758,0.861)" d="M2,1.5 L8,1.5 M8,1.5 Q6,6.5 1.5,9.5 M5.2,5.8 L9,9.3" fill="none" stroke="#1a1a1a" stroke-width="0.99" stroke-linecap="round" stroke-linejoin="round"/></svg>…</div>
<div class="item" style="left:2418.5px;top:440.4px;width:73.0px;height:71.0px;"><div style="left:0;top:36px;width:72px;height:2px;background:#444"></div><div style="left:18px;top:35px;width:12px;height:2px;background:#444"></div><div style="left:50px;top:37px;width:16px;height:2px;background:#444"></div></div>
<div class="item" style="left:2053px;top:531.25px;width:19.5px;height:73.0px;"><div style="left:3px;top:36px;width:12px;height:6px;border:2px solid #333;border-top:none;border-radius:0 0 4px 4px"></div></div>
<div class="item" style="left:2108px;top:623.1px;width:19.5px;height:45.0px;"></div>
<div style="left:1907px;top:0px;width:1629px;height:25.5px;background:#474747"></div>
<div style="left:1907.6px;top:0px;width:1.0px;height:25.5px;background:#8c8c8c"></div>
<div style="left:1911.1px;top:-1px;white-space:nowrap;font-size:12.5px;font-weight:bold;color:#cdc6ba;letter-spacing:1.3px;line-height:13px">1.1.00</div>
<div style="left:1910.6px;top:12px;width:41.4px;height:1px;background:#b8b0a4"></div>
<div style="left:1911.1px;top:12.5px;white-space:nowrap;font-size:12.5px;font-weight:bold;color:#cdc6ba;letter-spacing:0.7px;line-height:13px">0:00.000</div>
<div style="left:2053.76px;top:0px;width:1.0px;height:25.5px;background:#8c8c8c"></div>
<div style="left:2057.2599999999998px;top:-1px;white-space:nowrap;font-size:12.5px;font-weight:bold;color:#cdc6ba;letter-spacing:1.3px;line-height:13px">9.1.00</div>
<div style="left:2056.76px;top:12px;width:41.4px;height:1px;background:#b8b0a4"></div>
<div style="left:2057.2599999999998px;top:12.5px;white-space:nowrap;font-size:12.5px;font-weight:bold;color:#cdc6ba;letter-spacing:0.7px;line-height:13px">0:16.000</div>
<div style="left:2199.92px;top:0px;width:1.0px;height:25.5px;background:#8c8c8c"></div>
<div style="left:2203.42px;top:-1px;white-space:nowrap;font-size:12.5px;font-weight:bold;color:#cdc6ba;letter-spacing:1.3px;line-height:13px">17.1.00</div>
<div style="left:2202.92px;top:12px;width:48.3px;height:1px;background:#b8b0a4"></div>
<div style="left:2203.42px;top:12.5px;white-space:nowrap;font-size:12.5px;font-weight:bold;color:#cdc6ba;letter-spacing:0.7px;line-height:13px">0:32.000</div>
<div style="left:2346.08px;top:0px;width:1.0px;height:25.5px;background:#8c8c8c"></div>
<div style="left:2349.58px;top:-1px;white-space:nowrap;font-size:12.5px;font-weight:bold;color:#cdc6ba;letter-spacing:1.3px;line-height:13px">25.1.00</div>
<div style="left:2349.08px;top:12px;width:48.3px;height:1px;background:#b8b0a4"></div>
<div style="left:2349.58px;top:12.5px;white-space:nowrap;font-size:12.5px;font-weight:bold;color:#cdc6ba;letter-spacing:0.7px;line-height:13px">0:48.000</div>
<div style="left:2492.24px;top:0px;width:1.0px;height:25.5px;background:#8c8c8c"></div>
<div style="left:2495.74px;top:-1px;white-space:nowrap;font-size:12.5px;font-weight:bold;color:#cdc6ba;letter-spacing:1.3px;line-height:13px">33.1.00</div>
<div style="left:2495.24px;top:12px;width:48.3px;height:1px;background:#b8b0a4"></div>
<div style="left:2495.74px;top:12.5px;white-space:nowrap;font-size:12.5px;font-weight:bold;color:#cdc6ba;letter-spacing:0.7px;line-height:13px">1:04.000</div>
<div style="left:2638.4px;top:0px;width:1.0px;height:25.5px;background:#8c8c8c"></div>
<div style="left:2641.8999999999996px;top:-1px;white-space:nowrap;font-size:12.5px;font-weight:bold;color:#cdc6ba;letter-spacing:1.3px;line-height:13px">41.1.00</div>
<div style="left:2641.4px;top:12px;width:48.3px;height:1px;background:#b8b0a4"></div>
<div style="left:2641.8999999999996px;top:12.5px;white-space:nowrap;font-size:12.5px;font-weight:bold;color:#cdc6ba;letter-spacing:0.7px;line-height:13px">1:20.000</div>
<div style="left:2784.56px;top:0px;width:1.0px;height:25.5px;background:#8c8c8c"></div>
<div style="left:2788.06px;top:-1px;white-space:nowrap;font-size:12.5px;font-weight:bold;color:#cdc6ba;letter-spacing:1.3px;line-height:13px">49.1.00</div>
<div style="left:2787.56px;top:12px;width:48.3px;height:1px;background:#b8b0a4"></div>
<div style="left:2788.06px;top:12.5px;white-space:nowrap;font-size:12.5px;font-weight:bold;color:#cdc6ba;letter-spacing:0.7px;line-height:13px">1:36.000</div>
<div style="left:2930.72px;top:0px;width:1.0px;height:25.5px;background:#8c8c8c"></div>
<div style="left:2934.22px;top:-1px;white-space:nowrap;font-size:12.5px;font-weight:bold;color:#cdc6ba;letter-spacing:1.3px;line-height:13px">57.1.00</div>
<div style="left:2933.72px;top:12px;width:48.3px;height:1px;background:#b8b0a4"></div>
<div style="left:2934.22px;top:12.5px;white-space:nowrap;font-size:12.5px;font-weight:bold;color:#cdc6ba;letter-spacing:0.7px;line-height:13px">1:52.000</div>
<div style="left:3076.88px;top:0px;width:1.0px;height:25.5px;background:#8c8c8c"></div>
<div style="left:3080.38px;top:-1px;white-space:nowrap;font-size:12.5px;font-weight:bold;color:#cdc6ba;letter-spacing:1.3px;line-height:13px">65.1.00</div>
<div style="left:3079.88px;top:12px;width:48.3px;height:1px;background:#b8b0a4"></div>
<div style="left:3080.38px;top:12.5px;white-space:nowrap;font-size:12.5px;font-weight:bold;color:#cdc6ba;letter-spacing:0.7px;line-height:13px">2:08.000</div>
<div style="left:3223.04px;top:0px;width:1.0px;height:25.5px;background:#8c8c8c"></div>
<div style="left:3226.54px;top:-1px;white-space:nowrap;font-size:12.5px;font-weight:bold;color:#cdc6ba;letter-spacing:1.3px;line-height:13px">73.1.00</div>
<div style="left:3226.04px;top:12px;width:48.3px;height:1px;background:#b8b0a4"></div>
<div style="left:3226.54px;top:12.5px;white-space:nowrap;font-size:12.5px;font-weight:bold;color:#cdc6ba;letter-spacing:0.7px;line-height:13px">2:24.000</div>
<div style="left:3369.2px;top:0px;width:1.0px;height:25.5px;background:#8c8c8c"></div>
<div style="left:3372.7px;top:-1px;white-space:nowrap;font-size:12.5px;font-weight:bold;color:#cdc6ba;letter-spacing:1.3px;line-height:13px">81.1.00</div>
<div style="left:3372.2px;top:12px;width:48.3px;height:1px;background:#b8b0a4"></div>
<div style="left:3372.7px;top:12.5px;white-space:nowrap;font-size:12.5px;font-weight:bold;color:#cdc6ba;letter-spacing:0.7px;line-height:13px">2:40.000</div>
<div style="left:3515.36px;top:0px;width:1.0px;height:25.5px;background:#8c8c8c"></div>
<div style="left:3518.8599999999997px;top:-1px;white-space:nowrap;font-size:12.5px;font-weight:bold;color:#cdc6ba;letter-spacing:1.3px;line-height:13px">89.1.00</div>
<div style="left:3518.36px;top:12px;width:48.3px;height:1px;background:#b8b0a4"></div>
<div style="left:3518.8599999999997px;top:12.5px;white-space:nowrap;font-size:12.5px;font-weight:bold;color:#cdc6ba;letter-spacing:0.7px;line-height:13px">2:56.000</div>
<div style="left:3661.52px;top:0px;width:1.0px;height:25.5px;background:#8c8c8c"></div>
<div style="left:3665.02px;top:-1px;white-space:nowrap;font-size:12.5px;font-weight:bold;color:#cdc6ba;letter-spacing:1.3px;line-height:13px">97.1.00</div>
<div style="left:3664.52px;top:12px;width:48.3px;height:1px;background:#b8b0a4"></div>
<div style="left:3665.02px;top:12.5px;white-space:nowrap;font-size:12.5px;font-weight:bold;color:#cdc6ba;letter-spacing:0.7px;line-height:13px">3:12.000</div>
<div style="left:1907px;top:25.5px;width:694.3px;height:4.3px;background:#f4f4f4"></div>
<div style="left:2601.3px;top:25.5px;width:934.7px;height:4.3px;background:#4a4a4a"></div>
<div style="left:1908px;top:26.5px;width:1px;height:3.3px;background:#8c8c8c"></div>
<div style="left:1917px;top:26.5px;width:1px;height:3.3px;background:#8c8c8c"></div>
<div style="left:1926px;top:26.5px;width:1px;height:3.3px;background:#8c8c8c"></div>
<div style="left:1935px;top:26.5px;width:1px;height:3.3px;background:#8c8c8c"></div>
<div style="left:1944px;top:26.5px;width:1px;height:3.3px;background:#8c8c8c"></div>
<div style="left:1953px;top:26.5px;width:1px;height:3.3px;background:#8c8c8c"></div>
<div style="left:1962px;top:26.5px;width:1px;height:3.3px;background:#8c8c8c"></div>
<div style="left:1972px;top:26.5px;width:1px;height:3.3px;background:#8c8c8c"></div>
<div style="left:1981px;top:26.5px;width:1px;height:3.3px;background:#8c8c8c"></div>
<div style="left:1990px;top:26.5px;width:1px;height:3.3px;background:#8c8c8c"></div>
<div style="left:1999px;top:26.5px;width:1px;height:3.3px;background:#8c8c8c"></div>
<div style="left:2008px;top:26.5px;width:1px;height:3.3px;background:#8c8c8c"></div>
<div style="left:2017px;top:26.5px;width:1px;height:3.3px;background:#8c8c8c"></div>
<div style="left:2026px;top:26.5px;width:1px;height:3.3px;background:#8c8c8c"></div>
<div style="left:2035px;top:26.5px;width:1px;height:3.3px;background:#8c8c8c"></div>
<div style="left:2045px;top:26.5px;width:1px;height:3.3px;background:#8c8c8c"></div>
<div style="left:2054px;top:26.5px;width:1px;height:3.3px;background:#8c8c8c"></div>
<div style="left:2063px;top:26.5px;width:1px;height:3.3px;background:#8c8c8c"></div>
<div style="left:2072px;top:26.5px;width:1px;height:3.3px;background:#8c8c8c"></div>
<div style="left:2081px;top:26.5px;width:1px;height:3.3px;background:#8c8c8c"></div>
<div style="left:2090px;top:26.5px;width:1px;height:3.3px;background:#8c8c8c"></div>
<div style="left:2099px;top:26.5px;width:1px;height:3.3px;background:#8c8c8c"></div>
<div style="left:2109px;top:26.5px;width:1px;height:3.3px;background:#8c8c8c"></div>
<div style="left:2118px;top:26.5px;width:1px;height:3.3px;background:#8c8c8c"></div>
<div style="left:2127px;top:26.5px;width:1px;height:3.3px;background:#8c8c8c"></div>
<div style="left:2136px;top:26.5px;width:1px;height:3.3px;background:#8c8c8c"></div>
<div style="left:2145px;top:26.5px;width:1px;height:3.3px;background:#8c8c8c"></div>
<div style="left:2154px;top:26.5px;width:1px;height:3.3px;background:#8c8c8c"></div>
<div style="left:2163px;top:26.5px;width:1px;height:3.3px;background:#8c8c8c"></div>
<div style="left:2173px;top:26.5px;width:1px;height:3.3px;background:#8c8c8c"></div>
<div style="left:2182px;top:26.5px;width:1px;height:3.3px;background:#8c8c8c"></div>
<div style="left:2191px;top:26.5px;width:1px;height:3.3px;background:#8c8c8c"></div>
<div style="left:2200px;top:26.5px;width:1px;height:3.3px;background:#8c8c8c"></div>
<div style="left:2209px;top:26.5px;width:1px;height:3.3px;background:#8c8c8c"></div>
<div style="left:2218px;top:26.5px;width:1px;height:3.3px;background:#8c8c8c"></div>
<div style="left:2227px;top:26.5px;width:1px;height:3.3px;background:#8c8c8c"></div>
<div style="left:2236px;top:26.5px;width:1px;height:3.3px;background:#8c8c8c"></div>
<div style="left:2246px;top:26.5px;width:1px;height:3.3px;background:#8c8c8c"></div>
<div style="left:2255px;top:26.5px;width:1px;height:3.3px;background:#8c8c8c"></div>
<div style="left:2264px;top:26.5px;width:1px;height:3.3px;background:#8c8c8c"></div>
<div style="left:2273px;top:26.5px;width:1px;height:3.3px;background:#8c8c8c"></div>
<div style="left:2282px;top:26.5px;width:1px;height:3.3px;background:#8c8c8c"></div>
<div style="left:2291px;top:26.5px;width:1px;height:3.3px;background:#8c8c8c"></div>
<div style="left:2300px;top:26.5px;width:1px;height:3.3px;background:#8c8c8c"></div>
<div style="left:2310px;top:26.5px;width:1px;height:3.3px;background:#8c8c8c"></div>
<div style="left:2319px;top:26.5px;width:1px;height:3.3px;background:#8c8c8c"></div>
<div style="left:2328px;top:26.5px;width:1px;height:3.3px;background:#8c8c8c"></div>
<div style="left:2337px;top:26.5px;width:1px;height:3.3px;background:#8c8c8c"></div>
<div style="left:2346px;top:26.5px;width:1px;height:3.3px;background:#8c8c8c"></div>
<div style="left:2355px;top:26.5px;width:1px;height:3.3px;background:#8c8c8c"></div>
<div style="left:2364px;top:26.5px;width:1px;height:3.3px;background:#8c8c8c"></div>
<div style="left:2373px;top:26.5px;width:1px;height:3.3px;background:#8c8c8c"></div>
<div style="left:2383px;top:26.5px;width:1px;height:3.3px;background:#8c8c8c"></div>
<div style="left:2392px;top:26.5px;width:1px;height:3.3px;background:#8c8c8c"></div>
<div style="left:2401px;top:26.5px;width:1px;height:3.3px;background:#8c8c8c"></div>
<div style="left:2410px;top:26.5px;width:1px;height:3.3px;background:#8c8c8c"></div>
<div style="left:2419px;top:26.5px;width:1px;height:3.3px;background:#8c8c8c"></div>
<div style="left:2428px;top:26.5px;width:1px;height:3.3px;background:#8c8c8c"></div>
<div style="left:2437px;top:26.5px;width:1px;height:3.3px;background:#8c8c8c"></div>
<div style="left:2447px;top:26.5px;width:1px;height:3.3px;background:#8c8c8c"></div>
<div style="left:2456px;top:26.5px;width:1px;height:3.3px;background:#8c8c8c"></div>
<div style="left:2465px;top:26.5px;width:1px;height:3.3px;background:#8c8c8c"></div>
<div style="left:2474px;top:26.5px;width:1px;height:3.3px;background:#8c8c8c"></div>
<div style="left:2483px;top:26.5px;width:1px;height:3.3px;background:#8c8c8c"></div>
<div style="left:2492px;top:26.5px;width:1px;height:3.3px;background:#8c8c8c"></div>
<div style="left:2501px;top:26.5px;width:1px;height:3.3px;background:#8c8c8c"></div>
<div style="left:2511px;top:26.5px;width:1px;height:3.3px;background:#8c8c8c"></div>
<div style="left:2520px;top:26.5px;width:1px;height:3.3px;background:#8c8c8c"></div>
<div style="left:2529px;top:26.5px;width:1px;height:3.3px;background:#8c8c8c"></div>
<div style="left:2538px;top:26.5px;width:1px;height:3.3px;background:#8c8c8c"></div>
<div style="left:2547px;top:26.5px;width:1px;height:3.3px;background:#8c8c8c"></div>
<div style="left:2556px;top:26.5px;width:1px;height:3.3px;background:#8c8c8c"></div>
<div style="left:2565px;top:26.5px;width:1px;height:3.3px;background:#8c8c8c"></div>
<div style="left:2574px;top:26.5px;width:1px;height:3.3px;background:#8c8c8c"></div>
<div style="left:2584px;top:26.5px;width:1px;height:3.3px;background:#8c8c8c"></div>
<div style="left:2593px;top:26.5px;width:1px;height:3.3px;background:#8c8c8c"></div>
<div style="left:2602px;top:26.3px;width:1px;height:3.5px;background:#9a9a9a"></div>
<div style="left:2611px;top:26.3px;width:1px;height:3.5px;background:#9a9a9a"></div>
<div style="left:2620px;top:26.3px;width:1px;height:3.5px;background:#9a9a9a"></div>
<div style="left:2629px;top:26.3px;width:1px;height:3.5px;background:#9a9a9a"></div>
<div style="left:2638px;top:26.3px;width:1px;height:3.5px;background:#9a9a9a"></div>
<div style="left:2648px;top:26.3px;width:1px;height:3.5px;background:#9a9a9a"></div>
<div style="left:2657px;top:26.3px;width:1px;height:3.5px;background:#9a9a9a"></div>
<div style="left:2666px;top:26.3px;width:1px;height:3.5px;background:#9a9a9a"></div>
<div style="left:2675px;top:26.3px;width:1px;height:3.5px;background:#9a9a9a"></div>
<div style="left:2684px;top:26.3px;width:1px;height:3.5px;background:#9a9a9a"></div>
<div style="left:2693px;top:26.3px;width:1px;height:3.5px;background:#9a9a9a"></div>
<div style="left:2702px;top:26.3px;width:1px;height:3.5px;background:#9a9a9a"></div>
<div style="left:2711px;top:26.3px;width:1px;height:3.5px;background:#9a9a9a"></div>
<div style="left:2721px;top:26.3px;width:1px;height:3.5px;background:#9a9a9a"></div>
<div style="left:2730px;top:26.3px;width:1px;height:3.5px;background:#9a9a9a"></div>
<div style="left:2739px;top:26.3px;width:1px;height:3.5px;background:#9a9a9a"></div>
<div style="left:2748px;top:26.3px;width:1px;height:3.5px;background:#9a9a9a"></div>
<div style="left:2757px;top:26.3px;width:1px;height:3.5px;background:#9a9a9a"></div>
<div style="left:2766px;top:26.3px;width:1px;height:3.5px;background:#9a9a9a"></div>
<div style="left:2775px;top:26.3px;width:1px;height:3.5px;background:#9a9a9a"></div>
<div style="left:2785px;top:26.3px;width:1px;height:3.5px;background:#9a9a9a"></div>
<div style="left:2794px;top:26.3px;width:1px;height:3.5px;background:#9a9a9a"></div>
<div style="left:2803px;top:26.3px;width:1px;height:3.5px;background:#9a9a9a"></div>
<div style="left:2812px;top:26.3px;width:1px;height:3.5px;background:#9a9a9a"></div>
<div style="left:2821px;top:26.3px;width:1px;height:3.5px;background:#9a9a9a"></div>
<div style="left:2830px;top:26.3px;width:1px;height:3.5px;background:#9a9a9a"></div>
<div style="left:2839px;top:26.3px;width:1px;height:3.5px;background:#9a9a9a"></div>
<div style="left:2849px;top:26.3px;width:1px;height:3.5px;background:#9a9a9a"></div>
<div style="left:2858px;top:26.3px;width:1px;height:3.5px;background:#9a9a9a"></div>
<div style="left:2867px;top:26.3px;width:1px;height:3.5px;background:#9a9a9a"></div>
<div style="left:2876px;top:26.3px;width:1px;height:3.5px;background:#9a9a9a"></div>
<div style="left:2885px;top:26.3px;width:1px;height:3.5px;background:#9a9a9a"></div>
<div style="left:2894px;top:26.3px;width:1px;height:3.5px;background:#9a9a9a"></div>
<div style="left:2903px;top:26.3px;width:1px;height:3.5px;background:#9a9a9a"></div>
<div style="left:2912px;top:26.3px;width:1px;height:3.5px;background:#9a9a9a"></div>
<div style="left:2922px;top:26.3px;width:1px;height:3.5px;background:#9a9a9a"></div>
<div style="left:2931px;top:26.3px;width:1px;height:3.5px;background:#9a9a9a"></div>
<div style="left:2940px;top:26.3px;width:1px;height:3.5px;background:#9a9a9a"></div>
<div style="left:2949px;top:26.3px;width:1px;height:3.5px;background:#9a9a9a"></div>
<div style="left:2958px;top:26.3px;width:1px;height:3.5px;background:#9a9a9a"></div>
<div style="left:2967px;top:26.3px;width:1px;height:3.5px;background:#9a9a9a"></div>
<div style="left:2976px;top:26.3px;width:1px;height:3.5px;background:#9a9a9a"></div>
<div style="left:2986px;top:26.3px;width:1px;height:3.5px;background:#9a9a9a"></div>
<div style="left:2995px;top:26.3px;width:1px;height:3.5px;background:#9a9a9a"></div>
<div style="left:3004px;top:26.3px;width:1px;height:3.5px;background:#9a9a9a"></div>
<div style="left:3013px;top:26.3px;width:1px;height:3.5px;background:#9a9a9a"></div>
<div style="left:3022px;top:26.3px;width:1px;height:3.5px;background:#9a9a9a"></div>
<div style="left:3031px;top:26.3px;width:1px;height:3.5px;background:#9a9a9a"></div>
<div style="left:3040px;top:26.3px;width:1px;height:3.5px;background:#9a9a9a"></div>
<div style="left:3049px;top:26.3px;width:1px;height:3.5px;background:#9a9a9a"></div>
<div style="left:3059px;top:26.3px;width:1px;height:3.5px;background:#9a9a9a"></div>
<div style="left:3068px;top:26.3px;width:1px;height:3.5px;background:#9a9a9a"></div>
<div style="left:3077px;top:26.3px;width:1px;height:3.5px;background:#9a9a9a"></div>
<div style="left:3086px;top:26.3px;width:1px;height:3.5px;background:#9a9a9a"></div>
<div style="left:3095px;top:26.3px;width:1px;height:3.5px;background:#9a9a9a"></div>
<div style="left:3104px;top:26.3px;width:1px;height:3.5px;background:#9a9a9a"></div>
<div style="left:3113px;top:26.3px;width:1px;height:3.5px;background:#9a9a9a"></div>
<div style="left:3123px;top:26.3px;width:1px;height:3.5px;background:#9a9a9a"></div>
<div style="left:3132px;top:26.3px;width:1px;height:3.5px;background:#9a9a9a"></div>
<div style="left:3141px;top:26.3px;width:1px;height:3.5px;background:#9a9a9a"></div>
<div style="left:3150px;top:26.3px;width:1px;height:3.5px;background:#9a9a9a"></div>
<div style="left:3159px;top:26.3px;width:1px;height:3.5px;background:#9a9a9a"></div>
<div style="left:3168px;top:26.3px;width:1px;height:3.5px;background:#9a9a9a"></div>
<div style="left:3177px;top:26.3px;width:1px;height:3.5px;background:#9a9a9a"></div>
<div style="left:3186px;top:26.3px;width:1px;height:3.5px;background:#9a9a9a"></div>
<div style="left:3196px;top:26.3px;width:1px;height:3.5px;background:#9a9a9a"></div>
<div style="left:3205px;top:26.3px;width:1px;height:3.5px;background:#9a9a9a"></div>
<div style="left:3214px;top:26.3px;width:1px;height:3.5px;background:#9a9a9a"></div>
<div style="left:3223px;top:26.3px;width:1px;height:3.5px;background:#9a9a9a"></div>
<div style="left:3232px;top:26.3px;width:1px;height:3.5px;background:#9a9a9a"></div>
<div style="left:3241px;top:26.3px;width:1px;height:3.5px;background:#9a9a9a"></div>
<div style="left:3250px;top:26.3px;width:1px;height:3.5px;background:#9a9a9a"></div>
<div style="left:3260px;top:26.3px;width:1px;height:3.5px;background:#9a9a9a"></div>
<div style="left:3269px;top:26.3px;width:1px;height:3.5px;background:#9a9a9a"></div>
<div style="left:3278px;top:26.3px;width:1px;height:3.5px;background:#9a9a9a"></div>
<div style="left:3287px;top:26.3px;width:1px;height:3.5px;background:#9a9a9a"></div>
<div style="left:3296px;top:26.3px;width:1px;height:3.5px;background:#9a9a9a"></div>
<div style="left:3305px;top:26.3px;width:1px;height:3.5px;background:#9a9a9a"></div>
<div style="left:3314px;top:26.3px;width:1px;height:3.5px;background:#9a9a9a"></div>
<div style="left:3324px;top:26.3px;width:1px;height:3.5px;background:#9a9a9a"></div>
<div style="left:3333px;top:26.3px;width:1px;height:3.5px;background:#9a9a9a"></div>
<div style="left:3342px;top:26.3px;width:1px;height:3.5px;background:#9a9a9a"></div>
<div style="left:3351px;top:26.3px;width:1px;height:3.5px;background:#9a9a9a"></div>
<div style="left:3360px;top:26.3px;width:1px;height:3.5px;background:#9a9a9a"></div>
<div style="left:3369px;top:26.3px;width:1px;height:3.5px;background:#9a9a9a"></div>
<div style="left:3378px;top:26.3px;width:1px;height:3.5px;background:#9a9a9a"></div>
<div style="left:3387px;top:26.3px;width:1px;height:3.5px;background:#9a9a9a"></div>
<div style="left:3397px;top:26.3px;width:1px;height:3.5px;background:#9a9a9a"></div>
<div style="left:3406px;top:26.3px;width:1px;height:3.5px;background:#9a9a9a"></div>
<div style="left:3415px;top:26.3px;width:1px;height:3.5px;background:#9a9a9a"></div>
<div style="left:3424px;top:26.3px;width:1px;height:3.5px;background:#9a9a9a"></div>
<div style="left:3433px;top:26.3px;width:1px;height:3.5px;background:#9a9a9a"></div>
<div style="left:3442px;top:26.3px;width:1px;height:3.5px;background:#9a9a9a"></div>
<div style="left:3451px;top:26.3px;width:1px;height:3.5px;background:#9a9a9a"></div>
<div style="left:3461px;top:26.3px;width:1px;height:3.5px;background:#9a9a9a"></div>
<div style="left:3470px;top:26.3px;width:1px;height:3.5px;background:#9a9a9a"></div>
<div style="left:3479px;top:26.3px;width:1px;height:3.5px;background:#9a9a9a"></div>
<div style="left:3488px;top:26.3px;width:1px;height:3.5px;background:#9a9a9a"></div>
<div style="left:3497px;top:26.3px;width:1px;height:3.5px;background:#9a9a9a"></div>
<div style="left:3506px;top:26.3px;width:1px;height:3.5px;background:#9a9a9a"></div>
<div style="left:3515px;top:26.3px;width:1px;height:3.5px;background:#9a9a9a"></div>
<div style="left:3524px;top:26.3px;width:1px;height:3.5px;background:#9a9a9a"></div>
<div style="left:3534px;top:26.3px;width:1px;height:3.5px;background:#9a9a9a"></div>
<div style="left:2594.3px;top:19px;width:8.0px;height:10.8px;background:#d8d8d8;clip-path:polygon(0 0,100% 0,100% 100%)"></div>
<div style="left:1907px;top:19px;width:8px;height:10.8px;background:#d8d8d8;clip-path:polygon(0 0,100% 0,0 100%)"></div>
<div style="left:2198.5px;top:0px;width:1.2px;height:663px;background:#8a1a1a"></div>
<div style="left:2193px;top:0px;width:12px;height:6px;background:#8a1a1a;clip-path:polygon(0 0,100% 0,50% 100%)"></div>
<div style="left:1905px;top:663px;width:1631px;height:2px;background:#1a1a1a"></div>
<div style="left:1675px;top:663px;width:230px;height:18px;background:#333"></div>
<div style="left:1680px;top:666px;white-space:nowrap;font-size:9.5px;color:#b4baba;line-height:12px">Track 7 [input] MIDI: All: All channels</div>
<div style="left:1905px;top:665px;width:1631px;height:16px;background:#2a2a2a"></div>
<div style="left:1909px;top:667px;width:12px;height:12px;border-radius:50%;background:radial-gradient(circle,#d0d0d0,#8a8a8a);border:1px solid #111"><div style="left:3px;top:3px;width:5px;height:5px;background:#222;clip-path:polygon(100% 0,100% 100%,0 50%)"></div></div>
<div style="left:1923px;top:667px;width:1600px;height:12px;background:linear-gradient(180deg,#181818,#2e2e2e);border:1px solid #111;border-radius:6px"></div>
<div style="left:1925px;top:670px;width:6px;height:6px;border-radius:50%;background:#d8d8d8"></div>
<div style="left:3507px;top:670px;width:6px;height:6px;border-radius:50%;background:#d8d8d8"></div>
<div style="left:2721px;top:670px;width:1px;height:7px;background:#888"></div>
<div style="left:3524px;top:667px;width:12px;height:12px;border-radius:50%;background:radial-gradient(circle,#d0d0d0,#8a8a8a);border:1px solid #111"><div style="left:4px;top:3px;width:5px;height:5px;background:#222;clip-path:polygon(0 0,100% 50%,0 100%)"></div></div>
<div style="left:1675px;top:681px;width:1861px;height:44px;background:linear-gradient(180deg,#3a3a3a 0%,#2c2c2c 20%,#2a2a2a 100%)"></div>
<div style="left:1675px;top:681px;width:1861px;height:1px;background:#1c1c1c"></div>
<div style="left:1675px;top:724px;width:1861px;height:1.5px;background:#1e1e1e"></div>
<div style="left:1679px;top:688px;width:146px;height:31px;background:linear-gradient(180deg,#4a4a4a,#2a2a2a);border:1px solid #111;border-radius:15px"></div>
<div style="left:1708.2px;top:689px;width:1.0px;height:29px;background:#151515"></div>
<div style="left:1737.4px;top:689px;width:1.0px;height:29px;background:#151515"></div>
<div style="left:1766.6px;top:689px;width:1.0px;height:29px;background:#151515"></div>
<div style="left:1795.8px;top:689px;width:1.0px;height:29px;background:#151515"></div>
<svg style="position:absolute;left:1679px;top:688px" width="146" height="31" fill="#c8c8c8">
<rect x="10" y="11" width="2.5" height="9"/><polygon points="20,11 20,20 13,15.5"/>
<rect x="40" y="11" width="9" height="9"/>
<polygon points="69,11 69,20 78,15.5"/>
<rect x="98" y="11" width="3" height="9"/><rect x="103" y="11" width="3" height="9"/>
<polygon points="126,11 126,20 133,15.5"/><rect x="134" y="11" width="2.5" height="9"/>
</svg>
<div style="left:1830px;top:688px;width:29.5px;height:30.5px;border-radius:50%;background:radial-gradient(circle at 50% 35%,#8a3030,#5a1818);border:1px solid #111"><div style="left:8px;top:8px;width:12px;height:12px;border-radius:50%;border:2.5px solid #c89898"></div></div>
<div style="left:1864px;top:688px;width:29.5px;height:30.5px;border-radius:50%;background:radial-gradient(circle at 50% 40%,#444,#222);border:1px solid #111"><svg style="position:absolute;left:6px;top:6px" width="16" height="16"><path d="M3,8 A5,5 0 0 1 12,5" fill="none" stroke="#bbb" stroke-width="2"/><path d="M13,8 A5,5 0 0 1 4,11" fill="none" stroke="#bbb" stroke-width="2"/><polygon points="10,2 14,5 10,7" fill="#bbb"/><polygon points="6,9 2,11 6,14" fill="#bbb"/></svg></div>
<div style="left:1901px;top:687px;width:58.5px;height:31px;background:linear-gradient(180deg,#3a3a3a,#2a2a2a);border:1px solid #1a1a1a;border-radius:2px"><span style="position:absolute;left:3px;top:2px;font-size:7.6px;font-weight:bold;color:#a8a8a8;letter-spacing:0px;white-space:nowrap">GLOBAL AUTO</span></div>
<div style="left:1904px;top:702px;width:52px;height:13px;background:#333;border:1px solid #222;border-radius:2px"><span style="position:absolute;left:19px;top:0px;font-size:9px;color:#666;font-weight:bold">NONE</span><div style="left:1px;top:1px;width:14px;height:10px;border-right:1px solid #222"></div><svg style="position:absolute;left:2px;top:1px" width="12" height="10"><polyline points="2,8 6,3 10,8" fill="none" stroke="#777" stroke-width="1"/></svg></div>
<div style="left:1968px;top:687.5px;width:296.5px;height:31.5px;background:linear-gradient(180deg,#383838,#2c2c2c);border:1px solid #1a1a1a;border-radius:3px"></div>
<div style="left:1975px;top:691px;white-space:nowrap;font-size:21.5px;font-weight:bold;color:#c4c8cc;line-height:24px">17.1.00 / 0:32.000</div>
<div style="left:2197px;top:693px;white-space:nowrap;font-size:14.5px;color:#a8acb0;line-height:17px">[Stopped]</div>
<div style="left:2273.4px;top:687.5px;width:42.1px;height:31.5px;background:linear-gradient(180deg,#363636,#2c2c2c);border:1px solid #1a1a1a;border-radius:3px"><span style="position:absolute;left:12px;top:3px;font-size:9.5px;color:#a0a4a8">BPM</span><span style="position:absolute;left:13px;top:15px;font-size:9.5px;color:#a0a4a8">120</span></div>
<div style="left:2324px;top:687.5px;width:31px;height:31.5px;background:linear-gradient(180deg,#363636,#2c2c2c);border:1px solid #1a1a1a;border-radius:3px"><span style="position:absolute;left:8px;top:9px;font-size:9.5px;color:#a0a4a8">4/4</span></div>
<div style="left:2364px;top:687px;width:201.5px;height:32px;background:#2c2c2c;border:1px solid #1a1a1a;border-radius:3px"></div>
<div style="left:2364px;top:687px;width:201.5px;height:15px;background:linear-gradient(180deg,#3a3a3a,#2e2e2e);border:1px solid #1a1a1a;border-radius:3px 3px 0 0"><span style="position:absolute;left:6px;top:1px;font-size:9.5px;color:#a0a4a8">Rate:</span><span style="position:absolute;left:112px;top:1px;font-size:9.5px;color:#a0a4a8">1.0</span></div>
<div style="left:2375px;top:710px;width:180px;height:1px;background:#555"></div>
<div style="left:2452.8px;top:705px;width:24.2px;height:12px;background:linear-gradient(90deg,#aaa,#f4f4f4 40%,#ddd 70%,#999);border-radius:2px"><div style="left:11px;top:2px;width:1px;height:8px;background:#333"></div></div>
<div style="left:3363.4px;top:696.5px;width:172.6px;height:15.0px;background:#303030;border:1px solid #1a1a1a;border-radius:2px"><span style="position:absolute;left:3px;top:1px;font-size:9.5px;color:#a8acb0">Selection:</span><span style="position:absolute;left:62px;top:1px;font-size:9.5px;color:#a8acb0">1.1.00</span><span style="position:absolute;left:117px;top:1px;font-size:9.5px;color:#a8acb0">39.1.00</span><div style="left:47px;top:0;width:1px;height:100%;background:#222"></div><div style="left:103px;top:0;width:1px;height:100%;background:#222"></div><div style="left:158px;top:0;width:1px;height:100%;background:#222"></div></div>
<div style="left:1675px;top:725.5px;width:1861px;height:198.5px;background:#333"></div>
<div style="left:1675px;top:729px;width:119.5px;height:43px;background:#2c2c2c"></div>
<div style="left:1678px;top:734.5px;width:21.5px;height:29.5px;background:linear-gradient(180deg,#a8b4b4,#8a9696);border:1px solid #1e1e1e;border-radius:2px"><svg style="position:absolute;left:5px;top:2px" width="10" height="10"><path d="M3.2,3.0 A3.3,3.3 0 1 0 6.8,3.0" fill="none" stroke="#445" stroke-width="1.2"/><line x1="5.0" y1="1.0" x2="5.0" y2="5.0" stroke="#445" stroke-width="1.2"/></svg><span style="position:absolute;left:2px;top:14px;font-size:10.5px;color:#445;letter-spacing:1.5px">FX</span></div>
<div style="left:1678px;top:749px;width:21.5px;height:1px;background:#6a7676"></div>
<div style="left:1704.5px;top:734.5px;width:38.0px;height:14.5px;background:#1c1c1c;border:1px solid #444;border-radius:2px"><span style="position:absolute;left:8px;top:0px;font-size:11px;color:#d8d8d8;letter-spacing:1.5px">I/O</span></div>
<div style="left:1704px;top:751px;white-space:nowrap;font-size:12.8px;color:#d0d0d0;line-height:15px;letter-spacing:-0.3px">MASTEF</div>
<div style="left:1675px;top:772px;width:119.5px;height:152px;background:linear-gradient(180deg,#bcc8c8,#aab6b6)"></div>
<div style="left:1682px;top:783px;width:40.7px;height:14px;background:linear-gradient(180deg,#b4c0c0,#98a4a4);border:1px solid #4a5656;border-radius:1px"><span style="position:absolute;left:5px;top:0px;font-size:10.5px;color:#2a3030">MONO</span></div>
<div style="left:1738px;top:786px;width:48.7px;height:10.5px;background:#7e8c8c;border-radius:2px"><span style="position:absolute;right:3px;top:-1px;font-size:10.5px;color:#e4ecec">center</span></div>
<div style="left:1730px;top:780.5px;width:21.5px;height:21.5px;border-radius:50%;background:radial-gradient(circle at 45% 35%,#fafafa,#c8c8c8 60%,#8a8a8a);border:2px solid #5a6464"><div style="left:9px;top:1px;width:1px;height:8px;background:#333"></div></div>
<div style="left:1683.6px;top:810px;width:79.4px;height:114px;background:#2e2e2e;border:1px solid #1a1a1a;border-radius:2px"></div>
<div style="left:1700px;top:821px;width:62px;height:8px;background:#262626"><span style="position:absolute;left:3px;top:-3px;font-size:10px;font-weight:bold;color:#e8e8e8">-47.6</span><span style="position:absolute;left:32px;top:-3px;font-size:10px;font-weight:bold;color:#e8e8e8">-49.8</span></div>
<div style="left:1720px;top:830px;width:10px;height:94px;background:#383838"></div>
<div style="left:1745px;top:830px;width:10px;height:94px;background:#383838"></div>
<div style="left:1702px;top:831.0px;white-space:nowrap;font-size:10px;color:#c8c8c8;line-height:11px;letter-spacing:-0.5px">12</div>
<div style="left:1751.0px;top:831.0px;white-space:nowrap;font-size:10px;color:#c8c8c8;line-height:11px;letter-spacing:-0.5px">12</div>
<div style="left:1702px;top:844.2px;white-space:nowrap;font-size:10px;color:#c8c8c8;line-height:11px;letter-spacing:-0.5px">6</div>
<div style="left:1756.5px;top:844.2px;white-space:nowrap;font-size:10px;color:#c8c8c8;line-height:11px;letter-spacing:-0.5px">6</div>
<div style="left:1702px;top:857.4px;white-space:nowrap;font-size:10px;color:#c8c8c8;line-height:11px;letter-spacing:-0.5px">0-</div>
<div style="left:1751.0px;top:857.4px;white-space:nowrap;font-size:10px;color:#c8c8c8;line-height:11px;letter-spacing:-0.5px">-0</div>
<div style="left:1702px;top:870.6px;white-space:nowrap;font-size:10px;color:#c8c8c8;line-height:11px;letter-spacing:-0.5px">6-</div>
<div style="left:1751.0px;top:870.6px;white-space:nowrap;font-size:10px;color:#c8c8c8;line-height:11px;letter-spacing:-0.5px">-6</div>
<div style="left:1702px;top:883.8px;white-space:nowrap;font-size:10px;color:#c8c8c8;line-height:11px;letter-spacing:-0.5px">12-</div>
<div style="left:1745.5px;top:883.8px;white-space:nowrap;font-size:10px;color:#c8c8c8;line-height:11px;letter-spacing:-0.5px">-12</div>
<div style="left:1702px;top:897.0px;white-space:nowrap;font-size:10px;color:#c8c8c8;line-height:11px;letter-spacing:-0.5px">18-</div>
<div style="left:1745.5px;top:897.0px;white-space:nowrap;font-size:10px;color:#c8c8c8;line-height:11px;letter-spacing:-0.5px">-18</div>
<div style="left:1702px;top:910.2px;white-space:nowrap;font-size:10px;color:#c8c8c8;line-height:11px;letter-spacing:-0.5px">24-</div>
<div style="left:1745.5px;top:910.2px;white-space:nowrap;font-size:10px;color:#c8c8c8;line-height:11px;letter-spacing:-0.5px">-24</div>
<div style="left:1723.2px;top:839.0px;white-space:nowrap;font-size:10px;color:#c8c8c8;line-height:11px;letter-spacing:-0.5px">-6-</div>
<div style="left:1720.6px;top:865.4px;white-space:nowrap;font-size:10px;color:#c8c8c8;line-height:11px;letter-spacing:-0.5px">-18-</div>
<div style="left:1720.6px;top:891.8px;white-space:nowrap;font-size:10px;color:#c8c8c8;line-height:11px;letter-spacing:-0.5px">-30-</div>
<div style="left:1720.6px;top:918.2px;white-space:nowrap;font-size:10px;color:#c8c8c8;line-height:11px;letter-spacing:-0.5px">-42-</div>
<div style="left:1700px;top:853px;width:8px;height:11px;background:#8a8a8a;opacity:0.7"></div>
<div style="left:1751px;top:853px;width:8px;height:11px;background:#8a8a8a;opacity:0.7"></div>
<div style="left:1692px;top:828px;width:1px;height:96px;background:#111"></div>
<div style="left:1687px;top:862.5px;width:13px;height:1.0px;background:#111"></div>
<div style="left:1686px;top:886px;width:13px;height:31px;background:linear-gradient(90deg,#b8b8b8,#fafafa 35%,#e8e8e8 70%,#a8a8a8);border-radius:2px;box-shadow:0 1px 2px #000"><div style="left:2px;top:14px;width:9px;height:1px;background:#333"></div></div>
<div style="left:1770.6px;top:810.3px;width:15.8px;height:15.7px;background:linear-gradient(180deg,#f4f4f4,#cfcfcf);border:1px solid #6a7070;border-radius:2px"><span style="position:absolute;left:2.5px;top:0px;font-size:12px;color:#a01010">M</span></div>
<div style="left:1770.6px;top:832px;width:15.8px;height:16px;background:linear-gradient(180deg,#f4f4f4,#cfcfcf);border:1px solid #6a7070;border-radius:2px"><span style="position:absolute;left:3.5px;top:1px;font-size:11px;color:#6a6a10">S</span></div>
<div style="left:1770.6px;top:852px;width:15.8px;height:14px;background:linear-gradient(180deg,#b8c4c4,#9aa6a6);border:1px solid #5e6a6a;border-radius:1px"><svg width="16" height="14"><polyline points="3,9 8,4 13,9" fill="none" stroke="#222" stroke-width="1.2"/></svg></div>
<div style="left:1770.6px;top:866px;width:15.8px;height:12px;background:#8a9898;border:1px solid #6a7878"><span style="position:absolute;left:1px;top:0px;font-size:9px;font-weight:bold;color:#e8f0f0">TR</span></div>
<div style="left:1794.5px;top:725.5px;width:1.0px;height:198.5px;background:#1e1e1e"></div>
<div style="left:1795.0px;top:729px;width:72.85px;height:57px;background:#2c2c2c"></div>
<div style="left:1866.85px;top:729px;width:1.0px;height:195px;background:#1e1e1e"></div>
<div style="left:1799.0px;top:734.5px;width:22.0px;height:29.5px;background:linear-gradient(180deg,#6cd47a,#3fae50);border:1px solid #244a28;border-radius:2px"><svg style="position:absolute;left:5px;top:2px" width="10" height="10"><path d="M3.2,3.0 A3.3,3.3 0 1 0 6.8,3.0" fill="none" stroke="#0a3a10" stroke-width="1.2"/><line x1="5.0" y1="1.0" x2="5.0" y2="5.0" stroke="#0a3a10" stroke-width="1.2"/></svg><span style="position:absolute;left:3px;top:15px;font-size:10px;line-height:12px;color:#0a3a10;letter-spacing:2.5px">FX</span></div>
<div style="left:1799.0px;top:749px;width:22.0px;height:1px;background:#2a7a34"></div>
<div style="left:1825.0px;top:734.5px;width:38.0px;height:29.5px;background:#1c1c1c;border:1px solid #3a3a3a;border-radius:2px"><span style="position:absolute;left:2px;top:1px;font-size:7.5px;line-height:8px;font-weight:bold;color:#58c060;white-space:nowrap">MASTER</span><span style="position:absolute;left:2px;top:8.5px;font-size:6.5px;line-height:7px;font-weight:bold;color:#3e4e40;white-space:nowrap">RCV SND</span><span style="position:absolute;left:7px;top:15px;font-size:10px;line-height:12px;color:#e0e0e0;letter-spacing:2.5px;white-space:nowrap">I/O</span></div>
<div style="left:1803.0px;top:769px;white-space:nowrap;--jpx:0.78;font-size:13.5px;color:#d4d4d4;line-height:15px;max-width:67.85px;overflow:hidden;letter-spacing:-0.4px">DrumKit1</div>
<div style="left:1795.0px;top:786px;width:71.85px;height:138px;background:linear-gradient(180deg,#bcc8c8,#aab6b6)"></div>
<div style="left:1815.0px;top:803.5px;width:45.0px;height:14.5px;background:#7e8c8c;border-radius:2px"><span style="position:absolute;right:3px;top:0px;font-size:10.5px;color:#e4ecec">center</span></div>
<div style="left:1802.5px;top:800px;width:22.0px;height:22px;border-radius:50%;background:radial-gradient(circle at 45% 35%,#fafafa,#c8c8c8 60%,#8a8a8a);border:2px solid #5a6464"><div style="left:8.5px;top:1px;width:1px;height:8px;background:#333;"></div></div>
<div style="left:1803.0px;top:836.7px;width:33.0px;height:87.3px;background:linear-gradient(90deg,#3a3a3a,#2a2a2a);border:1px solid #1a1a1a;border-radius:2px"></div>
<div style="left:1822.0px;top:842px;width:12.0px;height:82px;background:#262626"></div>
<div style="left:1823.0px;top:843px;width:5.0px;height:81px;background:#2e2e2e"></div>
<div style="left:1829.0px;top:843px;width:5.0px;height:81px;background:#2e2e2e"></div>
<div style="left:1812.0px;top:855px;width:1.5px;height:69px;background:#111"></div>
<div style="left:1805.5px;top:862px;width:14.0px;height:32px;background:linear-gradient(90deg,#b8b8b8,#fafafa 35%,#e8e8e8 70%,#a8a8a8);border-radius:2px;box-shadow:0 1px 2px #000"><div style="left:2px;top:15px;width:10px;height:1px;background:#333"></div></div>
<div style="left:1843.0px;top:836.7px;width:16.0px;height:15.7px;background:linear-gradient(180deg,#f4f4f4,#cfcfcf);border:1px solid #6a7070;border-radius:2px"><span style="position:absolute;left:2.5px;top:0px;font-size:12px;color:#a01010">M</span></div>
<div style="left:1843.0px;top:857px;width:16.0px;height:16px;background:linear-gradient(180deg,#f4f4f4,#cfcfcf);border:1px solid #6a7070;border-radius:2px"><span style="position:absolute;left:3.5px;top:1px;font-size:11px;color:#6a6a10">S</span></div>
<div style="left:1843.0px;top:878px;width:16.0px;height:13px;background:linear-gradient(180deg,#4cc25c,#2e9a3e);border:1px solid #4a6a50;border-radius:2px"><div style="left:4.5px;top:2.5px;width:7px;height:7px;background:#0a3010;clip-path:polygon(0 0,100% 50%,0 100%)"></div></div>
<div style="left:1843.0px;top:895px;width:16.0px;height:13.5px;background:linear-gradient(180deg,#b8c4c4,#9aa6a6);border:1px solid #5e6a6a;border-radius:1px"><svg width="16" height="13"><polyline points="3,9 8,4 13,9" fill="none" stroke="#222" stroke-width="1.2"/></svg></div>
<div style="left:1867.85px;top:729px;width:72.85px;height:57px;background:#2c2c2c"></div>
<div style="left:1939.7px;top:729px;width:1.0px;height:195px;background:#1e1e1e"></div>
<div style="left:1871.85px;top:734.5px;width:22.0px;height:29.5px;background:linear-gradient(180deg,#6cd47a,#3fae50);border:1px solid #244a28;border-radius:2px"><svg style="position:absolute;left:5px;top:2px" width="10" height="10"><path d="M3.2,3.0 A3.3,3.3 0 1 0 6.8,3.0" fill="none" stroke="#0a3a10" stroke-width="1.2"/><line x1="5.0" y1="1.0" x2="5.0" y2="5.0" stroke="#0a3a10" stroke-width="1.2"/></svg><span style="position:absolute;left:3px;top:15px;font-size:10px;line-height:12px;color:#0a3a10;letter-spacing:2.5px">FX</span></div>
<div style="left:1871.85px;top:749px;width:22.0px;height:1px;background:#2a7a34"></div>
<div style="left:1897.85px;top:734.5px;width:38.0px;height:29.5px;background:#1c1c1c;border:1px solid #3a3a3a;border-radius:2px"><span style="position:absolute;left:2px;top:1px;font-size:7.5px;line-height:8px;font-weight:bold;color:#58c060;white-space:nowrap">MASTER</span><span style="position:absolute;left:2px;top:8.5px;font-size:6.5px;line-height:7px;font-weight:bold;color:#3e4e40;white-space:nowrap">RCV SND</span><span style="position:absolute;left:7px;top:15px;font-size:10px;line-height:12px;color:#e0e0e0;letter-spacing:2.5px;white-space:nowrap">I/O</span></div>
<div style="left:1875.85px;top:769px;white-space:nowrap;--jpx:0.78;font-size:13.5px;color:#d4d4d4;line-height:15px;max-width:67.85px;overflow:hidden;letter-spacing:-0.4px">DrumKit1</div>
<div style="left:1867.85px;top:786px;width:71.85px;height:138px;background:linear-gradient(180deg,#bcc8c8,#aab6b6)"></div>
<div style="left:1887.85px;top:803.5px;width:45.0px;height:14.5px;background:#7e8c8c;border-radius:2px"><span style="position:absolute;right:3px;top:0px;font-size:10.5px;color:#e4ecec">center</span></div>
<div style="left:1875.35px;top:800px;width:22.0px;height:22px;border-radius:50%;background:radial-gradient(circle at 45% 35%,#fafafa,#c8c8c8 60%,#8a8a8a);border:2px solid #5a6464"><div style="left:8.5px;top:1px;width:1px;height:8px;background:#333;"></div></div>
<div style="left:1875.85px;top:836.7px;width:33.0px;height:87.3px;background:linear-gradient(90deg,#3a3a3a,#2a2a2a);border:1px solid #1a1a1a;border-radius:2px"></div>
<div style="left:1894.85px;top:842px;width:12.0px;height:82px;background:#262626"></div>
<div style="left:1895.85px;top:843px;width:5.0px;height:81px;background:#2e2e2e"></div>
<div style="left:1901.85px;top:843px;width:5.0px;height:81px;background:#2e2e2e"></div>
<div style="left:1884.85px;top:855px;width:1.5px;height:69px;background:#111"></div>
<div style="left:1894.85px;top:847px;width:11.0px;height:11px;background:#d03030;border-radius:1px"><span style="position:absolute;left:1px;top:0px;font-size:9px;font-weight:bold;color:#fdd">M</span></div>
<div style="left:1878.35px;top:874.5px;width:14.0px;height:32.0px;background:linear-gradient(90deg,#b8b8b8,#fafafa 35%,#e8e8e8 70%,#a8a8a8);border-radius:2px;box-shadow:0 1px 2px #000"><div style="left:2px;top:15px;width:10px;height:1px;background:#333"></div></div>
<div style="left:1915.85px;top:836.7px;width:16.0px;height:15.7px;background:linear-gradient(180deg,#f07070,#d84848);border:1px solid #6a7070;border-radius:2px"><span style="position:absolute;left:2.5px;top:0px;font-size:12px;color:#a01010">M</span></div>
<div style="left:1915.85px;top:857px;width:16.0px;height:16px;background:linear-gradient(180deg,#f4f4f4,#cfcfcf);border:1px solid #6a7070;border-radius:2px"><span style="position:absolute;left:3.5px;top:1px;font-size:11px;color:#6a6a10">S</span></div>
<div style="left:1915.85px;top:878px;width:16.0px;height:13px;background:linear-gradient(180deg,#4cc25c,#2e9a3e);border:1px solid #4a6a50;border-radius:2px"><div style="left:4.5px;top:2.5px;width:7px;height:7px;background:#0a3010;clip-path:polygon(0 0,100% 50%,0 100%)"></div></div>
<div style="left:1915.85px;top:895px;width:16.0px;height:13.5px;background:linear-gradient(180deg,#b8c4c4,#9aa6a6);border:1px solid #5e6a6a;border-radius:1px"><svg width="16" height="13"><polyline points="3,9 8,4 13,9" fill="none" stroke="#222" stroke-width="1.2"/></svg></div>
<div style="left:1940.7px;top:729px;width:72.85px;height:57px;background:#2c2c2c"></div>
<div style="left:2012.55px;top:729px;width:1.0px;height:195px;background:#1e1e1e"></div>
<div style="left:1944.7px;top:734.5px;width:22.0px;height:29.5px;background:linear-gradient(180deg,#6cd47a,#3fae50);border:1px solid #244a28;border-radius:2px"><svg style="position:absolute;left:5px;top:2px" width="10" height="10"><path d="M3.2,3.0 A3.3,3.3 0 1 0 6.8,3.0" fill="none" stroke="#0a3a10" stroke-width="1.2"/><line x1="5.0" y1="1.0" x2="5.0" y2="5.0" stroke="#0a3a10" stroke-width="1.2"/></svg><span style="position:absolute;left:3px;top:15px;font-size:10px;line-height:12px;color:#0a3a10;letter-spacing:2.5px">FX</span></div>
<div style="left:1944.7px;top:749px;width:22.0px;height:1px;background:#2a7a34"></div>
<div style="left:1970.7px;top:734.5px;width:38.0px;height:29.5px;background:#1c1c1c;border:1px solid #3a3a3a;border-radius:2px"><span style="position:absolute;left:2px;top:1px;font-size:7.5px;line-height:8px;font-weight:bold;color:#58c060;white-space:nowrap">MASTER</span><span style="position:absolute;left:2px;top:8.5px;font-size:6.5px;line-height:7px;font-weight:bold;color:#3e4e40;white-space:nowrap">RCV SND</span><span style="position:absolute;left:7px;top:15px;font-size:10px;line-height:12px;color:#e0e0e0;letter-spacing:2.5px;white-space:nowrap">I/O</span></div>
<div style="left:1941.7px;top:769px;white-space:nowrap;--jpx:0.78;font-size:13.5px;color:#d4d4d4;line-height:15px;max-width:67.85px;overflow:hidden;letter-spacing:-0.4px"><svg width="60.0" height="11.1" style="display:inline-block;vertical-align:-1.1px;overflow:visible;position:static"><path transform="translate(0.53,0) scale(0.863,1.107)" d="M5,0.3 L9.5,0.3 L9.5,1 Q7,2.5 7,5 Q7,7.5 9.5,9 L9.5,9.7 L5,9.7 Z" fill="#d4d4d4"/><path transform="translate(10.53,0) scale(0.863,1.107)" d="M2.5,1 L2.5,9 L9,4" fill="none" stroke="#d4d4d4" stroke-width="1.04" stroke-linecap="round" stroke-linejoin="round"/><path transform="translate(20.53,0) scale(0.863,1.107)" d="M7.5,0.8 L1.5,6 M5,3.8 L5,9.8" fill="none" stroke="#d4d4d4" stroke-width="1.04" stroke-linecap="round" stroke-linejoin="round"/><path transform="translate(30.54,0) scale(0.863,1.107)" d="M1.5,1.5 L3.2,2.8 M1,4.5 L2.7,5.8 M2,9.5 Q7,7.5 9,2 M7.8,0.2 L8.5,1.6 M9.3,0.2 L10,1.6" fill="none" stroke="#d4d4d4" stroke-width="1.04" stroke-linecap="round" stroke-linejoin="round"/><path transform="translate(40.54,0) scale(0.863,1.107)" d="M1,5 L9,5" fill="none" stroke="#d4d4d4" stroke-width="1.04" stroke-linecap="round" stroke-linejoin="round"/><path transform="translate(50.54,0) scale(0.863,1.107)" d="M2,1.5 L8,1.5 M8,1.5 Q6,6.5 1.5,9.5 M5.2,5.8 L9,9.3" fill="none" stroke="#d4d4d4" stroke-width="1.04" stroke-linecap="round" stroke-linejoin="round"/></svg>:</div>
<div style="left:1940.7px;top:786px;width:71.85px;height:138px;background:linear-gradient(180deg,#bcc8c8,#aab6b6)"></div>
<div style="left:1960.7px;top:803.5px;width:45.0px;height:14.5px;background:#7e8c8c;border-radius:2px"><span style="position:absolute;right:3px;top:0px;font-size:10.5px;color:#e4ecec">center</span></div>
<div style="left:1948.2px;top:800px;width:22.0px;height:22px;border-radius:50%;background:radial-gradient(circle at 45% 35%,#fafafa,#c8c8c8 60%,#8a8a8a);border:2px solid #5a6464"><div style="left:8.5px;top:1px;width:1px;height:8px;background:#333;"></div></div>
<div style="left:1948.7px;top:836.7px;width:33.0px;height:87.3px;background:linear-gradient(90deg,#3a3a3a,#2a2a2a);border:1px solid #1a1a1a;border-radius:2px"></div>
<div style="left:1967.7px;top:842px;width:12.0px;height:82px;background:#262626"></div>
<div style="left:1968.7px;top:843px;width:5.0px;height:81px;background:#2e2e2e"></div>
<div style="left:1974.7px;top:843px;width:5.0px;height:81px;background:#2e2e2e"></div>
<div style="left:1957.7px;top:855px;width:1.5px;height:69px;background:#111"></div>
<div style="left:1951.2px;top:862.4px;width:14.0px;height:32.0px;background:linear-gradient(90deg,#b8b8b8,#fafafa 35%,#e8e8e8 70%,#a8a8a8);border-radius:2px;box-shadow:0 1px 2px #000"><div style="left:2px;top:15px;width:10px;height:1px;background:#333"></div></div>
<div style="left:1988.7px;top:836.7px;width:16.0px;height:15.7px;background:linear-gradient(180deg,#f4f4f4,#cfcfcf);border:1px solid #6a7070;border-radius:2px"><span style="position:absolute;left:2.5px;top:0px;font-size:12px;color:#a01010">M</span></div>
<div style="left:1988.7px;top:857px;width:16.0px;height:16px;background:linear-gradient(180deg,#f4f4f4,#cfcfcf);border:1px solid #6a7070;border-radius:2px"><span style="position:absolute;left:3.5px;top:1px;font-size:11px;color:#6a6a10">S</span></div>
<div style="left:1988.7px;top:878px;width:16.0px;height:13px;background:linear-gradient(180deg,#4cc25c,#2e9a3e);border:1px solid #4a6a50;border-radius:2px"><div style="left:4.5px;top:2.5px;width:7px;height:7px;background:#0a3010;clip-path:polygon(0 0,100% 50%,0 100%)"></div></div>
<div style="left:1988.7px;top:895px;width:16.0px;height:13.5px;background:linear-gradient(180deg,#b8c4c4,#9aa6a6);border:1px solid #5e6a6a;border-radius:1px"><svg width="16" height="13"><polyline points="3,9 8,4 13,9" fill="none" stroke="#222" stroke-width="1.2"/></svg></div>
<div style="left:2013.55px;top:729px;width:72.85px;height:57px;background:#2c2c2c"></div>
<div style="left:2085.4px;top:729px;width:1.0px;height:195px;background:#1e1e1e"></div>
<div style="left:2017.55px;top:734.5px;width:22.0px;height:29.5px;background:linear-gradient(180deg,#6cd47a,#3fae50);border:1px solid #244a28;border-radius:2px"><svg style="position:absolute;left:5px;top:2px" width="10" height="10"><path d="M3.2,3.0 A3.3,3.3 0 1 0 6.8,3.0" fill="none" stroke="#0a3a10" stroke-width="1.2"/><line x1="5.0" y1="1.0" x2="5.0" y2="5.0" stroke="#0a3a10" stroke-width="1.2"/></svg><span style="position:absolute;left:3px;top:15px;font-size:10px;line-height:12px;color:#0a3a10;letter-spacing:2.5px">FX</span></div>
<div style="left:2017.55px;top:749px;width:22.0px;height:1px;background:#2a7a34"></div>
<div style="left:2043.55px;top:734.5px;width:38.0px;height:29.5px;background:#1c1c1c;border:1px solid #3a3a3a;border-radius:2px"><span style="position:absolute;left:2px;top:1px;font-size:7.5px;line-height:8px;font-weight:bold;color:#58c060;white-space:nowrap">MASTER</span><span style="position:absolute;left:2px;top:8.5px;font-size:6.5px;line-height:7px;font-weight:bold;color:#3e4e40;white-space:nowrap">RCV SND</span><span style="position:absolute;left:7px;top:15px;font-size:10px;line-height:12px;color:#e0e0e0;letter-spacing:2.5px;white-space:nowrap">I/O</span></div>
<div style="left:2014.55px;top:769px;white-space:nowrap;--jpx:0.78;font-size:13.5px;color:#d4d4d4;line-height:15px;max-width:67.85px;overflow:hidden;letter-spacing:-0.4px"><svg width="60.0" height="11.1" style="display:inline-block;vertical-align:-1.1px;overflow:visible;position:static"><path transform="translate(0.53,0) scale(0.863,1.107)" d="M5,0.3 L9.5,0.3 L9.5,1 Q7,2.5 7,5 Q7,7.5 9.5,9 L9.5,9.7 L5,9.7 Z" fill="#d4d4d4"/><path transform="translate(10.53,0) scale(0.863,1.107)" d="M2.5,1 L2.5,9 L9,4" fill="none" stroke="#d4d4d4" stroke-width="1.04" stroke-linecap="round" stroke-linejoin="round"/><path transform="translate(20.53,0) scale(0.863,1.107)" d="M7.5,0.8 L1.5,6 M5,3.8 L5,9.8" fill="none" stroke="#d4d4d4" stroke-width="1.04" stroke-linecap="round" stroke-linejoin="round"/><path transform="translate(30.54,0) scale(0.863,1.107)" d="M1.5,1.5 L3.2,2.8 M1,4.5 L2.7,5.8 M2,9.5 Q7,7.5 9,2 M7.8,0.2 L8.5,1.6 M9.3,0.2 L10,1.6" fill="none" stroke="#d4d4d4" stroke-width="1.04" stroke-linecap="round" stroke-linejoin="round"/><path transform="translate(40.54,0) scale(0.863,1.107)" d="M1,5 L9,5" fill="none" stroke="#d4d4d4" stroke-width="1.04" stroke-linecap="round" stroke-linejoin="round"/><path transform="translate(50.54,0) scale(0.863,1.107)" d="M2,1.5 L8,1.5 M8,1.5 Q6,6.5 1.5,9.5 M5.2,5.8 L9,9.3" fill="none" stroke="#d4d4d4" stroke-width="1.04" stroke-linecap="round" stroke-linejoin="round"/></svg>:</div>
<div style="left:2013.55px;top:786px;width:71.85px;height:138px;background:linear-gradient(180deg,#bcc8c8,#aab6b6)"></div>
<div style="left:2033.55px;top:803.5px;width:45.0px;height:14.5px;background:#7e8c8c;border-radius:2px"><span style="position:absolute;right:3px;top:0px;font-size:10.5px;color:#e4ecec">center</span></div>
<div style="left:2021.05px;top:800px;width:22.0px;height:22px;border-radius:50%;background:radial-gradient(circle at 45% 35%,#fafafa,#c8c8c8 60%,#8a8a8a);border:2px solid #5a6464"><div style="left:8.5px;top:1px;width:1px;height:8px;background:#333;"></div></div>
<div style="left:2021.55px;top:836.7px;width:33.0px;height:87.3px;background:linear-gradient(90deg,#3a3a3a,#2a2a2a);border:1px solid #1a1a1a;border-radius:2px"></div>
<div style="left:2040.55px;top:842px;width:12.0px;height:82px;background:#262626"></div>
<div style="left:2041.55px;top:843px;width:5.0px;height:81px;background:#2e2e2e"></div>
<div style="left:2047.55px;top:843px;width:5.0px;height:81px;background:#2e2e2e"></div>
<div style="left:2030.55px;top:855px;width:1.5px;height:69px;background:#111"></div>
<div style="left:2024.05px;top:873px;width:14.0px;height:32px;background:linear-gradient(90deg,#b8b8b8,#fafafa 35%,#e8e8e8 70%,#a8a8a8);border-radius:2px;box-shadow:0 1px 2px #000"><div style="left:2px;top:15px;width:10px;height:1px;background:#333"></div></div>
<div style="left:2061.55px;top:836.7px;width:16.0px;height:15.7px;background:linear-gradient(180deg,#f4f4f4,#cfcfcf);border:1px solid #6a7070;border-radius:2px"><span style="position:absolute;left:2.5px;top:0px;font-size:12px;color:#a01010">M</span></div>
<div style="left:2061.55px;top:857px;width:16.0px;height:16px;background:linear-gradient(180deg,#f4f4f4,#cfcfcf);border:1px solid #6a7070;border-radius:2px"><span style="position:absolute;left:3.5px;top:1px;font-size:11px;color:#6a6a10">S</span></div>
<div style="left:2061.55px;top:878px;width:16.0px;height:13px;background:linear-gradient(180deg,#4cc25c,#2e9a3e);border:1px solid #4a6a50;border-radius:2px"><div style="left:4.5px;top:2.5px;width:7px;height:7px;background:#0a3010;clip-path:polygon(0 0,100% 50%,0 100%)"></div></div>
<div style="left:2061.55px;top:895px;width:16.0px;height:13.5px;background:linear-gradient(180deg,#b8c4c4,#9aa6a6);border:1px solid #5e6a6a;border-radius:1px"><svg width="16" height="13"><polyline points="3,9 8,4 13,9" fill="none" stroke="#222" stroke-width="1.2"/></svg></div>
<div style="left:2086.4px;top:729px;width:72.85px;height:57px;background:#2c2c2c"></div>
<div style="left:2158.25px;top:729px;width:1.0px;height:195px;background:#1e1e1e"></div>
<div style="left:2090.4px;top:734.5px;width:22.0px;height:29.5px;background:linear-gradient(180deg,#6cd47a,#3fae50);border:1px solid #244a28;border-radius:2px"><svg style="position:absolute;left:5px;top:2px" width="10" height="10"><path d="M3.2,3.0 A3.3,3.3 0 1 0 6.8,3.0" fill="none" stroke="#0a3a10" stroke-width="1.2"/><line x1="5.0" y1="1.0" x2="5.0" y2="5.0" stroke="#0a3a10" stroke-width="1.2"/></svg><span style="position:absolute;left:3px;top:15px;font-size:10px;line-height:12px;color:#0a3a10;letter-spacing:2.5px">FX</span></div>
<div style="left:2090.4px;top:749px;width:22.0px;height:1px;background:#2a7a34"></div>
<div style="left:2116.4px;top:734.5px;width:38.0px;height:29.5px;background:#1c1c1c;border:1px solid #3a3a3a;border-radius:2px"><span style="position:absolute;left:2px;top:1px;font-size:7.5px;line-height:8px;font-weight:bold;color:#58c060;white-space:nowrap">MASTER</span><span style="position:absolute;left:2px;top:8.5px;font-size:6.5px;line-height:7px;font-weight:bold;color:#3e4e40;white-space:nowrap">RCV SND</span><span style="position:absolute;left:7px;top:15px;font-size:10px;line-height:12px;color:#e0e0e0;letter-spacing:2.5px;white-space:nowrap">I/O</span></div>
<div style="left:2087.4px;top:769px;white-space:nowrap;--jpx:0.78;font-size:13.5px;color:#d4d4d4;line-height:15px;max-width:67.85px;overflow:hidden;letter-spacing:-0.4px"><svg width="60.0" height="11.1" style="display:inline-block;vertical-align:-1.1px;overflow:visible;position:static"><path transform="translate(0.53,0) scale(0.863,1.107)" d="M5,0.3 L9.5,0.3 L9.5,1 Q7,2.5 7,5 Q7,7.5 9.5,9 L9.5,9.7 L5,9.7 Z" fill="#d4d4d4"/><path transform="translate(10.53,0) scale(0.863,1.107)" d="M2.5,1 L2.5,9 L9,4" fill="none" stroke="#d4d4d4" stroke-width="1.04" stroke-linecap="round" stroke-linejoin="round"/><path transform="translate(20.53,0) scale(0.863,1.107)" d="M7.5,0.8 L1.5,6 M5,3.8 L5,9.8" fill="none" stroke="#d4d4d4" stroke-width="1.04" stroke-linecap="round" stroke-linejoin="round"/><path transform="translate(30.54,0) scale(0.863,1.107)" d="M1.5,1.5 L3.2,2.8 M1,4.5 L2.7,5.8 M2,9.5 Q7,7.5 9,2 M7.8,0.2 L8.5,1.6 M9.3,0.2 L10,1.6" fill="none" stroke="#d4d4d4" stroke-width="1.04" stroke-linecap="round" stroke-linejoin="round"/><path transform="translate(40.54,0) scale(0.863,1.107)" d="M1,5 L9,5" fill="none" stroke="#d4d4d4" stroke-width="1.04" stroke-linecap="round" stroke-linejoin="round"/><path transform="translate(50.54,0) scale(0.863,1.107)" d="M2,1.5 L8,1.5 M8,1.5 Q6,6.5 1.5,9.5 M5.2,5.8 L9,9.3" fill="none" stroke="#d4d4d4" stroke-width="1.04" stroke-linecap="round" stroke-linejoin="round"/></svg>:</div>
<div style="left:2086.4px;top:786px;width:71.85px;height:138px;background:linear-gradient(180deg,#bcc8c8,#aab6b6)"></div>
<div style="left:2106.4px;top:803.5px;width:45.0px;height:14.5px;background:#7e8c8c;border-radius:2px"><span style="position:absolute;right:3px;top:0px;font-size:10.5px;color:#e4ecec">center</span></div>
<div style="left:2093.9px;top:800px;width:22.0px;height:22px;border-radius:50%;background:radial-gradient(circle at 45% 35%,#fafafa,#c8c8c8 60%,#8a8a8a);border:2px solid #5a6464"><div style="left:8.5px;top:1px;width:1px;height:8px;background:#333;"></div></div>
<div style="left:2094.4px;top:836.7px;width:33.0px;height:87.3px;background:linear-gradient(90deg,#3a3a3a,#2a2a2a);border:1px solid #1a1a1a;border-radius:2px"></div>
<div style="left:2113.4px;top:842px;width:12.0px;height:82px;background:#262626"></div>
<div style="left:2114.4px;top:843px;width:5.0px;height:81px;background:#2e2e2e"></div>
<div style="left:2120.4px;top:843px;width:5.0px;height:81px;background:#2e2e2e"></div>
<div style="left:2103.4px;top:855px;width:1.5px;height:69px;background:#111"></div>
<div style="left:2113.4px;top:847px;width:11.0px;height:11px;background:#d03030;border-radius:1px"><span style="position:absolute;left:1px;top:0px;font-size:9px;font-weight:bold;color:#fdd">M</span></div>
<div style="left:2096.9px;top:862px;width:14.0px;height:32px;background:linear-gradient(90deg,#b8b8b8,#fafafa 35%,#e8e8e8 70%,#a8a8a8);border-radius:2px;box-shadow:0 1px 2px #000"><div style="left:2px;top:15px;width:10px;height:1px;background:#333"></div></div>
<div style="left:2134.4px;top:836.7px;width:16.0px;height:15.7px;background:linear-gradient(180deg,#f07070,#d84848);border:1px solid #6a7070;border-radius:2px"><span style="position:absolute;left:2.5px;top:0px;font-size:12px;color:#a01010">M</span></div>
<div style="left:2134.4px;top:857px;width:16.0px;height:16px;background:linear-gradient(180deg,#f4f4f4,#cfcfcf);border:1px solid #6a7070;border-radius:2px"><span style="position:absolute;left:3.5px;top:1px;font-size:11px;color:#6a6a10">S</span></div>
<div style="left:2134.4px;top:878px;width:16.0px;height:13px;background:linear-gradient(180deg,#4cc25c,#2e9a3e);border:1px solid #4a6a50;border-radius:2px"><div style="left:4.5px;top:2.5px;width:7px;height:7px;background:#0a3010;clip-path:polygon(0 0,100% 50%,0 100%)"></div></div>
<div style="left:2134.4px;top:895px;width:16.0px;height:13.5px;background:linear-gradient(180deg,#b8c4c4,#9aa6a6);border:1px solid #5e6a6a;border-radius:1px"><svg width="16" height="13"><polyline points="3,9 8,4 13,9" fill="none" stroke="#222" stroke-width="1.2"/></svg></div>
<div style="left:2159.25px;top:729px;width:72.85px;height:57px;background:#2c2c2c"></div>
<div style="left:2231.1px;top:729px;width:1.0px;height:195px;background:#1e1e1e"></div>
<div style="left:2163.25px;top:734.5px;width:22.0px;height:29.5px;background:linear-gradient(180deg,#6cd47a,#3fae50);border:1px solid #244a28;border-radius:2px"><svg style="position:absolute;left:5px;top:2px" width="10" height="10"><path d="M3.2,3.0 A3.3,3.3 0 1 0 6.8,3.0" fill="none" stroke="#0a3a10" stroke-width="1.2"/><line x1="5.0" y1="1.0" x2="5.0" y2="5.0" stroke="#0a3a10" stroke-width="1.2"/></svg><span style="position:absolute;left:3px;top:15px;font-size:10px;line-height:12px;color:#0a3a10;letter-spacing:2.5px">FX</span></div>
<div style="left:2163.25px;top:749px;width:22.0px;height:1px;background:#2a7a34"></div>
<div style="left:2189.25px;top:734.5px;width:38.0px;height:29.5px;background:#1c1c1c;border:1px solid #3a3a3a;border-radius:2px"><span style="position:absolute;left:2px;top:1px;font-size:7.5px;line-height:8px;font-weight:bold;color:#58c060;white-space:nowrap">MASTER</span><span style="position:absolute;left:2px;top:8.5px;font-size:6.5px;line-height:7px;font-weight:bold;color:#3e4e40;white-space:nowrap">RCV SND</span><span style="position:absolute;left:7px;top:15px;font-size:10px;line-height:12px;color:#e0e0e0;letter-spacing:2.5px;white-space:nowrap">I/O</span></div>
<div style="left:2160.25px;top:769px;white-space:nowrap;--jpx:0.78;font-size:13.5px;color:#d4d4d4;line-height:15px;max-width:67.85px;overflow:hidden;letter-spacing:-0.4px"><svg width="60.0" height="11.1" style="display:inline-block;vertical-align:-1.1px;overflow:visible;position:static"><path transform="translate(0.53,0) scale(0.863,1.107)" d="M5,0.3 L9.5,0.3 L9.5,1 Q7,2.5 7,5 Q7,7.5 9.5,9 L9.5,9.7 L5,9.7 Z" fill="#d4d4d4"/><path transform="translate(10.53,0) scale(0.863,1.107)" d="M2.5,1 L2.5,9 L9,4" fill="none" stroke="#d4d4d4" stroke-width="1.04" stroke-linecap="round" stroke-linejoin="round"/><path transform="translate(20.53,0) scale(0.863,1.107)" d="M7.5,0.8 L1.5,6 M5,3.8 L5,9.8" fill="none" stroke="#d4d4d4" stroke-width="1.04" stroke-linecap="round" stroke-linejoin="round"/><path transform="translate(30.54,0) scale(0.863,1.107)" d="M1.5,1.5 L3.2,2.8 M1,4.5 L2.7,5.8 M2,9.5 Q7,7.5 9,2 M7.8,0.2 L8.5,1.6 M9.3,0.2 L10,1.6" fill="none" stroke="#d4d4d4" stroke-width="1.04" stroke-linecap="round" stroke-linejoin="round"/><path transform="translate(40.54,0) scale(0.863,1.107)" d="M1,5 L9,5" fill="none" stroke="#d4d4d4" stroke-width="1.04" stroke-linecap="round" stroke-linejoin="round"/><path transform="translate(50.54,0) scale(0.863,1.107)" d="M2,1.5 L8,1.5 M8,1.5 Q6,6.5 1.5,9.5 M5.2,5.8 L9,9.3" fill="none" stroke="#d4d4d4" stroke-width="1.04" stroke-linecap="round" stroke-linejoin="round"/></svg>:</div>
<div style="left:2159.25px;top:786px;width:71.85px;height:138px;background:linear-gradient(180deg,#bcc8c8,#aab6b6)"></div>
<div style="left:2179.25px;top:803.5px;width:45.0px;height:14.5px;background:#7e8c8c;border-radius:2px"><span style="position:absolute;right:3px;top:0px;font-size:10.5px;color:#e4ecec">center</span></div>
<div style="left:2166.75px;top:800px;width:22.0px;height:22px;border-radius:50%;background:radial-gradient(circle at 45% 35%,#fafafa,#c8c8c8 60%,#8a8a8a);border:2px solid #5a6464"><div style="left:8.5px;top:1px;width:1px;height:8px;background:#333;"></div></div>
<div style="left:2167.25px;top:836.7px;width:33.0px;height:87.3px;background:linear-gradient(90deg,#3a3a3a,#2a2a2a);border:1px solid #1a1a1a;border-radius:2px"></div>
<div style="left:2186.25px;top:842px;width:12.0px;height:82px;background:#262626"></div>
<div style="left:2187.25px;top:843px;width:5.0px;height:81px;background:#2e2e2e"></div>
<div style="left:2193.25px;top:843px;width:5.0px;height:81px;background:#2e2e2e"></div>
<div style="left:2176.25px;top:855px;width:1.5px;height:69px;background:#111"></div>
<div style="left:2169.75px;top:861px;width:14.0px;height:32px;background:linear-gradient(90deg,#b8b8b8,#fafafa 35%,#e8e8e8 70%,#a8a8a8);border-radius:2px;box-shadow:0 1px 2px #000"><div style="left:2px;top:15px;width:10px;height:1px;background:#333"></div></div>
<div style="left:2207.25px;top:836.7px;width:16.0px;height:15.7px;background:linear-gradient(180deg,#f4f4f4,#cfcfcf);border:1px solid #6a7070;border-radius:2px"><span style="position:absolute;left:2.5px;top:0px;font-size:12px;color:#a01010">M</span></div>
<div style="left:2207.25px;top:857px;width:16.0px;height:16px;background:linear-gradient(180deg,#f4f4f4,#cfcfcf);border:1px solid #6a7070;border-radius:2px"><span style="position:absolute;left:3.5px;top:1px;font-size:11px;color:#6a6a10">S</span></div>
<div style="left:2207.25px;top:878px;width:16.0px;height:13px;background:linear-gradient(180deg,#4cc25c,#2e9a3e);border:1px solid #4a6a50;border-radius:2px"><div style="left:4.5px;top:2.5px;width:7px;height:7px;background:#0a3010;clip-path:polygon(0 0,100% 50%,0 100%)"></div></div>
<div style="left:2207.25px;top:895px;width:16.0px;height:13.5px;background:linear-gradient(180deg,#b8c4c4,#9aa6a6);border:1px solid #5e6a6a;border-radius:1px"><svg width="16" height="13"><polyline points="3,9 8,4 13,9" fill="none" stroke="#222" stroke-width="1.2"/></svg></div>
<div style="left:2232.1px;top:729px;width:72.85px;height:57px;background:#2c2c2c"></div>
<div style="left:2303.95px;top:729px;width:1.0px;height:195px;background:#1e1e1e"></div>
<div style="left:2236.1px;top:734.5px;width:22.0px;height:29.5px;background:linear-gradient(180deg,#6cd47a,#3fae50);border:1px solid #244a28;border-radius:2px"><svg style="position:absolute;left:5px;top:2px" width="10" height="10"><path d="M3.2,3.0 A3.3,3.3 0 1 0 6.8,3.0" fill="none" stroke="#0a3a10" stroke-width="1.2"/><line x1="5.0" y1="1.0" x2="5.0" y2="5.0" stroke="#0a3a10" stroke-width="1.2"/></svg><span style="position:absolute;left:3px;top:15px;font-size:10px;line-height:12px;color:#0a3a10;letter-spacing:2.5px">FX</span></div>
<div style="left:2236.1px;top:749px;width:22.0px;height:1px;background:#2a7a34"></div>
<div style="left:2262.1px;top:734.5px;width:38.0px;height:29.5px;background:#1c1c1c;border:1px solid #3a3a3a;border-radius:2px"><span style="position:absolute;left:2px;top:1px;font-size:7.5px;line-height:8px;font-weight:bold;color:#58c060;white-space:nowrap">MASTER</span><span style="position:absolute;left:2px;top:8.5px;font-size:6.5px;line-height:7px;font-weight:bold;color:#3e4e40;white-space:nowrap">RCV SND</span><span style="position:absolute;left:7px;top:15px;font-size:10px;line-height:12px;color:#e0e0e0;letter-spacing:2.5px;white-space:nowrap">I/O</span></div>
<div style="left:2232.1px;top:786px;width:71.85px;height:138px;background:linear-gradient(180deg,#bcc8c8,#aab6b6)"></div>
<div style="left:2252.1px;top:803.5px;width:45.0px;height:14.5px;background:#7e8c8c;border-radius:2px"><span style="position:absolute;right:3px;top:0px;font-size:10.5px;color:#e4ecec">40%R</span></div>
<div style="left:2239.6px;top:800px;width:22.0px;height:22px;border-radius:50%;background:radial-gradient(circle at 45% 35%,#fafafa,#c8c8c8 60%,#8a8a8a);border:2px solid #5a6464"><div style="left:8.5px;top:1px;width:1px;height:8px;background:#333;transform:rotate(60deg);transform-origin:50% 100%;"></div></div>
<div style="left:2240.1px;top:836.7px;width:33.0px;height:87.3px;background:linear-gradient(90deg,#3a3a3a,#2a2a2a);border:1px solid #1a1a1a;border-radius:2px"></div>
<div style="left:2259.1px;top:842px;width:12.0px;height:82px;background:#262626"></div>
<div style="left:2260.1px;top:843px;width:5.0px;height:81px;background:#2e2e2e"></div>
<div style="left:2266.1px;top:843px;width:5.0px;height:81px;background:#2e2e2e"></div>
<div style="left:2249.1px;top:855px;width:1.5px;height:69px;background:#111"></div>
<div style="left:2242.6px;top:871px;width:14.0px;height:32px;background:linear-gradient(90deg,#b8b8b8,#fafafa 35%,#e8e8e8 70%,#a8a8a8);border-radius:2px;box-shadow:0 1px 2px #000"><div style="left:2px;top:15px;width:10px;height:1px;background:#333"></div></div>
<div style="left:2280.1px;top:836.7px;width:16.0px;height:15.7px;background:linear-gradient(180deg,#f4f4f4,#cfcfcf);border:1px solid #6a7070;border-radius:2px"><span style="position:absolute;left:2.5px;top:0px;font-size:12px;color:#a01010">M</span></div>
<div style="left:2280.1px;top:857px;width:16.0px;height:16px;background:linear-gradient(180deg,#f4f4f4,#cfcfcf);border:1px solid #6a7070;border-radius:2px"><span style="position:absolute;left:3.5px;top:1px;font-size:11px;color:#6a6a10">S</span></div>
<div style="left:2280.1px;top:878px;width:16.0px;height:13px;background:linear-gradient(180deg,#b8c4c4,#9eaaaa);border:1px solid #4a6a50;border-radius:2px"><div style="left:4.5px;top:2.5px;width:7px;height:7px;background:#e8f0f0;clip-path:polygon(0 0,100% 50%,0 100%)"></div></div>
<div style="left:2280.1px;top:895px;width:16.0px;height:13.5px;background:linear-gradient(180deg,#b8c4c4,#9aa6a6);border:1px solid #5e6a6a;border-radius:1px"><svg width="16" height="13"><polyline points="3,9 8,4 13,9" fill="none" stroke="#222" stroke-width="1.2"/></svg></div>
<div style="left:2304.95px;top:729px;width:72.85px;height:57px;background:#2c2c2c"></div>
<div style="left:2376.8px;top:729px;width:1.0px;height:195px;background:#1e1e1e"></div>
<div style="left:2308.95px;top:734.5px;width:22.0px;height:29.5px;background:linear-gradient(180deg,#6cd47a,#3fae50);border:1px solid #244a28;border-radius:2px"><svg style="position:absolute;left:5px;top:2px" width="10" height="10"><path d="M3.2,3.0 A3.3,3.3 0 1 0 6.8,3.0" fill="none" stroke="#0a3a10" stroke-width="1.2"/><line x1="5.0" y1="1.0" x2="5.0" y2="5.0" stroke="#0a3a10" stroke-width="1.2"/></svg><span style="position:absolute;left:3px;top:15px;font-size:10px;line-height:12px;color:#0a3a10;letter-spacing:2.5px">FX</span></div>
<div style="left:2308.95px;top:749px;width:22.0px;height:1px;background:#2a7a34"></div>
<div style="left:2334.95px;top:734.5px;width:38.0px;height:29.5px;background:#1c1c1c;border:1px solid #3a3a3a;border-radius:2px"><span style="position:absolute;left:2px;top:1px;font-size:7.5px;line-height:8px;font-weight:bold;color:#58c060;white-space:nowrap">MASTER</span><span style="position:absolute;left:2px;top:8.5px;font-size:6.5px;line-height:7px;font-weight:bold;color:#3e4e40;white-space:nowrap">RCV SND</span><span style="position:absolute;left:7px;top:15px;font-size:10px;line-height:12px;color:#e0e0e0;letter-spacing:2.5px;white-space:nowrap">I/O</span></div>
<div style="left:2304.95px;top:786px;width:71.85px;height:138px;background:linear-gradient(180deg,#bcc8c8,#aab6b6)"></div>
<div style="left:2324.95px;top:803.5px;width:45.0px;height:14.5px;background:#7e8c8c;border-radius:2px"><span style="position:absolute;right:3px;top:0px;font-size:10.5px;color:#e4ecec">40%R</span></div>
<div style="left:2312.45px;top:800px;width:22.0px;height:22px;border-radius:50%;background:radial-gradient(circle at 45% 35%,#fafafa,#c8c8c8 60%,#8a8a8a);border:2px solid #5a6464"><div style="left:8.5px;top:1px;width:1px;height:8px;background:#333;transform:rotate(60deg);transform-origin:50% 100%;"></div></div>
<div style="left:2312.95px;top:836.7px;width:33.0px;height:87.3px;background:linear-gradient(90deg,#3a3a3a,#2a2a2a);border:1px solid #1a1a1a;border-radius:2px"></div>
<div style="left:2331.95px;top:842px;width:12.0px;height:82px;background:#262626"></div>
<div style="left:2332.95px;top:843px;width:5.0px;height:81px;background:#2e2e2e"></div>
<div style="left:2338.95px;top:843px;width:5.0px;height:81px;background:#2e2e2e"></div>
<div style="left:2321.95px;top:855px;width:1.5px;height:69px;background:#111"></div>
<div style="left:2315.45px;top:871px;width:14.0px;height:32px;background:linear-gradient(90deg,#b8b8b8,#fafafa 35%,#e8e8e8 70%,#a8a8a8);border-radius:2px;box-shadow:0 1px 2px #000"><div style="left:2px;top:15px;width:10px;height:1px;background:#333"></div></div>
<div style="left:2352.95px;top:836.7px;width:16.0px;height:15.7px;background:linear-gradient(180deg,#f4f4f4,#cfcfcf);border:1px solid #6a7070;border-radius:2px"><span style="position:absolute;left:2.5px;top:0px;font-size:12px;color:#a01010">M</span></div>
<div style="left:2352.95px;top:857px;width:16.0px;height:16px;background:linear-gradient(180deg,#f4f4f4,#cfcfcf);border:1px solid #6a7070;border-radius:2px"><span style="position:absolute;left:3.5px;top:1px;font-size:11px;color:#6a6a10">S</span></div>
<div style="left:2352.95px;top:878px;width:16.0px;height:13px;background:linear-gradient(180deg,#b8c4c4,#9eaaaa);border:1px solid #4a6a50;border-radius:2px"><div style="left:4.5px;top:2.5px;width:7px;height:7px;background:#e8f0f0;clip-path:polygon(0 0,100% 50%,0 100%)"></div></div>
<div style="left:2352.95px;top:895px;width:16.0px;height:13.5px;background:linear-gradient(180deg,#b8c4c4,#9aa6a6);border:1px solid #5e6a6a;border-radius:1px"><svg width="16" height="13"><polyline points="3,9 8,4 13,9" fill="none" stroke="#222" stroke-width="1.2"/></svg></div>
<div style="left:2377.8px;top:725.5px;width:1158.2px;height:198.5px;background:#333"></div>
</body></html>
